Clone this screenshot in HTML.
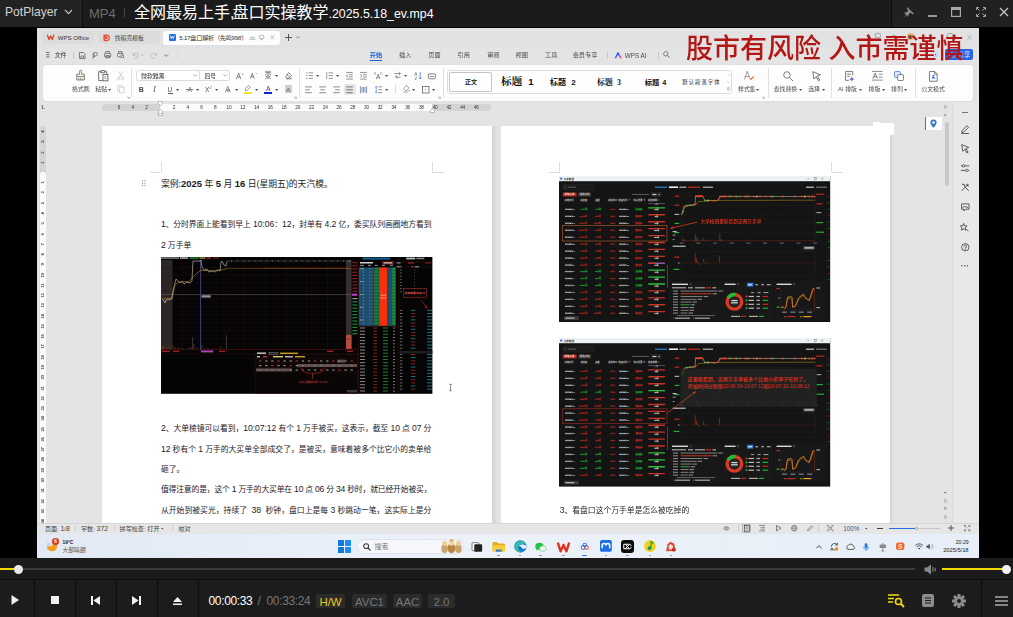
<!DOCTYPE html>
<html lang="zh">
<head>
<meta charset="utf-8">
<title>PotPlayer</title>
<style>
*{box-sizing:border-box;margin:0;padding:0}
html,body{width:1013px;height:617px;overflow:hidden;background:#000}
body{position:relative;font-family:"Liberation Sans","Noto Sans CJK SC",sans-serif;color:#fff}
.abs,.abs div,.abs svg{position:absolute}
.abs svg{overflow:visible}
.t{white-space:nowrap}
#v{left:37px;top:27.6px;width:942px;height:530.6px;background:#e4e4e4;overflow:hidden;color:#333}
#w{left:-37px;top:-27.6px;width:1013px;height:617px;filter:blur(0.35px)}
.serif{font-family:"Liberation Serif","Noto Serif CJK SC",serif}
</style>
</head>
<body>
<div class="abs" style="left:0;top:0;width:1013px;height:617px">
<div id="v"><div id="w">
<div style="left:37px;top:27px;width:942px;height:21px;background:#e2e2e2;"></div>
<div style="left:41.5px;top:30.8px;width:53.5px;height:13.6px;background:#dcdcdc;border-radius:3px"></div>
<svg style="left:46.80px;top:34.10px;" width="7.4" height="6.4" viewBox="0 0 7.4 6.4"><path d="M0.3 0.8 L2 5.6 L3.6 2 L5.2 5.6 L7 0.8" fill="none" stroke="#e03a22" stroke-width="1.3" stroke-linejoin="round"/></svg>
<div class="t" style="left:57.7px;top:33.66px;font-size:6.1px;line-height:7px;color:#333;">WPS Office</div>
<div style="left:98.3px;top:30.8px;width:61.8px;height:13.6px;background:#dcdcdc;border-radius:3px"></div>
<svg style="left:103.40px;top:33.60px;" width="7.2" height="7.6" viewBox="0 0 7.2 7.6"><path d="M0.4 1.6 A1.2 1.2 0 0 1 1.6 0.4 H3.6 A3.4 3.4 0 0 1 3.6 7.2 H1.6 A1.2 1.2 0 0 1 0.4 6 Z" fill="#f0503a"/><path d="M3.6 2.2 A1.7 1.7 0 1 1 2.2 4.6" fill="none" stroke="#fff" stroke-width="0.8"/></svg>
<div class="t" style="left:114.8px;top:34.55px;font-size:5.8px;line-height:6px;color:#444;">找稻壳模板</div>
<div style="left:162.5px;top:30.5px;width:117.5px;height:14.3px;background:#fdfdfd;border-radius:3px"></div>
<div style="left:168.5px;top:33.8px;width:7px;height:7px;background:#1a6fe0;border-radius:1.2px"></div>
<svg style="left:169.70px;top:35.20px;" width="4.6" height="4.2" viewBox="0 0 4.6 4.2"><path d="M0.3 0.5 L1.3 3.6 L2.3 1.4 L3.3 3.6 L4.3 0.5" fill="none" stroke="#fff" stroke-width="0.8"/></svg>
<div class="t" style="left:179.3px;top:33.66px;font-size:6.1px;line-height:7px;color:#333;letter-spacing:-0.2px">5.17盘口解析（先鸣998）</div>
<div class="t" style="left:248.2px;top:34.60px;font-size:5.4px;line-height:6px;color:#999;">.dc</div>
<svg style="left:259.40px;top:34.90px;" width="5.2" height="5" viewBox="0 0 5.2 5"><rect x="0.4" y="0.4" width="4.4" height="3.2" rx="0.8" fill="none" stroke="#999" stroke-width="0.7"/><path d="M1.6 4.6 H3.6" stroke="#999" stroke-width="0.7"/></svg>
<svg style="left:270.00px;top:35.10px;" width="4.6" height="4.6" viewBox="0 0 4.6 4.6"><path d="M0.5 0.5 L4.1 4.1 M4.1 0.5 L0.5 4.1" stroke="#999" stroke-width="0.7"/></svg>
<svg style="left:284.50px;top:33.90px;" width="7" height="7" viewBox="0 0 7 7"><path d="M3.5 0 V7 M0 3.5 H7" stroke="#444" stroke-width="0.9"/></svg>
<svg style="left:296.20px;top:36.30px;" width="3.6" height="2.6" viewBox="0 0 3.6 2.6"><path d="M0.3 0.5 L1.8 2 L3.3 0.5" fill="none" stroke="#666" stroke-width="0.7"/></svg>
<svg style="left:967.00px;top:35.10px;" width="5" height="5" viewBox="0 0 5 5"><path d="M0.5 0.5 L4.5 4.5 M4.5 0.5 L0.5 4.5" stroke="#999" stroke-width="0.7"/></svg>
<svg style="left:874.90px;top:33.10px;" width="5.8" height="5" viewBox="0 0 5.8 5"><rect x="0.4" y="0.4" width="5" height="4.2" rx="0.9" fill="none" stroke="#8a8a8a" stroke-width="0.7"/></svg>
<svg style="left:890.50px;top:33.60px;" width="5.6" height="4" viewBox="0 0 5.6 4"><path d="M0.4 3.6 A2.4 2.4 0 0 1 5.2 3.6" fill="none" stroke="#8a8a8a" stroke-width="0.7"/></svg>
<div style="left:906.6px;top:33px;width:7.4px;height:7.4px;background:#e8b070;border-radius:50%"></div>
<div style="left:908.2px;top:35px;width:4.2px;height:4.2px;background:#7a4a2a;border-radius:50%"></div>
<svg style="left:947.40px;top:33.10px;" width="5.8" height="5" viewBox="0 0 5.8 5"><rect x="0.4" y="0.4" width="5" height="4.2" rx="0.9" fill="none" stroke="#8a8a8a" stroke-width="0.7"/></svg>
<svg style="left:933.40px;top:51.80px;" width="5.2" height="5.2" viewBox="0 0 5.2 5.2"><circle cx="2.6" cy="2.6" r="2.3" fill="#f4f7ff" stroke="#9aa8c8" stroke-width="0.5"/><circle cx="2.6" cy="2.6" r="0.9" fill="#3a6ae0"/></svg>
<svg style="left:46.40px;top:52.10px;" width="3.6" height="5.4" viewBox="0 0 3.6 5.4"><path d="M0 0.5 H3.6 M0 2.7 H3.6 M0 4.9 H3.6" stroke="#444" stroke-width="0.7"/></svg>
<div class="t" style="left:54.7px;top:52.18px;font-size:5.9px;line-height:6px;color:#333;">文件</div>
<div style="left:72.7px;top:51.5px;width:0.6px;height:7px;background:#c8c8c8;"></div>
<svg style="left:78.95px;top:51.50px;" width="6.5" height="7" viewBox="0 0 6.5 7"><path d="M0.5 0.5 H4.4 L6 2.2 V6.5 H0.5 Z M2 6.4 V4 H4.6 V6.4" fill="none" stroke="#555" stroke-width="0.7"/></svg>
<svg style="left:92.30px;top:51.50px;" width="6" height="7" viewBox="0 0 6 7"><circle cx="3.6" cy="2.2" r="1.8" fill="none" stroke="#555" stroke-width="0.7"/><path d="M1.2 0.6 V6.8 M1.2 4.6 H3" stroke="#555" stroke-width="0.7" fill="none"/></svg>
<svg style="left:104.30px;top:51.40px;" width="7.4" height="7.2" viewBox="0 0 7.4 7.2"><rect x="0.5" y="2.4" width="6.4" height="3.4" rx="0.8" fill="none" stroke="#555" stroke-width="0.7"/><path d="M1.8 2.4 V0.5 H5.6 V2.4 M1.8 4.6 H5.6 V6.8 H1.8 Z" fill="none" stroke="#555" stroke-width="0.7"/></svg>
<svg style="left:117.30px;top:51.30px;" width="7.4" height="7.4" viewBox="0 0 7.4 7.4"><rect x="0.5" y="2.4" width="5.6" height="3.4" rx="0.8" fill="none" stroke="#555" stroke-width="0.7"/><path d="M1.6 2.4 V0.5 H5 V2.4" fill="none" stroke="#555" stroke-width="0.7"/><circle cx="5.2" cy="5.2" r="1.4" fill="#e4e4e4" stroke="#555" stroke-width="0.7"/><path d="M6.2 6.2 L7.2 7.2" stroke="#555" stroke-width="0.7"/></svg>
<svg style="left:131.80px;top:51.70px;" width="6.4" height="6.6" viewBox="0 0 6.4 6.6"><path d="M1 1 V3.4 H3.4 M1.2 3.2 A2.6 2.6 0 1 1 2.6 6" fill="none" stroke="#aaa" stroke-width="0.7"/></svg>
<svg style="left:140.50px;top:54.40px;" width="3" height="2" viewBox="0 0 3 2"><path d="M0.3 0.4 L1.5 1.6 L2.7 0.4" fill="none" stroke="#aaa" stroke-width="0.6"/></svg>
<svg style="left:150.80px;top:51.70px;" width="6.4" height="6.6" viewBox="0 0 6.4 6.6"><path d="M5.4 1 V3.4 H3 M5.2 3.2 A2.6 2.6 0 1 0 3.8 6" fill="none" stroke="#bbb" stroke-width="0.7"/></svg>
<svg style="left:164.40px;top:53.80px;" width="4.6" height="3" viewBox="0 0 4.6 3"><path d="M0.4 0.5 L2.3 2.4 L4.2 0.5" fill="none" stroke="#555" stroke-width="0.8"/></svg>
<div style="left:176.6px;top:51.5px;width:0.6px;height:7px;background:#d9d9d9;"></div>
<div class="t" style="left:369.8px;top:51.49px;font-size:6.2px;line-height:7px;color:#1f63d8;font-weight:bold;">开始</div>
<div class="t" style="left:399px;top:51.49px;font-size:6.2px;line-height:7px;color:#4a4a4a;">插入</div>
<div class="t" style="left:428.3px;top:51.49px;font-size:6.2px;line-height:7px;color:#4a4a4a;">页面</div>
<div class="t" style="left:457.6px;top:51.49px;font-size:6.2px;line-height:7px;color:#4a4a4a;">引用</div>
<div class="t" style="left:487.2px;top:51.49px;font-size:6.2px;line-height:7px;color:#4a4a4a;">审阅</div>
<div class="t" style="left:515.5px;top:51.49px;font-size:6.2px;line-height:7px;color:#4a4a4a;">视图</div>
<div class="t" style="left:545px;top:51.49px;font-size:6.2px;line-height:7px;color:#4a4a4a;">工具</div>
<div style="left:369.8px;top:60.3px;width:12.6px;height:1.1px;background:#1f63d8;"></div>
<div class="t" style="left:572.7px;top:51.49px;font-size:6.2px;line-height:7px;color:#4a4a4a;">会员专享</div>
<div style="left:606.5px;top:51.5px;width:0.6px;height:7px;background:#c8c8c8;"></div>
<svg style="left:615.40px;top:51.60px;" width="6.4" height="6.4" viewBox="0 0 6.4 6.4"><path d="M0.6 5.6 L3 0.8 L4.2 3.4" fill="none" stroke="#3d5cf5" stroke-width="1.4" stroke-linecap="round" stroke-linejoin="round"/><path d="M4.4 3.6 L5.6 5.6" stroke="#f0358f" stroke-width="1.4" stroke-linecap="round"/></svg>
<div class="t" style="left:624.8px;top:51.53px;font-size:6.3px;line-height:7px;color:#4a4a4a;">WPS AI</div>
<div style="left:657.7px;top:51.5px;width:0.6px;height:7px;background:#c8c8c8;"></div>
<svg style="left:663.40px;top:51.40px;" width="7.2" height="7.2" viewBox="0 0 7.2 7.2"><circle cx="2.8" cy="2.8" r="2.2" fill="none" stroke="#666" stroke-width="0.8"/><path d="M4.4 4.4 L6.8 6.8" stroke="#666" stroke-width="0.9"/></svg>
<div class="t" style="left:686px;top:33.99px;font-size:27px;line-height:30px;color:#b41616;z-index:5;font-weight:500;">股市有风险 入市需谨慎</div>
<div style="left:945.3px;top:49.4px;width:27.3px;height:11px;background:#2a63e8;border-radius:2px"></div>
<div class="t" style="left:957.6px;top:51.37px;font-size:6.4px;line-height:7px;color:#e8eeff;">分享</div>
<svg style="left:948.50px;top:52.00px;" width="6" height="6" viewBox="0 0 6 6"><path d="M0.5 3.4 A2.2 2.2 0 0 1 4.6 2 A1.6 1.6 0 0 1 4.6 5.2 H1.6 A1.3 1.3 0 0 1 0.5 3.4 Z" fill="none" stroke="#dfe8ff" stroke-width="0.6"/></svg>
<div style="left:43px;top:64.7px;width:929.7px;height:36.2px;background:#fdfdfd;border-radius:3.5px;box-shadow:0 0 1.5px rgba(0,0,0,.12)"></div>
<svg style="left:75.60px;top:69.90px;" width="9.2" height="10.6" viewBox="0 0 9.2 10.6"><path d="M3.6 4.2 V1.2 A1 1 0 0 1 5.6 1.2 V4.2 H8.4 V6.4 H0.8 V4.2 Z M0.8 6.4 V10 H8.4 V6.4 M2.8 10 V8.4 M4.6 10 V7.8 M6.4 10 V8.6" fill="none" stroke="#5a5a5a" stroke-width="0.75" stroke-linejoin="round"/><path d="M1.2 6.8 H8 V9.6 H1.2 Z" fill="#f0c890" opacity=".35"/></svg>
<div class="t" style="left:72px;top:86.48px;font-size:5.9px;line-height:6px;color:#4a4a4a;">格式刷</div>
<svg style="left:97.99px;top:69.62px;" width="10.62" height="11.56" viewBox="0 0 9 9.8"><path d="M2.4 1.4 H0.6 V9 H4 M5.8 1.4 H7.4 V3.4 M2.4 0.5 H5.8 V2.3 H2.4 Z" fill="none" stroke="#555" stroke-width="0.7"/><rect x="4.2" y="3.8" width="4.2" height="5.4" fill="#fff" stroke="#555" stroke-width="0.7"/><path d="M5.4 5.6 H7.2 M5.4 7.2 H7.2" stroke="#555" stroke-width="0.5"/></svg>
<div class="t" style="left:95.3px;top:86.48px;font-size:5.9px;line-height:6px;color:#4a4a4a;">粘贴</div>
<svg style="left:108.40px;top:88.64px;" width="3.2" height="1.92" viewBox="0 0 3.2 1.92"><path d="M0 0 L3.2 0 L1.6 1.92 Z" fill="#555"/></svg>
<svg style="left:117.32px;top:71.00px;" width="7.36" height="9.2" viewBox="0 0 6.4 8"><path d="M1.4 0.4 L4.6 5.6 M5 0.4 L1.8 5.6" stroke="#c4c4c4" stroke-width="0.6"/><circle cx="1.4" cy="6.6" r="1.1" fill="none" stroke="#c4c4c4" stroke-width="0.6"/><circle cx="5" cy="6.6" r="1.1" fill="none" stroke="#c4c4c4" stroke-width="0.6"/></svg>
<svg style="left:117.19px;top:85.16px;" width="7.62" height="8.29" viewBox="0 0 6.8 7.4"><path d="M4.4 1.8 V0.5 H0.5 V5.4 H2" fill="none" stroke="#c4c4c4" stroke-width="0.6"/><rect x="2.2" y="2" width="4" height="5" fill="none" stroke="#c4c4c4" stroke-width="0.6"/></svg>
<svg style="left:126.60px;top:96.20px;" width="2.8" height="2.8" viewBox="0 0 2.8 2.8"><path d="M0.3 0.3 L2.2 2.2 M2.4 0.8 V2.4 H0.8" fill="none" stroke="#888" stroke-width="0.5"/></svg>
<div style="left:131.4px;top:67.5px;width:0.6px;height:30.5px;background:#e0e0e0;"></div>
<div style="left:136px;top:70.4px;width:64px;height:10.8px;background:#fff;border:0.7px solid #dcdcdc;border-radius:2.5px 0 0 2.5px"></div>
<div style="left:200px;top:70.4px;width:30.2px;height:10.8px;background:#fff;border:0.7px solid #dcdcdc;border-left:none;border-radius:0 2.5px 2.5px 0"></div>
<div class="t" style="left:141px;top:72.88px;font-size:5.9px;line-height:6px;color:#333;">微软雅黑</div>
<div class="t" style="left:204.4px;top:72.85px;font-size:5.8px;line-height:6px;color:#333;">四号</div>
<svg style="left:192.80px;top:74.40px;" width="4.4" height="2.8" viewBox="0 0 4.4 2.8"><path d="M0.3 0.4 L2.2 2.3 L4.1 0.4" fill="none" stroke="#777" stroke-width="0.6"/></svg>
<svg style="left:222.80px;top:74.40px;" width="4.4" height="2.8" viewBox="0 0 4.4 2.8"><path d="M0.3 0.4 L2.2 2.3 L4.1 0.4" fill="none" stroke="#777" stroke-width="0.6"/></svg>
<svg style="left:236.00px;top:72.75px;" width="5.2" height="6.5" viewBox="0 0 5.2 6.5"><path d="M0.3 6.2 L2.6 0.3 L4.9 6.2 M1.1440000000000001 4.0920000000000005 H4.056" fill="none" stroke="#555" stroke-width="0.7"/></svg>
<div class="t" style="left:241.2px;top:70.75px;font-size:4.2px;line-height:5px;color:#555;">+</div>
<svg style="left:250.30px;top:73.35px;" width="4.6" height="5.9" viewBox="0 0 4.6 5.8999999999999995"><path d="M0.3 5.6 L2.3 0.3 L4.3 5.6 M1.012 3.6959999999999997 H3.5879999999999996" fill="none" stroke="#555" stroke-width="0.7"/></svg>
<div class="t" style="left:255.4px;top:70.90px;font-size:4.6px;line-height:5px;color:#555;">-</div>
<div class="t" style="left:264.6px;top:71.26px;font-size:7.2px;line-height:9px;color:#555;">变</div>
<svg style="left:265.30px;top:71.10px;" width="6" height="1" viewBox="0 0 6 1"><path d="M0 0.4 H6" stroke="#555" stroke-width="0.5"/></svg>
<svg style="left:274.60px;top:75.04px;" width="3.2" height="1.92" viewBox="0 0 3.2 1.92"><path d="M0 0 L3.2 0 L1.6 1.92 Z" fill="#555"/></svg>
<svg style="left:284.70px;top:72.10px;" width="7.4" height="7.4" viewBox="0 0 7.4 7.4"><path d="M3.6 0.6 L6.6 3.6 L3.8 6.4 H2 L0.6 5 Z M2 2.4 L5 5.4 M1 6.8 H7" fill="none" stroke="#555" stroke-width="0.7" stroke-linejoin="round"/></svg>
<div class="t" style="left:138.8px;top:85.89px;font-size:7px;line-height:7px;color:#444;font-weight:bold">B</div>
<div class="t" style="left:153px;top:84.38px;font-size:8.6px;line-height:10px;color:#555;font-style:italic;font-family:'Liberation Serif',serif">I</div>
<div class="t" style="left:167.6px;top:85.54px;font-size:6.6px;line-height:7px;color:#555;">U</div>
<div style="left:167.6px;top:92.6px;width:5px;height:0.6px;background:#555;"></div>
<svg style="left:175.90px;top:88.64px;" width="3.2" height="1.92" viewBox="0 0 3.2 1.92"><path d="M0 0 L3.2 0 L1.6 1.92 Z" fill="#555"/></svg>
<div class="t" style="left:187.4px;top:85.72px;font-size:6.8px;line-height:7px;color:#7a7a7a;">A</div>
<div style="left:186px;top:89.3px;width:7.2px;height:0.5px;background:#7a7a7a;"></div>
<svg style="left:195.70px;top:88.64px;" width="3.2" height="1.92" viewBox="0 0 3.2 1.92"><path d="M0 0 L3.2 0 L1.6 1.92 Z" fill="#555"/></svg>
<div class="t" style="left:205px;top:85.94px;font-size:6.6px;line-height:7px;color:#555;">X</div>
<div class="t" style="left:209.6px;top:85.71px;font-size:3.8px;line-height:4px;color:#555;">2</div>
<svg style="left:215.40px;top:88.64px;" width="3.2" height="1.92" viewBox="0 0 3.2 1.92"><path d="M0 0 L3.2 0 L1.6 1.92 Z" fill="#555"/></svg>
<svg style="left:225.20px;top:85.85px;" width="5.6" height="6.7" viewBox="0 0 5.6 6.7"><path d="M0.3 6.4 L2.8 0.3 L5.3 6.4 M1.232 4.224 H4.367999999999999" fill="none" stroke="#555" stroke-width="0.6"/></svg>
<svg style="left:226.60px;top:89.20px;" width="2.8" height="2.8" viewBox="0 0 2.8 2.8"><circle cx="1.4" cy="1.4" r="1.2" fill="none" stroke="#555" stroke-width="0.5"/></svg>
<svg style="left:234.60px;top:88.64px;" width="3.2" height="1.92" viewBox="0 0 3.2 1.92"><path d="M0 0 L3.2 0 L1.6 1.92 Z" fill="#555"/></svg>
<svg style="left:244.10px;top:85.00px;" width="7" height="6" viewBox="0 0 7 6"><path d="M4.4 0.4 L6.4 2.4 L3 5.4 L1.2 5.6 L1.4 3.6 Z" fill="none" stroke="#555" stroke-width="0.6"/></svg>
<div style="left:243.6px;top:91.8px;width:8.4px;height:1.8px;background:#f5e12a;"></div>
<svg style="left:255.40px;top:88.64px;" width="3.2" height="1.92" viewBox="0 0 3.2 1.92"><path d="M0 0 L3.2 0 L1.6 1.92 Z" fill="#555"/></svg>
<div class="t" style="left:266px;top:84.84px;font-size:6.6px;line-height:7px;color:#444;">A</div>
<div style="left:264.4px;top:92px;width:7.8px;height:1.7px;background:#1428c8;"></div>
<svg style="left:274.60px;top:88.64px;" width="3.2" height="1.92" viewBox="0 0 3.2 1.92"><path d="M0 0 L3.2 0 L1.6 1.92 Z" fill="#555"/></svg>
<div style="left:284.6px;top:85.4px;width:7.6px;height:7.8px;background:#cfcfcf;border-radius:0.6px"></div>
<div class="t" style="left:286.3px;top:85.79px;font-size:6.2px;line-height:7px;color:#555;">A</div>
<svg style="left:294.00px;top:96.20px;" width="2.8" height="2.8" viewBox="0 0 2.8 2.8"><path d="M0.3 0.3 L2.2 2.2 M2.4 0.8 V2.4 H0.8" fill="none" stroke="#888" stroke-width="0.5"/></svg>
<div style="left:298.6px;top:67.5px;width:0.6px;height:30.5px;background:#e0e0e0;"></div>
<svg style="left:305.50px;top:72.20px;" width="7" height="7.2" viewBox="0 0 7 7.2"><path d="M2.6 0.8 H7" stroke="#666" stroke-width="0.7"/><path d="M2.6 3.6 H7" stroke="#666" stroke-width="0.7"/><path d="M2.6 6.4 H7" stroke="#666" stroke-width="0.7"/><rect x="0.2" y="0.30000000000000004" width="1" height="1" fill="#666"/><rect x="0.2" y="3.1" width="1" height="1" fill="#666"/><rect x="0.2" y="5.9" width="1" height="1" fill="#666"/></svg>
<svg style="left:315.80px;top:75.04px;" width="3.2" height="1.92" viewBox="0 0 3.2 1.92"><path d="M0 0 L3.2 0 L1.6 1.92 Z" fill="#555"/></svg>
<svg style="left:325.70px;top:72.20px;" width="7" height="7.2" viewBox="0 0 7 7.2"><path d="M2.6 0.8 H7" stroke="#666" stroke-width="0.7"/><path d="M2.6 3.6 H7" stroke="#666" stroke-width="0.7"/><path d="M2.6 6.4 H7" stroke="#666" stroke-width="0.7"/><path d="M0.7 0 V7.2" stroke="#666" stroke-width="0.6"/></svg>
<svg style="left:335.60px;top:75.04px;" width="3.2" height="1.92" viewBox="0 0 3.2 1.92"><path d="M0 0 L3.2 0 L1.6 1.92 Z" fill="#555"/></svg>
<svg style="left:346.00px;top:72.00px;" width="7" height="7.6" viewBox="0 0 7 7.6"><path d="M0.2 0.5 H6.8 M3 2.7 H6.8 M3 4.9 H6.8 M0.2 7.1 H6.8" stroke="#666" stroke-width="0.7"/><path d="M2 2.4 L0.4 3.8 L2 5.2" fill="none" stroke="#2a6ae0" stroke-width="0.7"/></svg>
<svg style="left:359.50px;top:72.00px;" width="7" height="7.6" viewBox="0 0 7 7.6"><path d="M0.2 0.5 H6.8 M3 2.7 H6.8 M3 4.9 H6.8 M0.2 7.1 H6.8" stroke="#666" stroke-width="0.7"/><path d="M0.4 2.4 L2 3.8 L0.4 5.2" fill="none" stroke="#2a6ae0" stroke-width="0.7"/></svg>
<div class="t" style="left:376px;top:72.57px;font-size:6.4px;line-height:7px;color:#555;">A</div>
<svg style="left:374.40px;top:71.50px;" width="2" height="3" viewBox="0 0 2 3"><path d="M0 1.6 L1.2 0.4 M1.2 0.4 V2.8" stroke="#555" stroke-width="0.5" fill="none"/></svg>
<svg style="left:380.60px;top:71.50px;" width="2" height="3" viewBox="0 0 2 3"><path d="M0 0.4 L1.2 1.6 M0 0.4 V2.8" stroke="#2a6ae0" stroke-width="0.5" fill="none"/></svg>
<svg style="left:384.80px;top:75.04px;" width="3.2" height="1.92" viewBox="0 0 3.2 1.92"><path d="M0 0 L3.2 0 L1.6 1.92 Z" fill="#555"/></svg>
<svg style="left:394.20px;top:72.10px;" width="7" height="7" viewBox="0 0 7 7"><path d="M0.4 1.6 H6.4 M4.8 0.2 L6.4 1.6 L4.8 3 M6.6 5.2 H2 M2 5.2 V3.6 M3.4 3.8 L2 5.2 L3.4 6.6" fill="none" stroke="#666" stroke-width="0.7"/></svg>
<svg style="left:404.40px;top:75.04px;" width="3.2" height="1.92" viewBox="0 0 3.2 1.92"><path d="M0 0 L3.2 0 L1.6 1.92 Z" fill="#555"/></svg>
<div class="t" style="left:414.2px;top:71.90px;font-size:4.6px;line-height:5px;color:#555;">A</div>
<div class="t" style="left:414.4px;top:75.75px;font-size:4.2px;line-height:5px;color:#555;">Z</div>
<svg style="left:419.40px;top:72.20px;" width="2.4" height="7.2" viewBox="0 0 2.4 7.2"><path d="M1.2 0 V7 M0 5.6 L1.2 7 L2.4 5.6" fill="none" stroke="#2a6ae0" stroke-width="0.7"/></svg>
<svg style="left:428.10px;top:72.50px;" width="7.8" height="6.6" viewBox="0 0 7.8 6.6"><rect x="0.4" y="0.8" width="7" height="5" rx="0.8" fill="none" stroke="#555" stroke-width="0.7"/><path d="M2 3.3 H6" stroke="#555" stroke-width="0.7"/></svg>
<svg style="left:305.20px;top:85.50px;" width="7" height="7.6" viewBox="0 0 7 7.6"><path d="M0.2 0.9 H6.8" stroke="#666" stroke-width="0.75"/><path d="M0.2 3.8 H4.8" stroke="#666" stroke-width="0.75"/><path d="M0.2 6.7 H6.8" stroke="#666" stroke-width="0.75"/></svg>
<svg style="left:318.70px;top:85.50px;" width="7" height="7.6" viewBox="0 0 7 7.6"><path d="M0.2 0.9 H6.8" stroke="#666" stroke-width="0.75"/><path d="M1.3 3.8 H5.7" stroke="#666" stroke-width="0.75"/><path d="M0.2 6.7 H6.8" stroke="#666" stroke-width="0.75"/></svg>
<svg style="left:332.50px;top:85.50px;" width="7" height="7.6" viewBox="0 0 7 7.6"><path d="M0.2 0.9 H6.8" stroke="#666" stroke-width="0.75"/><path d="M2.2 3.8 H6.8" stroke="#666" stroke-width="0.75"/><path d="M0.2 6.7 H6.8" stroke="#666" stroke-width="0.75"/></svg>
<div style="left:344.3px;top:84px;width:11.3px;height:10.8px;background:#e7e7e7;border-radius:1.5px"></div>
<svg style="left:346.40px;top:85.50px;" width="7" height="7.6" viewBox="0 0 7 7.6"><path d="M0.2 0.9 H6.8" stroke="#4a4a4a" stroke-width="0.75"/><path d="M0.2 3.8 H6.8" stroke="#4a4a4a" stroke-width="0.75"/><path d="M0.2 6.7 H6.8" stroke="#4a4a4a" stroke-width="0.75"/></svg>
<svg style="left:360.10px;top:85.50px;" width="7" height="7.6" viewBox="0 0 7 7.6"><path d="M0.4 0.3 V7.3 M6.6 0.3 V7.3" stroke="#666" stroke-width="0.7"/><path d="M2 1 V6.6 M3.5 1 V6.6 M5 1 V6.6" stroke="#2a6ae0" stroke-width="0.7"/></svg>
<svg style="left:375.00px;top:85.60px;" width="7.2" height="7.4" viewBox="0 0 7.2 7.4"><path d="M3.2 0.8 H7 M3.2 3.7 H7 M3.2 6.6 H7" stroke="#666" stroke-width="0.7"/><path d="M1.2 0.3 V7.1 M0.2 1.4 L1.2 0.3 L2.2 1.4 M0.2 6 L1.2 7.1 L2.2 6" fill="none" stroke="#2a6ae0" stroke-width="0.6"/></svg>
<svg style="left:384.80px;top:88.64px;" width="3.2" height="1.92" viewBox="0 0 3.2 1.92"><path d="M0 0 L3.2 0 L1.6 1.92 Z" fill="#555"/></svg>
<div style="left:395.2px;top:85.4px;width:0.6px;height:7.8px;background:#d8d8d8;"></div>
<svg style="left:402.60px;top:85.30px;" width="7.2" height="7.4" viewBox="0 0 7.2 7.4"><path d="M3.4 0.4 L6 3 L3 6 L0.6 3.6 Z M0.4 7 H5" fill="none" stroke="#666" stroke-width="0.6"/><circle cx="6.2" cy="5.8" r="0.8" fill="#e66"/></svg>
<svg style="left:412.10px;top:88.64px;" width="3.2" height="1.92" viewBox="0 0 3.2 1.92"><path d="M0 0 L3.2 0 L1.6 1.92 Z" fill="#555"/></svg>
<svg style="left:421.60px;top:85.60px;" width="7.4" height="7.4" viewBox="0 0 7.4 7.4"><rect x="0.4" y="0.4" width="6.6" height="6.6" fill="none" stroke="#555" stroke-width="0.7"/><path d="M3.7 0.4 V7 M0.4 3.7 H7" stroke="#999" stroke-width="0.4" stroke-dasharray="0.8 0.6"/></svg>
<svg style="left:431.90px;top:88.64px;" width="3.2" height="1.92" viewBox="0 0 3.2 1.92"><path d="M0 0 L3.2 0 L1.6 1.92 Z" fill="#555"/></svg>
<svg style="left:438.20px;top:96.20px;" width="2.8" height="2.8" viewBox="0 0 2.8 2.8"><path d="M0.3 0.3 L2.2 2.2 M2.4 0.8 V2.4 H0.8" fill="none" stroke="#888" stroke-width="0.5"/></svg>
<div style="left:442.6px;top:67.5px;width:0.6px;height:30.5px;background:#e0e0e0;"></div>
<div style="left:447px;top:69.7px;width:285.4px;height:24.4px;background:#fefefe;border:0.8px solid #dcdcdc;border-radius:3px"></div>
<div style="left:449px;top:72.2px;width:43.2px;height:19.4px;background:#fff;border:1.1px solid #c4c4c4;border-radius:2px"></div>
<div class="t" style="left:465px;top:79.22px;font-size:6px;line-height:6px;color:#222;font-weight:bold">正文</div>
<div class="t" style="left:501px;top:75.92px;font-size:10.6px;line-height:12px;color:#111;font-family:'Liberation Serif','Noto Serif CJK SC',serif;font-weight:bold;letter-spacing:0.2px">标题<span style="margin-left:5.6px;font-family:'Liberation Sans',sans-serif;font-size:9.6px">1</span></div>
<div class="t" style="left:550px;top:77.96px;font-size:8px;line-height:9px;color:#111;font-weight:bold">标题<span style="margin-left:5.2px">2</span></div>
<div class="t" style="left:597px;top:77.92px;font-size:7.9px;line-height:9px;color:#111;font-family:'Liberation Serif','Noto Serif CJK SC',serif;font-weight:bold">标题<span style="margin-left:4.2px">3</span></div>
<div class="t" style="left:644.7px;top:77.68px;font-size:7.25px;line-height:9px;color:#111;font-weight:bold">标题<span style="margin-left:3px">4</span></div>
<div class="t" style="left:682.3px;top:79.00px;font-size:5.4px;line-height:6px;color:#262626;letter-spacing:1px">默认段落字体</div>
<svg style="left:726.60px;top:73.50px;" width="2.8" height="2" viewBox="0 0 2.8 2"><path d="M0.2 1.6 L1.4 0.4 L2.6 1.6" fill="none" stroke="#aaa" stroke-width="0.5"/></svg>
<svg style="left:726.60px;top:81.00px;" width="2.8" height="2" viewBox="0 0 2.8 2"><path d="M0.2 0.4 L1.4 1.6 L2.6 0.4" fill="none" stroke="#aaa" stroke-width="0.5"/></svg>
<svg style="left:726.60px;top:88.10px;" width="2.8" height="2.6" viewBox="0 0 2.8 2.6"><path d="M0.2 0 H2.6 M0.2 1.2 L1.4 2.4 L2.6 1.2" fill="none" stroke="#555" stroke-width="0.6"/></svg>
<svg style="left:744.30px;top:71.45px;" width="6.6" height="8.7" viewBox="0 0 6.6 8.700000000000001"><path d="M0.3 8.4 L3.3 0.3 L6.3 8.4 M1.452 5.5440000000000005 H5.148" fill="none" stroke="#666" stroke-width="0.65"/></svg>
<svg style="left:750.30px;top:75.50px;" width="4.2" height="4.2" viewBox="0 0 4.2 4.2"><path d="M0.4 3.8 L3.8 0.4" stroke="#e8702a" stroke-width="1.2"/></svg>
<div class="t" style="left:738px;top:86.48px;font-size:5.9px;line-height:6px;color:#4a4a4a;">样式集</div>
<svg style="left:756.40px;top:88.64px;" width="3.2" height="1.92" viewBox="0 0 3.2 1.92"><path d="M0 0 L3.2 0 L1.6 1.92 Z" fill="#555"/></svg>
<svg style="left:762.20px;top:96.20px;" width="2.8" height="2.8" viewBox="0 0 2.8 2.8"><path d="M0.3 0.3 L2.2 2.2 M2.4 0.8 V2.4 H0.8" fill="none" stroke="#888" stroke-width="0.5"/></svg>
<div style="left:767.6px;top:67.5px;width:0.6px;height:30.5px;background:#e0e0e0;"></div>
<svg style="left:782.58px;top:70.78px;" width="10.44" height="10.44" viewBox="0 0 9 9"><circle cx="3.4" cy="3.4" r="2.8" fill="none" stroke="#666" stroke-width="0.7"/><path d="M5.4 5.4 L8.6 8.6" stroke="#666" stroke-width="0.8"/></svg>
<div class="t" style="left:773.7px;top:86.48px;font-size:5.9px;line-height:6px;color:#4a4a4a;">查找替换</div>
<svg style="left:798.80px;top:88.64px;" width="3.2" height="1.92" viewBox="0 0 3.2 1.92"><path d="M0 0 L3.2 0 L1.6 1.92 Z" fill="#555"/></svg>
<svg style="left:812.04px;top:71.07px;" width="9.12" height="10.26" viewBox="0 0 8 9"><path d="M0.8 0.6 L7.4 3.4 L4.6 4.4 L6.8 8 L5.6 8.6 L3.6 5 L1.6 7 Z" fill="none" stroke="#555" stroke-width="0.7" stroke-linejoin="round"/></svg>
<div class="t" style="left:808.2px;top:86.48px;font-size:5.9px;line-height:6px;color:#4a4a4a;">选择</div>
<svg style="left:821.60px;top:88.64px;" width="3.2" height="1.92" viewBox="0 0 3.2 1.92"><path d="M0 0 L3.2 0 L1.6 1.92 Z" fill="#555"/></svg>
<div style="left:831.4px;top:67.5px;width:0.6px;height:30.5px;background:#e0e0e0;"></div>
<svg style="left:845.25px;top:70.50px;" width="9.9" height="11.0" viewBox="0 0 9 10"><path d="M7 4 V0.5 H0.5 V8.5 H3.6 M2 2.8 H5.4 M2 4.8 H4.4" fill="none" stroke="#555" stroke-width="0.7"/><path d="M6.2 5 L6.9 6.7 L8.6 7.4 L6.9 8.1 L6.2 9.8 L5.5 8.1 L3.8 7.4 L5.5 6.7 Z" fill="#7a5cf0"/></svg>
<div class="t" style="left:838px;top:86.48px;font-size:5.9px;line-height:6px;color:#4a4a4a;">AI 排版</div>
<svg style="left:859.40px;top:88.64px;" width="3.2" height="1.92" viewBox="0 0 3.2 1.92"><path d="M0 0 L3.2 0 L1.6 1.92 Z" fill="#555"/></svg>
<svg style="left:871.70px;top:71.23px;" width="10.6" height="9.54" viewBox="0 0 10 9"><path d="M0 0.4 H10 M0 8.6 H10 M6.4 3 H10 M6.4 5.8 H10" stroke="#666" stroke-width="0.7"/><path d="M0.8 7 L3 2 L5.2 7 M1.6 5.4 H4.4" fill="none" stroke="#555" stroke-width="0.7"/></svg>
<div class="t" style="left:868.6px;top:86.48px;font-size:5.9px;line-height:6px;color:#4a4a4a;">排版</div>
<svg style="left:882.00px;top:88.64px;" width="3.2" height="1.92" viewBox="0 0 3.2 1.92"><path d="M0 0 L3.2 0 L1.6 1.92 Z" fill="#555"/></svg>
<svg style="left:894.42px;top:70.92px;" width="10.15" height="10.15" viewBox="0 0 9.4 9.4"><rect x="0.5" y="0.5" width="5.4" height="5.4" rx="0.8" fill="#dfe9fb" stroke="#3a74e0" stroke-width="0.7"/><rect x="3.4" y="3.4" width="5.4" height="5.4" rx="0.8" fill="#fff" stroke="#555" stroke-width="0.7"/></svg>
<div class="t" style="left:891px;top:86.48px;font-size:5.9px;line-height:6px;color:#4a4a4a;">排列</div>
<svg style="left:904.40px;top:88.64px;" width="3.2" height="1.92" viewBox="0 0 3.2 1.92"><path d="M0 0 L3.2 0 L1.6 1.92 Z" fill="#555"/></svg>
<div style="left:914.6px;top:67.5px;width:0.6px;height:30.5px;background:#e0e0e0;"></div>
<svg style="left:928.57px;top:70.60px;" width="8.86" height="10.8" viewBox="0 0 8.2 10"><path d="M0.5 0.5 H5.4 L7.6 2.7 V9.5 H0.5 Z M5.2 0.6 V2.9 H7.5" fill="none" stroke="#555" stroke-width="0.7"/><path d="M2.4 7 A1.7 1.7 0 0 1 5.8 7 Z" fill="#3a74e0"/><circle cx="4.1" cy="4.4" r="1" fill="#3a74e0"/></svg>
<div class="t" style="left:921.3px;top:86.48px;font-size:5.9px;line-height:6px;color:#4a4a4a;">公文模式</div>
<div style="left:102px;top:104.2px;width:388.6px;height:6.4px;background:#d3d3d3;border-radius:3.2px"></div>
<div style="left:160px;top:104.2px;width:271.8px;height:6.4px;background:#fbfbfb;"></div>
<div class="t" style="left:41.6px;top:104.40px;font-size:5.4px;line-height:6px;color:#555;font-weight:bold">L</div>
<div class="t" style="left:142.56px;top:105.14px;font-size:4.7px;line-height:5px;color:#333;width:8px;text-align:center;letter-spacing:-0.2px">2</div>
<div class="t" style="left:128.82000000000002px;top:105.14px;font-size:4.7px;line-height:5px;color:#333;width:8px;text-align:center;letter-spacing:-0.2px">4</div>
<div class="t" style="left:115.08000000000001px;top:105.14px;font-size:4.7px;line-height:5px;color:#333;width:8px;text-align:center;letter-spacing:-0.2px">6</div>
<div class="t" style="left:170.04000000000002px;top:105.14px;font-size:4.7px;line-height:5px;color:#333;width:8px;text-align:center;letter-spacing:-0.2px">2</div>
<div class="t" style="left:183.78px;top:105.14px;font-size:4.7px;line-height:5px;color:#333;width:8px;text-align:center;letter-spacing:-0.2px">4</div>
<div class="t" style="left:197.52px;top:105.14px;font-size:4.7px;line-height:5px;color:#333;width:8px;text-align:center;letter-spacing:-0.2px">6</div>
<div class="t" style="left:211.26000000000002px;top:105.14px;font-size:4.7px;line-height:5px;color:#333;width:8px;text-align:center;letter-spacing:-0.2px">8</div>
<div class="t" style="left:225.0px;top:105.14px;font-size:4.7px;line-height:5px;color:#333;width:8px;text-align:center;letter-spacing:-0.2px">10</div>
<div class="t" style="left:238.74px;top:105.14px;font-size:4.7px;line-height:5px;color:#333;width:8px;text-align:center;letter-spacing:-0.2px">12</div>
<div class="t" style="left:252.48000000000002px;top:105.14px;font-size:4.7px;line-height:5px;color:#333;width:8px;text-align:center;letter-spacing:-0.2px">14</div>
<div class="t" style="left:266.22px;top:105.14px;font-size:4.7px;line-height:5px;color:#333;width:8px;text-align:center;letter-spacing:-0.2px">16</div>
<div class="t" style="left:279.96000000000004px;top:105.14px;font-size:4.7px;line-height:5px;color:#333;width:8px;text-align:center;letter-spacing:-0.2px">18</div>
<div class="t" style="left:293.70000000000005px;top:105.14px;font-size:4.7px;line-height:5px;color:#333;width:8px;text-align:center;letter-spacing:-0.2px">20</div>
<div class="t" style="left:307.44000000000005px;top:105.14px;font-size:4.7px;line-height:5px;color:#333;width:8px;text-align:center;letter-spacing:-0.2px">22</div>
<div class="t" style="left:321.18px;top:105.14px;font-size:4.7px;line-height:5px;color:#333;width:8px;text-align:center;letter-spacing:-0.2px">24</div>
<div class="t" style="left:334.92px;top:105.14px;font-size:4.7px;line-height:5px;color:#333;width:8px;text-align:center;letter-spacing:-0.2px">26</div>
<div class="t" style="left:348.66px;top:105.14px;font-size:4.7px;line-height:5px;color:#333;width:8px;text-align:center;letter-spacing:-0.2px">28</div>
<div class="t" style="left:362.4px;top:105.14px;font-size:4.7px;line-height:5px;color:#333;width:8px;text-align:center;letter-spacing:-0.2px">30</div>
<div class="t" style="left:376.14px;top:105.14px;font-size:4.7px;line-height:5px;color:#333;width:8px;text-align:center;letter-spacing:-0.2px">32</div>
<div class="t" style="left:389.88px;top:105.14px;font-size:4.7px;line-height:5px;color:#333;width:8px;text-align:center;letter-spacing:-0.2px">34</div>
<div class="t" style="left:403.62px;top:105.14px;font-size:4.7px;line-height:5px;color:#333;width:8px;text-align:center;letter-spacing:-0.2px">36</div>
<div class="t" style="left:417.36px;top:105.14px;font-size:4.7px;line-height:5px;color:#333;width:8px;text-align:center;letter-spacing:-0.2px">38</div>
<div class="t" style="left:431.1px;top:105.14px;font-size:4.7px;line-height:5px;color:#333;width:8px;text-align:center;letter-spacing:-0.2px">40</div>
<div class="t" style="left:444.84000000000003px;top:105.14px;font-size:4.7px;line-height:5px;color:#333;width:8px;text-align:center;letter-spacing:-0.2px">42</div>
<div class="t" style="left:458.58000000000004px;top:105.14px;font-size:4.7px;line-height:5px;color:#333;width:8px;text-align:center;letter-spacing:-0.2px">44</div>
<div class="t" style="left:472.32px;top:105.14px;font-size:4.7px;line-height:5px;color:#333;width:8px;text-align:center;letter-spacing:-0.2px">46</div>
<svg style="left:157.80px;top:100.90px;" width="5" height="5" viewBox="0 0 5 5"><path d="M0.4 0.4 H4.6 V2.6 L2.5 4.6 L0.4 2.6 Z" fill="#fff" stroke="#8a8a8a" stroke-width="0.55"/></svg>
<svg style="left:157.80px;top:108.50px;" width="5" height="7" viewBox="0 0 5 7"><path d="M0.4 6.6 H4.6 V2.4 L2.5 0.4 L0.4 2.4 Z M0.4 4.4 H4.6" fill="#fff" stroke="#8a8a8a" stroke-width="0.55"/></svg>
<svg style="left:430.10px;top:107.50px;" width="5" height="5" viewBox="0 0 5 5"><path d="M0.4 4.6 H4.6 V2.4 L2.5 0.4 L0.4 2.4 Z" fill="#fff" stroke="#8a8a8a" stroke-width="0.55"/></svg>
<div style="left:39.8px;top:125.6px;width:6.2px;height:50px;background:#d4d4d4;border-radius:3px 3px 0 0"></div>
<div style="left:39.8px;top:172.4px;width:6.2px;height:351px;background:#fbfbfb;border-radius:2.5px 2.5px 0 0"></div>
<div class="t" style="left:40.3px;top:128.95px;font-size:4.2px;line-height:5px;color:#444;transform:rotate(-90deg);width:5px;text-align:center;font-weight:bold">4</div>
<div class="t" style="left:40.3px;top:139.35px;font-size:4.2px;line-height:5px;color:#444;transform:rotate(-90deg);width:5px;text-align:center;font-weight:bold">3</div>
<div class="t" style="left:40.3px;top:149.65px;font-size:4.2px;line-height:5px;color:#444;transform:rotate(-90deg);width:5px;text-align:center;font-weight:bold">2</div>
<div class="t" style="left:40.3px;top:160.05px;font-size:4.2px;line-height:5px;color:#444;transform:rotate(-90deg);width:5px;text-align:center;font-weight:bold">1</div>
<div class="t" style="left:40.2px;top:180.15px;font-size:4.2px;line-height:5px;color:#444;transform:rotate(-90deg);width:5px;text-align:center;font-weight:bold;letter-spacing:-0.3px">1</div>
<div class="t" style="left:40.2px;top:190.42px;font-size:4.2px;line-height:5px;color:#444;transform:rotate(-90deg);width:5px;text-align:center;font-weight:bold;letter-spacing:-0.3px">2</div>
<div class="t" style="left:40.2px;top:200.69px;font-size:4.2px;line-height:5px;color:#444;transform:rotate(-90deg);width:5px;text-align:center;font-weight:bold;letter-spacing:-0.3px">3</div>
<div class="t" style="left:40.2px;top:210.96px;font-size:4.2px;line-height:5px;color:#444;transform:rotate(-90deg);width:5px;text-align:center;font-weight:bold;letter-spacing:-0.3px">4</div>
<div class="t" style="left:40.2px;top:221.23px;font-size:4.2px;line-height:5px;color:#444;transform:rotate(-90deg);width:5px;text-align:center;font-weight:bold;letter-spacing:-0.3px">5</div>
<div class="t" style="left:40.2px;top:231.50px;font-size:4.2px;line-height:5px;color:#444;transform:rotate(-90deg);width:5px;text-align:center;font-weight:bold;letter-spacing:-0.3px">6</div>
<div class="t" style="left:40.2px;top:241.77px;font-size:4.2px;line-height:5px;color:#444;transform:rotate(-90deg);width:5px;text-align:center;font-weight:bold;letter-spacing:-0.3px">7</div>
<div class="t" style="left:40.2px;top:252.04px;font-size:4.2px;line-height:5px;color:#444;transform:rotate(-90deg);width:5px;text-align:center;font-weight:bold;letter-spacing:-0.3px">8</div>
<div class="t" style="left:40.2px;top:262.31px;font-size:4.2px;line-height:5px;color:#444;transform:rotate(-90deg);width:5px;text-align:center;font-weight:bold;letter-spacing:-0.3px">9</div>
<div class="t" style="left:40.2px;top:272.58px;font-size:4.2px;line-height:5px;color:#444;transform:rotate(-90deg);width:5px;text-align:center;font-weight:bold;letter-spacing:-0.3px">10</div>
<div class="t" style="left:40.2px;top:282.85px;font-size:4.2px;line-height:5px;color:#444;transform:rotate(-90deg);width:5px;text-align:center;font-weight:bold;letter-spacing:-0.3px">11</div>
<div class="t" style="left:40.2px;top:293.12px;font-size:4.2px;line-height:5px;color:#444;transform:rotate(-90deg);width:5px;text-align:center;font-weight:bold;letter-spacing:-0.3px">12</div>
<div class="t" style="left:40.2px;top:303.39px;font-size:4.2px;line-height:5px;color:#444;transform:rotate(-90deg);width:5px;text-align:center;font-weight:bold;letter-spacing:-0.3px">13</div>
<div class="t" style="left:40.2px;top:313.66px;font-size:4.2px;line-height:5px;color:#444;transform:rotate(-90deg);width:5px;text-align:center;font-weight:bold;letter-spacing:-0.3px">14</div>
<div class="t" style="left:40.2px;top:323.93px;font-size:4.2px;line-height:5px;color:#444;transform:rotate(-90deg);width:5px;text-align:center;font-weight:bold;letter-spacing:-0.3px">15</div>
<div class="t" style="left:40.2px;top:334.20px;font-size:4.2px;line-height:5px;color:#444;transform:rotate(-90deg);width:5px;text-align:center;font-weight:bold;letter-spacing:-0.3px">16</div>
<div class="t" style="left:40.2px;top:344.47px;font-size:4.2px;line-height:5px;color:#444;transform:rotate(-90deg);width:5px;text-align:center;font-weight:bold;letter-spacing:-0.3px">17</div>
<div class="t" style="left:40.2px;top:354.74px;font-size:4.2px;line-height:5px;color:#444;transform:rotate(-90deg);width:5px;text-align:center;font-weight:bold;letter-spacing:-0.3px">18</div>
<div class="t" style="left:40.2px;top:365.01px;font-size:4.2px;line-height:5px;color:#444;transform:rotate(-90deg);width:5px;text-align:center;font-weight:bold;letter-spacing:-0.3px">19</div>
<div class="t" style="left:40.2px;top:375.28px;font-size:4.2px;line-height:5px;color:#444;transform:rotate(-90deg);width:5px;text-align:center;font-weight:bold;letter-spacing:-0.3px">20</div>
<div class="t" style="left:40.2px;top:385.55px;font-size:4.2px;line-height:5px;color:#444;transform:rotate(-90deg);width:5px;text-align:center;font-weight:bold;letter-spacing:-0.3px">21</div>
<div class="t" style="left:40.2px;top:395.82px;font-size:4.2px;line-height:5px;color:#444;transform:rotate(-90deg);width:5px;text-align:center;font-weight:bold;letter-spacing:-0.3px">22</div>
<div class="t" style="left:40.2px;top:406.09px;font-size:4.2px;line-height:5px;color:#444;transform:rotate(-90deg);width:5px;text-align:center;font-weight:bold;letter-spacing:-0.3px">23</div>
<div class="t" style="left:40.2px;top:416.36px;font-size:4.2px;line-height:5px;color:#444;transform:rotate(-90deg);width:5px;text-align:center;font-weight:bold;letter-spacing:-0.3px">24</div>
<div class="t" style="left:40.2px;top:426.63px;font-size:4.2px;line-height:5px;color:#444;transform:rotate(-90deg);width:5px;text-align:center;font-weight:bold;letter-spacing:-0.3px">25</div>
<div class="t" style="left:40.2px;top:436.90px;font-size:4.2px;line-height:5px;color:#444;transform:rotate(-90deg);width:5px;text-align:center;font-weight:bold;letter-spacing:-0.3px">26</div>
<div class="t" style="left:40.2px;top:447.17px;font-size:4.2px;line-height:5px;color:#444;transform:rotate(-90deg);width:5px;text-align:center;font-weight:bold;letter-spacing:-0.3px">27</div>
<div class="t" style="left:40.2px;top:457.44px;font-size:4.2px;line-height:5px;color:#444;transform:rotate(-90deg);width:5px;text-align:center;font-weight:bold;letter-spacing:-0.3px">28</div>
<div class="t" style="left:40.2px;top:467.71px;font-size:4.2px;line-height:5px;color:#444;transform:rotate(-90deg);width:5px;text-align:center;font-weight:bold;letter-spacing:-0.3px">29</div>
<div class="t" style="left:40.2px;top:477.98px;font-size:4.2px;line-height:5px;color:#444;transform:rotate(-90deg);width:5px;text-align:center;font-weight:bold;letter-spacing:-0.3px">30</div>
<div class="t" style="left:40.2px;top:488.25px;font-size:4.2px;line-height:5px;color:#444;transform:rotate(-90deg);width:5px;text-align:center;font-weight:bold;letter-spacing:-0.3px">31</div>
<div class="t" style="left:40.2px;top:498.52px;font-size:4.2px;line-height:5px;color:#444;transform:rotate(-90deg);width:5px;text-align:center;font-weight:bold;letter-spacing:-0.3px">32</div>
<div class="t" style="left:40.2px;top:508.79px;font-size:4.2px;line-height:5px;color:#444;transform:rotate(-90deg);width:5px;text-align:center;font-weight:bold;letter-spacing:-0.3px">33</div>
<div class="t" style="left:40.2px;top:519.06px;font-size:4.2px;line-height:5px;color:#444;transform:rotate(-90deg);width:5px;text-align:center;font-weight:bold;letter-spacing:-0.3px">34</div>
<div style="left:491.4px;top:125.8px;width:9.6px;height:398px;background:linear-gradient(90deg,#d3d3d3 0%,#d9d9d9 40%,#e3e3e3 62%,#e4e4e4 100%);"></div>
<div style="left:890px;top:134px;width:4px;height:390px;background:linear-gradient(90deg,#d4d4d4 0%,#dadada 50%,#e4e4e4 100%);"></div>
<div style="left:101.6px;top:125.8px;width:390px;height:398px;background:#fff;"></div>
<div style="left:501px;top:125.8px;width:389px;height:398px;background:#fff;"></div>
<div style="left:873px;top:122.6px;width:20.6px;height:12px;background:#fff;border-radius:2px;filter:blur(0.7px)"></div>
<div style="left:873px;top:121.8px;width:7px;height:3px;background:#fff;filter:blur(0.7px)"></div>
<div style="left:160.6px;top:161.7px;width:0.6px;height:10.6px;background:#dcdcdc;"></div>
<div style="left:149.9px;top:172px;width:11px;height:0.6px;background:#dcdcdc;"></div>
<div style="left:432.09999999999997px;top:161.7px;width:0.6px;height:10.6px;background:#dcdcdc;"></div>
<div style="left:432.4px;top:172px;width:11.5px;height:0.6px;background:#dcdcdc;"></div>
<div style="left:559.4000000000001px;top:161.7px;width:0.6px;height:10.6px;background:#dcdcdc;"></div>
<div style="left:548.7px;top:172px;width:11px;height:0.6px;background:#dcdcdc;"></div>
<div style="left:831.3000000000001px;top:161.7px;width:0.6px;height:10.6px;background:#dcdcdc;"></div>
<div style="left:831.6px;top:172px;width:11.5px;height:0.6px;background:#dcdcdc;"></div>
<svg style="left:141.60px;top:180.35px;" width="3.4" height="6.1" viewBox="0 0 3.4 6.1"><rect x="0" y="0" width="1.1" height="1.1" fill="#8a8a8a"/><rect x="0" y="2.5" width="1.1" height="1.1" fill="#8a8a8a"/><rect x="0" y="5" width="1.1" height="1.1" fill="#8a8a8a"/><rect x="2.3" y="0" width="1.1" height="1.1" fill="#8a8a8a"/><rect x="2.3" y="2.5" width="1.1" height="1.1" fill="#8a8a8a"/><rect x="2.3" y="5" width="1.1" height="1.1" fill="#8a8a8a"/></svg>
<div class="t" style="left:160.9px;top:178.66px;font-size:8.8px;line-height:10px;color:#1c1c1c;">案例:<span style="font-size:1.08em;font-weight:bold;">2025</span> 年 <span style="font-size:1.08em;font-weight:bold;">5</span> 月 <span style="font-size:1.08em;font-weight:bold;">16</span> 日(星期五)的天汽模。</div>
<div class="t" style="left:160.9px;top:220.29px;font-size:7.8px;line-height:9px;color:#1e2028;letter-spacing:-0.049px;"><span style="font-size:1.1em;">1</span>、分时界面上能看到早上 <span style="font-size:1.1em;">10:06</span>：<span style="font-size:1.1em;">12</span>，封单有 <span style="font-size:1.1em;">4.2</span> 亿，委买队列画圈地方看到</div>
<div class="t" style="left:160.9px;top:240.69px;font-size:7.8px;line-height:9px;color:#1e2028;"><span style="font-size:1.1em;">2</span> 万手单</div>
<div class="t" style="left:160.9px;top:424.29px;font-size:7.8px;line-height:9px;color:#1e2028;letter-spacing:-0.037px;"><span style="font-size:1.1em;">2</span>、大单棱镜可以看到，<span style="font-size:1.1em;">10:07:12</span> 有个 <span style="font-size:1.1em;">1</span> 万手被买，这表示，截至 <span style="font-size:1.1em;">10</span> 点 <span style="font-size:1.1em;">07</span> 分</div>
<div class="t" style="left:160.9px;top:444.69px;font-size:7.8px;line-height:9px;color:#1e2028;letter-spacing:0.004px;"><span style="font-size:1.1em;">12</span> 秒有个 <span style="font-size:1.1em;">1</span> 万手的大买单全部成交了，是被买，意味着被多个比它小的卖单给</div>
<div class="t" style="left:160.9px;top:464.59px;font-size:7.8px;line-height:9px;color:#1e2028;">砸了。</div>
<div class="t" style="left:160.9px;top:485.49px;font-size:7.8px;line-height:9px;color:#1e2028;letter-spacing:-0.146px;">值得注意的是，这个 <span style="font-size:1.1em;">1</span> 万手的大买单在 <span style="font-size:1.1em;">10</span> 点 <span style="font-size:1.1em;">06</span> 分 <span style="font-size:1.1em;">34</span> 秒时，就已经开始被买，</div>
<div class="t" style="left:160.9px;top:505.89px;font-size:7.8px;line-height:9px;color:#1e2028;letter-spacing:0.036px;">从开始到被买光，持续了&nbsp; <span style="font-size:1.1em;">38</span> &nbsp;秒钟，盘口上是每 <span style="font-size:1.1em;">3</span> 秒跳动一笔，这实际上是分</div>
<div class="t" style="left:559.7px;top:505.59px;font-size:7.8px;line-height:9px;color:#1e2028;"><span style="font-size:1.1em;">3</span>、看盘口这个万手单是怎么被吃掉的</div>
<svg style="left:449.40px;top:383.50px;" width="3.2" height="7" viewBox="0 0 3.2 7"><path d="M0.3 0.3 H2.9 M0.3 6.7 H2.9 M1.6 0.3 V6.7" stroke="#444" stroke-width="0.6"/></svg>
<svg style="left:160.6px;top:257.2px" width="271.4" height="136.8" viewBox="0 0 271.4 136.8"><rect width="271.4" height="136.8" fill="#050505"/><rect x="0" y="3" width="11.5" height="89" fill="#2c2626"/><rect x="185" y="3" width="5.6" height="89" fill="#343030"/><rect x="0" y="0.4" width="18" height="1.3" fill="#9a9a9a"/><rect x="19" y="0.4" width="8" height="1.3" fill="#ccc"/><rect x="28.6" y="0.4" width="9" height="1.3" fill="#2a9a3a"/><rect x="38.4" y="0.4" width="6" height="1.3" fill="#b8a030"/><rect x="45.6" y="0.4" width="4" height="1.3" fill="#c03a2a"/><rect x="52" y="0.4" width="6" height="1.3" fill="#6a1a1a"/><rect x="185" y="78" width="5.5" height="14" fill="#b84a40"/><path d="M0 10.6 H190" stroke="#3a1010" stroke-width="0.35"/><path d="M0 18 H190" stroke="#3a1010" stroke-width="0.35"/><path d="M0 26 H190" stroke="#3a1010" stroke-width="0.35"/><path d="M0 34 H190" stroke="#3a1010" stroke-width="0.35"/><path d="M0 42 H190" stroke="#3a1010" stroke-width="0.35"/><path d="M0 50 H190" stroke="#3a1010" stroke-width="0.35"/><path d="M0 58 H190" stroke="#3a1010" stroke-width="0.35"/><path d="M0 66 H190" stroke="#3a1010" stroke-width="0.35"/><path d="M0 74 H190" stroke="#3a1010" stroke-width="0.35"/><path d="M0 82 H190" stroke="#3a1010" stroke-width="0.35"/><path d="M21.8 3.5 V92" stroke="#3a1010" stroke-width="0.35"/><path d="M63 3.5 V92" stroke="#3a1010" stroke-width="0.35"/><path d="M83.7 3.5 V92" stroke="#3a1010" stroke-width="0.35"/><path d="M104.5 3.5 V92" stroke="#3a1010" stroke-width="0.35"/><path d="M125 3.5 V92" stroke="#3a1010" stroke-width="0.35"/><path d="M145.7 3.5 V92" stroke="#3a1010" stroke-width="0.35"/><path d="M166.4 3.5 V92" stroke="#3a1010" stroke-width="0.35"/><path d="M0 37.6 H190" stroke="#7a6a74" stroke-width="0.5"/><path d="M0 92.4 H196" stroke="#7a1a1a" stroke-width="0.5"/><path d="M39.6 3 V93" stroke="#5a5cb4" stroke-width="0.7"/><path d="M65.5 78 V92 M31.6 80 V92" stroke="#888" stroke-width="0.4"/><path d="M1 42 L3 44 L4 46 L5 43 L11 42 L12 34 L14 26 L15 22 L17 24 L19 26 L21 24 L23 27 L26 25 L29 26 L31 24 L32 4 L39 4 L40 3 L41 10 L43 13 L46 12 L48 15 L51 14 L54 15 L57 13 L59 14 L60 5 L61 4 L63 8 L65 9 L66 5 L66.5 4" fill="none" stroke="#e0e0e0" stroke-width="0.55"/><path d="M66.5 4 H190" stroke="#8a8a8a" stroke-width="0.5" opacity=".7"/><path d="M70 4 H190" stroke="#e0e0e0" stroke-width="0.7" stroke-dasharray="0.8 5.1" opacity=".8"/><path d="M1 42 L11 41 L14 28 L18 25 L28 24.6 L32 20 L36 16 L40 13.4 L50 13.6 L60 13 L66 11.6" fill="none" stroke="#c89a20" stroke-width="0.55"/><path d="M66 11.6 L102 11.4" stroke="#8a6018" stroke-width="0.55"/><path d="M102 11.4 H190" stroke="#c0621a" stroke-width="0.6"/><rect x="40.5" y="37.8" width="9" height="3" fill="#6a6a7a"/><path d="M1 92 V90 M3 92 V89 M6 92 V90.6 M12 92 V88 M14 92 V89.6 M17 92 V90 M22 92 V90.6 M28 92 V90.4 M33 92 V87 M36 92 V90 M44 92 V90.6 M52 92 V91 M60 92 V89" stroke="#c03020" stroke-width="0.5"/><path d="M2 92 V90.4 M9 92 V90 M19 92 V90.8 M30 92 V90.4 M41 92 V88 M47 92 V91" stroke="#20a040" stroke-width="0.5"/><rect x="40" y="93.4" width="12" height="2" fill="#b040c0"/><rect x="1" y="93.6" width="8" height="1.4" fill="#a02020"/><rect x="12" y="93.6" width="6" height="1.4" fill="#a02020"/><rect x="58" y="93.6" width="6" height="1.4" fill="#a02020"/><rect x="166" y="93.6" width="6" height="1.4" fill="#a02020"/><rect x="186" y="93.6" width="6" height="1.4" fill="#a02020"/><rect x="191.4" y="5.0" width="5" height="1.2" fill="#8a1c1c"/><rect x="191.4" y="8.2" width="5" height="1.2" fill="#8a1c1c"/><rect x="191.4" y="11.4" width="5" height="1.2" fill="#8a1c1c"/><rect x="191.4" y="14.600000000000001" width="5" height="1.2" fill="#8a1c1c"/><rect x="191.4" y="17.8" width="5" height="1.2" fill="#8a1c1c"/><rect x="191.4" y="21.0" width="5" height="1.2" fill="#8a1c1c"/><rect x="191.4" y="24.200000000000003" width="5" height="1.2" fill="#8a1c1c"/><rect x="191.4" y="27.400000000000002" width="5" height="1.2" fill="#8a1c1c"/><rect x="191.4" y="30.6" width="5" height="1.2" fill="#8a1c1c"/><rect x="191.4" y="33.8" width="5" height="1.2" fill="#8a1c1c"/><rect x="191" y="36.6" width="5.4" height="2.2" fill="#b040c0"/><rect x="191.4" y="41.0" width="5" height="1.2" fill="#9a9a9a"/><rect x="191.4" y="44.2" width="5" height="1.2" fill="#1c8a38"/><rect x="191.4" y="47.4" width="5" height="1.2" fill="#1c8a38"/><rect x="191.4" y="50.6" width="5" height="1.2" fill="#1c8a38"/><rect x="191.4" y="53.8" width="5" height="1.2" fill="#1c8a38"/><rect x="191.4" y="57.0" width="5" height="1.2" fill="#1c8a38"/><rect x="191.4" y="60.2" width="5" height="1.2" fill="#1c8a38"/><rect x="191.4" y="63.400000000000006" width="5" height="1.2" fill="#1c8a38"/><rect x="191.4" y="66.6" width="5" height="1.2" fill="#1c8a38"/><rect x="191.4" y="69.8" width="5" height="1.2" fill="#1c8a38"/><rect x="191.4" y="73.0" width="5" height="1.2" fill="#1c8a38"/><rect x="191.4" y="76.2" width="5" height="1.2" fill="#1c8a38"/><rect x="201.6" y="0.5" width="27.6" height="2.2" fill="#165a8a"/><rect x="199" y="5" width="13" height="1.5" fill="#cfcfcf"/><rect x="221" y="4.4" width="12" height="3" fill="#3a1010" stroke="#a03030" stroke-width="0.3"/><rect x="222.4" y="5.2" width="9" height="1.4" fill="#d8b8b0"/><rect x="199" y="7.8" width="4" height="1.3" fill="#7a7a7a"/><rect x="207" y="7.8" width="3" height="1.3" fill="#7a7a7a"/><rect x="213.6" y="7.8" width="3" height="1.3" fill="#7a7a7a"/><rect x="221" y="7.8" width="3" height="1.3" fill="#7a7a7a"/><rect x="229" y="7.8" width="3" height="1.3" fill="#7a7a7a"/><rect x="197.8" y="10.4" width="15" height="58.4" fill="#1f4f70"/><rect x="212.7" y="10.4" width="5.6" height="58.4" fill="#15603a"/><rect x="218.2" y="10.4" width="8.4" height="58.4" fill="#f5300c"/><rect x="226.5" y="10.4" width="4.6" height="58.4" fill="#1f4f70"/><rect x="231" y="10.4" width="3.8" height="58.4" fill="#15703a"/><path d="M199 11.8 H203" stroke="#d8d8a0" stroke-width="0.7" opacity=".8"/><path d="M208 11.8 H209" stroke="#7aa0b8" stroke-width="0.6"/><path d="M210.4 11.8 H211.8" stroke="#c03a3a" stroke-width="0.8"/><path d="M213.4 11.8 H217.4" stroke="#2ab04a" stroke-width="0.8" opacity=".8"/><path d="M231.4 11.8 H234.2" stroke="#30c050" stroke-width="0.8" opacity=".85"/><path d="M202 15.0 H203" stroke="#d8d8a0" stroke-width="0.7" opacity=".8"/><path d="M208 15.0 H209" stroke="#7aa0b8" stroke-width="0.6"/><path d="M210.4 15.0 H211.8" stroke="#c03a3a" stroke-width="0.8"/><path d="M213.4 15.0 H217.4" stroke="#2ab04a" stroke-width="0.8" opacity=".8"/><path d="M231.4 15.0 H234.2" stroke="#30c050" stroke-width="0.8" opacity=".85"/><path d="M202 18.200000000000003 H203" stroke="#d8d8a0" stroke-width="0.7" opacity=".8"/><path d="M208 18.200000000000003 H209" stroke="#7aa0b8" stroke-width="0.6"/><path d="M210.4 18.200000000000003 H211.8" stroke="#c03a3a" stroke-width="0.8"/><path d="M213.4 18.200000000000003 H217.4" stroke="#2ab04a" stroke-width="0.8" opacity=".8"/><path d="M231.4 18.200000000000003 H234.2" stroke="#30c050" stroke-width="0.8" opacity=".85"/><path d="M202 21.400000000000002 H203" stroke="#d8d8a0" stroke-width="0.7" opacity=".8"/><path d="M208 21.400000000000002 H209" stroke="#7aa0b8" stroke-width="0.6"/><path d="M210.4 21.400000000000002 H211.8" stroke="#c03a3a" stroke-width="0.8"/><path d="M213.4 21.400000000000002 H217.4" stroke="#2ab04a" stroke-width="0.8" opacity=".8"/><path d="M231.4 21.400000000000002 H234.2" stroke="#30c050" stroke-width="0.8" opacity=".85"/><path d="M199 24.6 H203" stroke="#d8d8a0" stroke-width="0.7" opacity=".8"/><path d="M208 24.6 H209" stroke="#7aa0b8" stroke-width="0.6"/><path d="M210.4 24.6 H211.8" stroke="#c03a3a" stroke-width="0.8"/><path d="M213.4 24.6 H217.4" stroke="#2ab04a" stroke-width="0.8" opacity=".8"/><path d="M231.4 24.6 H234.2" stroke="#30c050" stroke-width="0.8" opacity=".85"/><path d="M202 27.8 H203" stroke="#d8d8a0" stroke-width="0.7" opacity=".8"/><path d="M208 27.8 H209" stroke="#7aa0b8" stroke-width="0.6"/><path d="M210.4 27.8 H211.8" stroke="#c03a3a" stroke-width="0.8"/><path d="M213.4 27.8 H217.4" stroke="#2ab04a" stroke-width="0.8" opacity=".8"/><path d="M231.4 27.8 H234.2" stroke="#30c050" stroke-width="0.8" opacity=".85"/><path d="M202 31.000000000000004 H203" stroke="#d8d8a0" stroke-width="0.7" opacity=".8"/><path d="M208 31.000000000000004 H209" stroke="#7aa0b8" stroke-width="0.6"/><path d="M210.4 31.000000000000004 H211.8" stroke="#c03a3a" stroke-width="0.8"/><path d="M213.4 31.000000000000004 H217.4" stroke="#2ab04a" stroke-width="0.8" opacity=".8"/><path d="M231.4 31.000000000000004 H234.2" stroke="#30c050" stroke-width="0.8" opacity=".85"/><path d="M202 34.2 H203" stroke="#d8d8a0" stroke-width="0.7" opacity=".8"/><path d="M208 34.2 H209" stroke="#7aa0b8" stroke-width="0.6"/><path d="M210.4 34.2 H211.8" stroke="#c03a3a" stroke-width="0.8"/><path d="M213.4 34.2 H217.4" stroke="#2ab04a" stroke-width="0.8" opacity=".8"/><path d="M231.4 34.2 H234.2" stroke="#30c050" stroke-width="0.8" opacity=".85"/><path d="M199 37.400000000000006 H203" stroke="#d8d8a0" stroke-width="0.7" opacity=".8"/><path d="M208 37.400000000000006 H209" stroke="#7aa0b8" stroke-width="0.6"/><path d="M210.4 37.400000000000006 H211.8" stroke="#c03a3a" stroke-width="0.8"/><path d="M213.4 37.400000000000006 H217.4" stroke="#2ab04a" stroke-width="0.8" opacity=".8"/><path d="M231.4 37.400000000000006 H234.2" stroke="#30c050" stroke-width="0.8" opacity=".85"/><path d="M202 40.6 H203" stroke="#d8d8a0" stroke-width="0.7" opacity=".8"/><path d="M208 40.6 H209" stroke="#7aa0b8" stroke-width="0.6"/><path d="M210.4 40.6 H211.8" stroke="#c03a3a" stroke-width="0.8"/><path d="M213.4 40.6 H217.4" stroke="#2ab04a" stroke-width="0.8" opacity=".8"/><path d="M231.4 40.6 H234.2" stroke="#30c050" stroke-width="0.8" opacity=".85"/><path d="M202 43.8 H203" stroke="#d8d8a0" stroke-width="0.7" opacity=".8"/><path d="M208 43.8 H209" stroke="#7aa0b8" stroke-width="0.6"/><path d="M210.4 43.8 H211.8" stroke="#c03a3a" stroke-width="0.8"/><path d="M213.4 43.8 H217.4" stroke="#2ab04a" stroke-width="0.8" opacity=".8"/><path d="M231.4 43.8 H234.2" stroke="#30c050" stroke-width="0.8" opacity=".85"/><path d="M202 47.0 H203" stroke="#d8d8a0" stroke-width="0.7" opacity=".8"/><path d="M208 47.0 H209" stroke="#7aa0b8" stroke-width="0.6"/><path d="M210.4 47.0 H211.8" stroke="#c03a3a" stroke-width="0.8"/><path d="M213.4 47.0 H217.4" stroke="#2ab04a" stroke-width="0.8" opacity=".8"/><path d="M231.4 47.0 H234.2" stroke="#30c050" stroke-width="0.8" opacity=".85"/><path d="M199 50.2 H203" stroke="#d8d8a0" stroke-width="0.7" opacity=".8"/><path d="M208 50.2 H209" stroke="#7aa0b8" stroke-width="0.6"/><path d="M210.4 50.2 H211.8" stroke="#c03a3a" stroke-width="0.8"/><path d="M213.4 50.2 H217.4" stroke="#2ab04a" stroke-width="0.8" opacity=".8"/><path d="M231.4 50.2 H234.2" stroke="#30c050" stroke-width="0.8" opacity=".85"/><path d="M202 53.400000000000006 H203" stroke="#d8d8a0" stroke-width="0.7" opacity=".8"/><path d="M208 53.400000000000006 H209" stroke="#7aa0b8" stroke-width="0.6"/><path d="M210.4 53.400000000000006 H211.8" stroke="#c03a3a" stroke-width="0.8"/><path d="M213.4 53.400000000000006 H217.4" stroke="#2ab04a" stroke-width="0.8" opacity=".8"/><path d="M231.4 53.400000000000006 H234.2" stroke="#30c050" stroke-width="0.8" opacity=".85"/><path d="M202 56.60000000000001 H203" stroke="#d8d8a0" stroke-width="0.7" opacity=".8"/><path d="M208 56.60000000000001 H209" stroke="#7aa0b8" stroke-width="0.6"/><path d="M210.4 56.60000000000001 H211.8" stroke="#c03a3a" stroke-width="0.8"/><path d="M213.4 56.60000000000001 H217.4" stroke="#2ab04a" stroke-width="0.8" opacity=".8"/><path d="M231.4 56.60000000000001 H234.2" stroke="#30c050" stroke-width="0.8" opacity=".85"/><path d="M202 59.8 H203" stroke="#d8d8a0" stroke-width="0.7" opacity=".8"/><path d="M208 59.8 H209" stroke="#7aa0b8" stroke-width="0.6"/><path d="M210.4 59.8 H211.8" stroke="#c03a3a" stroke-width="0.8"/><path d="M213.4 59.8 H217.4" stroke="#2ab04a" stroke-width="0.8" opacity=".8"/><path d="M231.4 59.8 H234.2" stroke="#30c050" stroke-width="0.8" opacity=".85"/><path d="M199 63.0 H203" stroke="#d8d8a0" stroke-width="0.7" opacity=".8"/><path d="M208 63.0 H209" stroke="#7aa0b8" stroke-width="0.6"/><path d="M210.4 63.0 H211.8" stroke="#c03a3a" stroke-width="0.8"/><path d="M213.4 63.0 H217.4" stroke="#2ab04a" stroke-width="0.8" opacity=".8"/><path d="M231.4 63.0 H234.2" stroke="#30c050" stroke-width="0.8" opacity=".85"/><path d="M202 66.2 H203" stroke="#d8d8a0" stroke-width="0.7" opacity=".8"/><path d="M208 66.2 H209" stroke="#7aa0b8" stroke-width="0.6"/><path d="M210.4 66.2 H211.8" stroke="#c03a3a" stroke-width="0.8"/><path d="M213.4 66.2 H217.4" stroke="#2ab04a" stroke-width="0.8" opacity=".8"/><path d="M231.4 66.2 H234.2" stroke="#30c050" stroke-width="0.8" opacity=".85"/><rect x="219.6" y="37.6" width="5.6" height="1.2" fill="#f8a080" opacity=".8"/><rect x="219.6" y="40.4" width="5.6" height="1.2" fill="#f8a080" opacity=".8"/><path d="M199 71.0 H204" stroke="#c8c8c8" stroke-width="0.7"/><path d="M212.4 71.0 H216" stroke="#c83030" stroke-width="0.7"/><path d="M222 71.0 H227" stroke="#30b050" stroke-width="0.7"/><path d="M232 71.0 H234" stroke="#c8c8c8" stroke-width="0.6"/><path d="M199 74.15 H204" stroke="#c8c8c8" stroke-width="0.7"/><path d="M212.4 74.15 H216" stroke="#c83030" stroke-width="0.7"/><path d="M222 74.15 H227" stroke="#30b050" stroke-width="0.7"/><path d="M232 74.15 H234" stroke="#c8c8c8" stroke-width="0.6"/><path d="M199 77.3 H204" stroke="#c8c8c8" stroke-width="0.7"/><path d="M212.4 77.3 H216" stroke="#c83030" stroke-width="0.7"/><path d="M222 77.3 H227" stroke="#30b050" stroke-width="0.7"/><path d="M232 77.3 H234" stroke="#c8c8c8" stroke-width="0.6"/><path d="M199 80.45 H204" stroke="#c8c8c8" stroke-width="0.7"/><path d="M212.4 80.45 H216" stroke="#c83030" stroke-width="0.7"/><path d="M222 80.45 H227" stroke="#30b050" stroke-width="0.7"/><path d="M232 80.45 H234" stroke="#c8c8c8" stroke-width="0.6"/><path d="M199 83.6 H204" stroke="#c8c8c8" stroke-width="0.7"/><path d="M212.4 83.6 H216" stroke="#c83030" stroke-width="0.7"/><path d="M222 83.6 H227" stroke="#30b050" stroke-width="0.7"/><path d="M232 83.6 H234" stroke="#c8c8c8" stroke-width="0.6"/><path d="M199 86.75 H204" stroke="#c8c8c8" stroke-width="0.7"/><path d="M212.4 86.75 H216" stroke="#c83030" stroke-width="0.7"/><path d="M222 86.75 H227" stroke="#30b050" stroke-width="0.7"/><path d="M232 86.75 H234" stroke="#c8c8c8" stroke-width="0.6"/><path d="M199 89.9 H204" stroke="#c8c8c8" stroke-width="0.7"/><path d="M212.4 89.9 H216" stroke="#c83030" stroke-width="0.7"/><path d="M222 89.9 H227" stroke="#30b050" stroke-width="0.7"/><path d="M232 89.9 H234" stroke="#c8c8c8" stroke-width="0.6"/><path d="M199 93.05 H204" stroke="#c8c8c8" stroke-width="0.7"/><path d="M212.4 93.05 H216" stroke="#c83030" stroke-width="0.7"/><path d="M222 93.05 H227" stroke="#30b050" stroke-width="0.7"/><path d="M232 93.05 H234" stroke="#c8c8c8" stroke-width="0.6"/><path d="M199 96.2 H204" stroke="#c8c8c8" stroke-width="0.7"/><path d="M212.4 96.2 H216" stroke="#c83030" stroke-width="0.7"/><path d="M222 96.2 H227" stroke="#30b050" stroke-width="0.7"/><path d="M232 96.2 H234" stroke="#c8c8c8" stroke-width="0.6"/><path d="M199 99.35 H204" stroke="#c8c8c8" stroke-width="0.7"/><path d="M212.4 99.35 H216" stroke="#c83030" stroke-width="0.7"/><path d="M222 99.35 H227" stroke="#30b050" stroke-width="0.7"/><path d="M232 99.35 H234" stroke="#c8c8c8" stroke-width="0.6"/><path d="M199 102.5 H204" stroke="#c8c8c8" stroke-width="0.7"/><path d="M212.4 102.5 H216" stroke="#c83030" stroke-width="0.7"/><path d="M222 102.5 H227" stroke="#30b050" stroke-width="0.7"/><path d="M232 102.5 H234" stroke="#c8c8c8" stroke-width="0.6"/><path d="M199 105.65 H204" stroke="#c8c8c8" stroke-width="0.7"/><path d="M212.4 105.65 H216" stroke="#c83030" stroke-width="0.7"/><path d="M222 105.65 H227" stroke="#30b050" stroke-width="0.7"/><path d="M232 105.65 H234" stroke="#c8c8c8" stroke-width="0.6"/><path d="M199 108.8 H204" stroke="#c8c8c8" stroke-width="0.7"/><path d="M212.4 108.8 H216" stroke="#c83030" stroke-width="0.7"/><path d="M222 108.8 H227" stroke="#30b050" stroke-width="0.7"/><path d="M232 108.8 H234" stroke="#c8c8c8" stroke-width="0.6"/><path d="M199 111.94999999999999 H204" stroke="#c8c8c8" stroke-width="0.7"/><path d="M212.4 111.94999999999999 H216" stroke="#c83030" stroke-width="0.7"/><path d="M222 111.94999999999999 H227" stroke="#30b050" stroke-width="0.7"/><path d="M232 111.94999999999999 H234" stroke="#c8c8c8" stroke-width="0.6"/><path d="M199 115.1 H204" stroke="#c8c8c8" stroke-width="0.7"/><path d="M212.4 115.1 H216" stroke="#c83030" stroke-width="0.7"/><path d="M222 115.1 H227" stroke="#30b050" stroke-width="0.7"/><path d="M232 115.1 H234" stroke="#c8c8c8" stroke-width="0.6"/><path d="M199 118.25 H204" stroke="#c8c8c8" stroke-width="0.7"/><path d="M212.4 118.25 H216" stroke="#c83030" stroke-width="0.7"/><path d="M222 118.25 H227" stroke="#30b050" stroke-width="0.7"/><path d="M232 118.25 H234" stroke="#c8c8c8" stroke-width="0.6"/><path d="M199 121.4 H204" stroke="#c8c8c8" stroke-width="0.7"/><path d="M212.4 121.4 H216" stroke="#c83030" stroke-width="0.7"/><path d="M222 121.4 H227" stroke="#30b050" stroke-width="0.7"/><path d="M232 121.4 H234" stroke="#c8c8c8" stroke-width="0.6"/><path d="M199 124.55 H204" stroke="#c8c8c8" stroke-width="0.7"/><path d="M212.4 124.55 H216" stroke="#c83030" stroke-width="0.7"/><path d="M222 124.55 H227" stroke="#30b050" stroke-width="0.7"/><path d="M232 124.55 H234" stroke="#c8c8c8" stroke-width="0.6"/><path d="M199 127.69999999999999 H204" stroke="#c8c8c8" stroke-width="0.7"/><path d="M212.4 127.69999999999999 H216" stroke="#c83030" stroke-width="0.7"/><path d="M222 127.69999999999999 H227" stroke="#30b050" stroke-width="0.7"/><path d="M232 127.69999999999999 H234" stroke="#c8c8c8" stroke-width="0.6"/><path d="M199 130.85 H204" stroke="#c8c8c8" stroke-width="0.7"/><path d="M212.4 130.85 H216" stroke="#c83030" stroke-width="0.7"/><path d="M222 130.85 H227" stroke="#30b050" stroke-width="0.7"/><path d="M232 130.85 H234" stroke="#c8c8c8" stroke-width="0.6"/><path d="M199 134.0 H204" stroke="#c8c8c8" stroke-width="0.7"/><path d="M212.4 134.0 H216" stroke="#c83030" stroke-width="0.7"/><path d="M222 134.0 H227" stroke="#30b050" stroke-width="0.7"/><path d="M232 134.0 H234" stroke="#c8c8c8" stroke-width="0.6"/><path d="M197.4 0 V137 M237.8 0 V137" stroke="#5a1a1a" stroke-width="0.35"/><path d="M197.4 69.6 H237.8" stroke="#7a2020" stroke-width="0.35"/><rect x="245.2" y="0.6" width="9" height="1.8" fill="#bdbdbd"/><rect x="255.4" y="0.7" width="8" height="1.5" fill="#8a8a8a"/><rect x="235.6" y="5.2" width="4" height="1.4" fill="#777"/><rect x="247" y="5.2" width="6" height="1.4" fill="#a02020"/><rect x="264" y="5.2" width="6" height="1.4" fill="#7a1a1a"/><rect x="235.6" y="9" width="5" height="1.4" fill="#777"/><rect x="250" y="9" width="3" height="1.4" fill="#a02020"/><rect x="254" y="9" width="4" height="1.4" fill="#888"/><path d="M238 5 H271 M238 10 H271" stroke="#5a1a1a" stroke-width="0.3"/><rect x="242.4" y="31.6" width="23" height="8.6" fill="none" stroke="#c03a2a" stroke-width="0.5"/><path d="M244 36 H264" stroke="#b03030" stroke-width="1.4" stroke-dasharray="2.4 0.6"/><path d="M260 43 L266 51 M266 51 L263.6 50.4 M266 51 L265.6 48.4" stroke="#d03a2a" stroke-width="0.5" fill="none"/><path d="M239 13.0 H241" stroke="#aaa" stroke-width="0.5"/><path d="M253 13.0 H254" stroke="#aaa" stroke-width="0.4"/><path d="M239 16.1 H241" stroke="#aaa" stroke-width="0.5"/><path d="M253 16.1 H254" stroke="#aaa" stroke-width="0.4"/><path d="M239 19.2 H241" stroke="#aaa" stroke-width="0.5"/><path d="M253 19.2 H254" stroke="#aaa" stroke-width="0.4"/><path d="M239 22.3 H241" stroke="#aaa" stroke-width="0.5"/><path d="M253 22.3 H254" stroke="#aaa" stroke-width="0.4"/><path d="M239 25.4 H241" stroke="#aaa" stroke-width="0.5"/><path d="M253 25.4 H254" stroke="#aaa" stroke-width="0.4"/><path d="M239 28.5 H241" stroke="#aaa" stroke-width="0.5"/><path d="M253 28.5 H254" stroke="#aaa" stroke-width="0.4"/><path d="M239 31.6 H241" stroke="#aaa" stroke-width="0.5"/><path d="M253 31.6 H254" stroke="#aaa" stroke-width="0.4"/><path d="M239 34.7 H241" stroke="#aaa" stroke-width="0.5"/><path d="M253 34.7 H254" stroke="#aaa" stroke-width="0.4"/><path d="M239 53.4 H241.4" stroke="#b0b0b0" stroke-width="0.6"/><path d="M250 53.4 H254.4" stroke="#30a0c0" stroke-width="0.7"/><path d="M266 53.4 H271" stroke="#2aa8b8" stroke-width="0.7"/><path d="M239 56.55 H241.4" stroke="#b0b0b0" stroke-width="0.6"/><path d="M250 56.55 H254.4" stroke="#c03030" stroke-width="0.7"/><path d="M266 56.55 H271" stroke="#2aa8b8" stroke-width="0.7"/><path d="M239 59.699999999999996 H241.4" stroke="#b0b0b0" stroke-width="0.6"/><path d="M250 59.699999999999996 H254.4" stroke="#c03030" stroke-width="0.7"/><path d="M266 59.699999999999996 H271" stroke="#2aa8b8" stroke-width="0.7"/><path d="M239 62.849999999999994 H241.4" stroke="#b0b0b0" stroke-width="0.6"/><path d="M250 62.849999999999994 H254.4" stroke="#30a0c0" stroke-width="0.7"/><path d="M266 62.849999999999994 H271" stroke="#2aa8b8" stroke-width="0.7"/><path d="M239 66.0 H241.4" stroke="#b0b0b0" stroke-width="0.6"/><path d="M250 66.0 H254.4" stroke="#c03030" stroke-width="0.7"/><path d="M266 66.0 H271" stroke="#2aa8b8" stroke-width="0.7"/><path d="M239 69.15 H241.4" stroke="#b0b0b0" stroke-width="0.6"/><path d="M250 69.15 H254.4" stroke="#c03030" stroke-width="0.7"/><path d="M266 69.15 H271" stroke="#2aa8b8" stroke-width="0.7"/><path d="M239 72.3 H241.4" stroke="#b0b0b0" stroke-width="0.6"/><path d="M250 72.3 H254.4" stroke="#30a0c0" stroke-width="0.7"/><path d="M266 72.3 H271" stroke="#2aa8b8" stroke-width="0.7"/><path d="M239 75.45 H241.4" stroke="#b0b0b0" stroke-width="0.6"/><path d="M250 75.45 H254.4" stroke="#c03030" stroke-width="0.7"/><path d="M266 75.45 H271" stroke="#2aa8b8" stroke-width="0.7"/><path d="M239 78.6 H241.4" stroke="#b0b0b0" stroke-width="0.6"/><path d="M250 78.6 H254.4" stroke="#c03030" stroke-width="0.7"/><path d="M266 78.6 H271" stroke="#2aa8b8" stroke-width="0.7"/><path d="M239 81.75 H241.4" stroke="#b0b0b0" stroke-width="0.6"/><path d="M250 81.75 H254.4" stroke="#30a0c0" stroke-width="0.7"/><path d="M266 81.75 H271" stroke="#2aa8b8" stroke-width="0.7"/><path d="M239 84.9 H241.4" stroke="#b0b0b0" stroke-width="0.6"/><path d="M250 84.9 H254.4" stroke="#c03030" stroke-width="0.7"/><path d="M266 84.9 H271" stroke="#2aa8b8" stroke-width="0.7"/><path d="M239 88.05 H241.4" stroke="#b0b0b0" stroke-width="0.6"/><path d="M250 88.05 H254.4" stroke="#c03030" stroke-width="0.7"/><path d="M266 88.05 H271" stroke="#2aa8b8" stroke-width="0.7"/><path d="M239 91.19999999999999 H241.4" stroke="#b0b0b0" stroke-width="0.6"/><path d="M250 91.19999999999999 H254.4" stroke="#30a0c0" stroke-width="0.7"/><path d="M266 91.19999999999999 H271" stroke="#2aa8b8" stroke-width="0.7"/><path d="M239 94.35 H241.4" stroke="#b0b0b0" stroke-width="0.6"/><path d="M250 94.35 H254.4" stroke="#c03030" stroke-width="0.7"/><path d="M266 94.35 H271" stroke="#2aa8b8" stroke-width="0.7"/><path d="M239 97.5 H241.4" stroke="#b0b0b0" stroke-width="0.6"/><path d="M250 97.5 H254.4" stroke="#c03030" stroke-width="0.7"/><path d="M266 97.5 H271" stroke="#2aa8b8" stroke-width="0.7"/><path d="M239 100.65 H241.4" stroke="#b0b0b0" stroke-width="0.6"/><path d="M250 100.65 H254.4" stroke="#30a0c0" stroke-width="0.7"/><path d="M266 100.65 H271" stroke="#2aa8b8" stroke-width="0.7"/><path d="M239 103.8 H241.4" stroke="#b0b0b0" stroke-width="0.6"/><path d="M250 103.8 H254.4" stroke="#c03030" stroke-width="0.7"/><path d="M266 103.8 H271" stroke="#2aa8b8" stroke-width="0.7"/><path d="M239 106.94999999999999 H241.4" stroke="#b0b0b0" stroke-width="0.6"/><path d="M250 106.94999999999999 H254.4" stroke="#c03030" stroke-width="0.7"/><path d="M266 106.94999999999999 H271" stroke="#2aa8b8" stroke-width="0.7"/><path d="M239 110.1 H241.4" stroke="#b0b0b0" stroke-width="0.6"/><path d="M250 110.1 H254.4" stroke="#30a0c0" stroke-width="0.7"/><path d="M266 110.1 H271" stroke="#2aa8b8" stroke-width="0.7"/><path d="M239 113.25 H241.4" stroke="#b0b0b0" stroke-width="0.6"/><path d="M250 113.25 H254.4" stroke="#c03030" stroke-width="0.7"/><path d="M266 113.25 H271" stroke="#2aa8b8" stroke-width="0.7"/><path d="M239 116.4 H241.4" stroke="#b0b0b0" stroke-width="0.6"/><path d="M250 116.4 H254.4" stroke="#c03030" stroke-width="0.7"/><path d="M266 116.4 H271" stroke="#2aa8b8" stroke-width="0.7"/><path d="M239 119.54999999999998 H241.4" stroke="#b0b0b0" stroke-width="0.6"/><path d="M250 119.54999999999998 H254.4" stroke="#30a0c0" stroke-width="0.7"/><path d="M266 119.54999999999998 H271" stroke="#2aa8b8" stroke-width="0.7"/><path d="M239 122.69999999999999 H241.4" stroke="#b0b0b0" stroke-width="0.6"/><path d="M250 122.69999999999999 H254.4" stroke="#c03030" stroke-width="0.7"/><path d="M266 122.69999999999999 H271" stroke="#2aa8b8" stroke-width="0.7"/><path d="M239 125.85 H241.4" stroke="#b0b0b0" stroke-width="0.6"/><path d="M250 125.85 H254.4" stroke="#c03030" stroke-width="0.7"/><path d="M266 125.85 H271" stroke="#2aa8b8" stroke-width="0.7"/><path d="M239 129.0 H241.4" stroke="#b0b0b0" stroke-width="0.6"/><path d="M250 129.0 H254.4" stroke="#30a0c0" stroke-width="0.7"/><path d="M266 129.0 H271" stroke="#2aa8b8" stroke-width="0.7"/><path d="M239 132.15 H241.4" stroke="#b0b0b0" stroke-width="0.6"/><path d="M250 132.15 H254.4" stroke="#c03030" stroke-width="0.7"/><path d="M266 132.15 H271" stroke="#2aa8b8" stroke-width="0.7"/><rect x="238.4" y="94" width="33" height="2.4" fill="#1e1e1e"/><path d="M0 97 H197" stroke="#4a1212" stroke-width="0.35"/><rect x="94" y="97.4" width="103" height="39" fill="#0a0606" stroke="#5a1616" stroke-width="0.35"/><rect x="96" y="95.4" width="9" height="1.6" fill="#bbb"/><rect x="108" y="95.2" width="9" height="2" fill="#222" stroke="#c8c8c8" stroke-width="0.3"/><rect x="119" y="95.6" width="18" height="1.4" fill="#c8a020"/><rect x="96" y="99" width="3" height="1.4" fill="#bbb"/><rect x="102" y="99" width="4" height="1.4" fill="#c03030"/><rect x="112" y="99" width="10" height="1.4" fill="#d8d070"/><rect x="124" y="99" width="8" height="1.4" fill="#bbb"/><rect x="134" y="99" width="10" height="1.4" fill="#c8a020"/><rect x="98.0" y="103.4" width="2.4" height="1.2" fill="#c03a3a" opacity=".8"/><rect x="104.1" y="103.4" width="2.4" height="1.2" fill="#a8a8a8" opacity=".8"/><rect x="110.2" y="103.4" width="2.4" height="1.2" fill="#a8a8a8" opacity=".8"/><rect x="116.3" y="103.4" width="2.4" height="1.2" fill="#c03a3a" opacity=".8"/><rect x="122.4" y="103.4" width="2.4" height="1.2" fill="#a8a8a8" opacity=".8"/><rect x="128.5" y="103.4" width="2.4" height="1.2" fill="#a8a8a8" opacity=".8"/><rect x="134.6" y="103.4" width="2.4" height="1.2" fill="#c03a3a" opacity=".8"/><rect x="140.7" y="103.4" width="2.4" height="1.2" fill="#a8a8a8" opacity=".8"/><rect x="146.8" y="103.4" width="2.4" height="1.2" fill="#a8a8a8" opacity=".8"/><rect x="152.9" y="103.4" width="2.4" height="1.2" fill="#c03a3a" opacity=".8"/><rect x="159.0" y="103.4" width="2.4" height="1.2" fill="#a8a8a8" opacity=".8"/><rect x="165.1" y="103.4" width="2.4" height="1.2" fill="#a8a8a8" opacity=".8"/><rect x="171.2" y="103.4" width="2.4" height="1.2" fill="#c03a3a" opacity=".8"/><rect x="177.3" y="103.4" width="2.4" height="1.2" fill="#a8a8a8" opacity=".8"/><rect x="183.39999999999998" y="103.4" width="2.4" height="1.2" fill="#a8a8a8" opacity=".8"/><rect x="189.5" y="103.4" width="2.4" height="1.2" fill="#c03a3a" opacity=".8"/><rect x="98.0" y="108" width="2.4" height="1.2" fill="#a8a8a8" opacity=".8"/><rect x="104.1" y="108" width="2.4" height="1.2" fill="#a8a8a8" opacity=".8"/><rect x="110.2" y="108" width="2.4" height="1.2" fill="#c03a3a" opacity=".8"/><rect x="116.3" y="108" width="2.4" height="1.2" fill="#a8a8a8" opacity=".8"/><rect x="122.4" y="108" width="2.4" height="1.2" fill="#a8a8a8" opacity=".8"/><rect x="128.5" y="108" width="2.4" height="1.2" fill="#c03a3a" opacity=".8"/><rect x="134.6" y="108" width="2.4" height="1.2" fill="#a8a8a8" opacity=".8"/><rect x="140.7" y="108" width="2.4" height="1.2" fill="#a8a8a8" opacity=".8"/><rect x="146.8" y="108" width="2.4" height="1.2" fill="#c03a3a" opacity=".8"/><rect x="152.9" y="108" width="2.4" height="1.2" fill="#a8a8a8" opacity=".8"/><rect x="159.0" y="108" width="2.4" height="1.2" fill="#a8a8a8" opacity=".8"/><rect x="165.1" y="108" width="2.4" height="1.2" fill="#c03a3a" opacity=".8"/><rect x="171.2" y="108" width="2.4" height="1.2" fill="#a8a8a8" opacity=".8"/><rect x="177.3" y="108" width="2.4" height="1.2" fill="#a8a8a8" opacity=".8"/><rect x="183.39999999999998" y="108" width="2.4" height="1.2" fill="#c03a3a" opacity=".8"/><rect x="189.5" y="108" width="2.4" height="1.2" fill="#a8a8a8" opacity=".8"/><rect x="98.0" y="112.4" width="2.4" height="1.2" fill="#a8a8a8" opacity=".8"/><rect x="104.1" y="112.4" width="2.4" height="1.2" fill="#c03a3a" opacity=".8"/><rect x="110.2" y="112.4" width="2.4" height="1.2" fill="#a8a8a8" opacity=".8"/><rect x="116.3" y="112.4" width="2.4" height="1.2" fill="#a8a8a8" opacity=".8"/><rect x="122.4" y="112.4" width="2.4" height="1.2" fill="#c03a3a" opacity=".8"/><rect x="128.5" y="112.4" width="2.4" height="1.2" fill="#a8a8a8" opacity=".8"/><rect x="134.6" y="112.4" width="2.4" height="1.2" fill="#a8a8a8" opacity=".8"/><rect x="140.7" y="112.4" width="2.4" height="1.2" fill="#c03a3a" opacity=".8"/><rect x="146.8" y="112.4" width="2.4" height="1.2" fill="#a8a8a8" opacity=".8"/><rect x="152.9" y="112.4" width="2.4" height="1.2" fill="#a8a8a8" opacity=".8"/><rect x="159.0" y="112.4" width="2.4" height="1.2" fill="#c03a3a" opacity=".8"/><rect x="165.1" y="112.4" width="2.4" height="1.2" fill="#a8a8a8" opacity=".8"/><rect x="171.2" y="112.4" width="2.4" height="1.2" fill="#a8a8a8" opacity=".8"/><rect x="177.3" y="112.4" width="2.4" height="1.2" fill="#c03a3a" opacity=".8"/><rect x="183.39999999999998" y="112.4" width="2.4" height="1.2" fill="#a8a8a8" opacity=".8"/><rect x="189.5" y="112.4" width="2.4" height="1.2" fill="#a8a8a8" opacity=".8"/><path d="M94 101.6 H197 M94 106 H197 M94 110.4 H197 M94 114.8 H197" stroke="#4a1414" stroke-width="0.3"/><rect x="136" y="107" width="60" height="3" fill="#7a6a6a" opacity=".75"/><rect x="95" y="111.4" width="36" height="3" fill="#7a6a6a" opacity=".75"/><rect x="176" y="102.6" width="8" height="3" fill="#7a6a6a" opacity=".75"/><path d="M140 110.6 A12 6 0 0 0 164 110.6" fill="none" stroke="#c03a2a" stroke-width="0.5"/><path d="M151.6 116.4 V121.6" stroke="#d03a2a" stroke-width="0.6"/><rect x="186" y="133" width="10" height="2.4" fill="#3a3a3a"/><text x="138" y="126" font-size="2.6" fill="#c03a2a" font-family="'Noto Sans CJK SC',sans-serif">封单主要撤的两个万手单</text><text x="243.6" y="37" font-size="2.6" fill="#d84a3a" font-family="'Noto Sans CJK SC',sans-serif">这两笔撤4.2亿</text><text x="41" y="40.4" font-size="2.2" fill="#ddd" font-family="'Liberation Sans',sans-serif">10:06:12</text></svg>
<svg style="left:559.4px;top:175.9px" width="271.2" height="146" viewBox="0 0 271.2 146"><rect width="271.2" height="146" fill="#141414"/><rect width="271.2" height="5.2" fill="#edf1f3"/><rect x="1.2" y="1.6" width="2" height="2" fill="#3a6ad0"/><path d="M248.2 2.8 H250.2 M262.2 1.6 L264.2 3.6 M264.2 1.6 L262.2 3.6" stroke="#555" stroke-width="0.4"/><rect x="255.2" y="1.6" width="2" height="2" fill="none" stroke="#555" stroke-width="0.4"/><rect x="3.5" y="8.5" width="31.5" height="5.5" rx="0.6" fill="#1a1a1a" stroke="#2e2e2e" stroke-width="0.4"/><circle cx="6.4" cy="11.2" r="1" fill="none" stroke="#777" stroke-width="0.35"/><rect x="9" y="10.6" width="8" height="1.2" fill="#555"/><rect x="3.8" y="16.6" width="13.8" height="3.8" fill="#c0281c"/><rect x="19.3" y="16.6" width="12.7" height="3.8" fill="#3c3c3c"/><text x="5.6" y="19.4" font-size="2.5" fill="#fbe8e2" font-weight="bold" font-family="'Noto Sans CJK SC',sans-serif">单笔大单</text><text x="20.7" y="19.4" font-size="2.5" fill="#d0d0d0" font-weight="bold" font-family="'Noto Sans CJK SC',sans-serif">逐笔分析</text><rect x="73" y="17.9" width="17" height="1.1" fill="#555"/><rect x="92" y="16.8" width="10" height="3.4" fill="#222" stroke="#444" stroke-width="0.3"/><rect x="93.4" y="17.9" width="4" height="1.2" fill="#ccc"/><path d="M99 18 L100 19.2 L101 18 Z" fill="#ccc"/><text x="5.6" y="24.90" font-size="2.25" fill="#cfcfcf" text-anchor="start" opacity="1" font-weight="bold" font-family="'Liberation Sans','Noto Sans CJK SC',sans-serif">开始时间</text><text x="21.5" y="24.90" font-size="2.25" fill="#cfcfcf" text-anchor="start" opacity="1" font-weight="bold" font-family="'Liberation Sans','Noto Sans CJK SC',sans-serif">成交量</text><text x="36" y="24.90" font-size="2.25" fill="#cfcfcf" text-anchor="start" opacity="1" font-weight="bold" font-family="'Liberation Sans','Noto Sans CJK SC',sans-serif">金额</text><text x="49.3" y="24.90" font-size="2.25" fill="#cfcfcf" text-anchor="start" opacity="1" font-weight="bold" font-family="'Liberation Sans','Noto Sans CJK SC',sans-serif">成交均价</text><text x="59.6" y="24.90" font-size="2.25" fill="#cfcfcf" text-anchor="start" opacity="1" font-weight="bold" font-family="'Liberation Sans','Noto Sans CJK SC',sans-serif">结束时间</text><text x="74.6" y="24.90" font-size="2.25" fill="#cfcfcf" text-anchor="start" opacity="1" font-weight="bold" font-family="'Liberation Sans','Noto Sans CJK SC',sans-serif">综合性质</text><text x="89" y="24.90" font-size="2.25" fill="#cfcfcf" text-anchor="start" opacity="1" font-weight="bold" font-family="'Liberation Sans','Noto Sans CJK SC',sans-serif">成交明细</text><path d="M70 23.6 L70.8 24.6 L71.6 23.6 Z M84.4 23.6 L85.4 24.8 L86.4 23.6 Z" fill="#ddd"/><circle cx="99.6" cy="24" r="0.8" fill="none" stroke="#888" stroke-width="0.3"/><rect x="89.2" y="27.4" width="16.8" height="0.5" fill="#888"/><text x="97.5" y="29.40" font-size="1.9" fill="#aaa" text-anchor="middle" opacity="1" font-weight="bold" font-family="'Liberation Sans','Noto Sans CJK SC',sans-serif">6笔</text><g opacity=".42"><rect x="6" y="32.55" width="7.6" height="1.5" fill="#d6d6d6"/><rect x="22.15" y="32.55" width="6.25" height="1.5" fill="#1fb52a"/><rect x="37.00" y="32.55" width="5.20" height="1.5" fill="#1fb52a"/><rect x="51.4" y="32.55" width="4.6" height="1.5" fill="#c0281c"/><rect x="60.1" y="32.55" width="7.6" height="1.5" fill="#d0d0d0"/><rect x="76.4" y="32.40" width="7" height="1.8" fill="#1fb52a"/><rect x="95.6" y="33.10" width="3.8" height="1.3" fill="#e4e4e4"/></g><text x="6" y="34.15" font-size="2.45" fill="#d8d8d8" text-anchor="start" opacity="1" font-weight="bold" font-family="'Liberation Sans','Noto Sans CJK SC',sans-serif">10:08:37</text><text x="28.4" y="34.15" font-size="2.45" fill="#1fb52a" text-anchor="end" opacity="1" font-weight="bold" font-family="'Liberation Sans','Noto Sans CJK SC',sans-serif">4444手</text><text x="42.2" y="34.15" font-size="2.45" fill="#1fb52a" text-anchor="end" opacity="1" font-weight="bold" font-family="'Liberation Sans','Noto Sans CJK SC',sans-serif">440万</text><text x="56" y="34.15" font-size="2.45" fill="#c22a1c" text-anchor="end" opacity="1" font-weight="bold" font-family="'Liberation Sans','Noto Sans CJK SC',sans-serif">9.90</text><text x="60.1" y="34.15" font-size="2.45" fill="#d8d8d8" text-anchor="start" opacity="1" font-weight="bold" font-family="'Liberation Sans','Noto Sans CJK SC',sans-serif">10:08:37</text><text x="76.4" y="34.20" font-size="2.35" fill="#1fb52a" text-anchor="start" opacity="1" font-weight="bold" font-family="'Liberation Sans','Noto Sans CJK SC',sans-serif">主动卖</text><rect x="89.2" y="31.20" width="16.8" height="1.35" rx="0.4" fill="#29c234"/><text x="97.5" y="34.40" font-size="1.95" fill="#dcdcdc" text-anchor="middle" opacity="1" font-weight="bold" font-family="'Liberation Sans','Noto Sans CJK SC',sans-serif">22笔</text><g opacity=".42"><rect x="6" y="39.47" width="7.6" height="1.5" fill="#d6d6d6"/><rect x="22.15" y="39.47" width="6.25" height="1.5" fill="#c22a1c"/><rect x="37.00" y="39.47" width="5.20" height="1.5" fill="#c22a1c"/><rect x="51.4" y="39.47" width="4.6" height="1.5" fill="#c0281c"/><rect x="60.1" y="39.47" width="7.6" height="1.5" fill="#d0d0d0"/><rect x="76.4" y="39.32" width="7" height="1.8" fill="#c22a1c"/><rect x="95.6" y="40.02" width="3.8" height="1.3" fill="#e4e4e4"/></g><text x="6" y="41.07" font-size="2.45" fill="#d8d8d8" text-anchor="start" opacity="1" font-weight="bold" font-family="'Liberation Sans','Noto Sans CJK SC',sans-serif">10:08:32</text><text x="28.4" y="41.07" font-size="2.45" fill="#c22a1c" text-anchor="end" opacity="1" font-weight="bold" font-family="'Liberation Sans','Noto Sans CJK SC',sans-serif">2216手</text><text x="42.2" y="41.07" font-size="2.45" fill="#c22a1c" text-anchor="end" opacity="1" font-weight="bold" font-family="'Liberation Sans','Noto Sans CJK SC',sans-serif">219万</text><text x="56" y="41.07" font-size="2.45" fill="#c22a1c" text-anchor="end" opacity="1" font-weight="bold" font-family="'Liberation Sans','Noto Sans CJK SC',sans-serif">9.90</text><text x="60.1" y="41.07" font-size="2.45" fill="#d8d8d8" text-anchor="start" opacity="1" font-weight="bold" font-family="'Liberation Sans','Noto Sans CJK SC',sans-serif">10:08:35</text><text x="76.4" y="41.12" font-size="2.35" fill="#c22a1c" text-anchor="start" opacity="1" font-weight="bold" font-family="'Liberation Sans','Noto Sans CJK SC',sans-serif">被动买</text><rect x="89.2" y="38.12" width="16.8" height="1.35" rx="0.4" fill="#c83220"/><text x="97.5" y="41.32" font-size="1.95" fill="#dcdcdc" text-anchor="middle" opacity="1" font-weight="bold" font-family="'Liberation Sans','Noto Sans CJK SC',sans-serif">9笔</text><g opacity=".42"><rect x="6" y="46.39" width="7.6" height="1.5" fill="#d6d6d6"/><rect x="20.90" y="46.39" width="7.50" height="1.5" fill="#c22a1c"/><rect x="35.70" y="46.39" width="6.50" height="1.5" fill="#c22a1c"/><rect x="51.4" y="46.39" width="4.6" height="1.5" fill="#c0281c"/><rect x="60.1" y="46.39" width="7.6" height="1.5" fill="#d0d0d0"/><rect x="76.4" y="46.24" width="7" height="1.8" fill="#c22a1c"/><rect x="95.6" y="46.94" width="3.8" height="1.3" fill="#e4e4e4"/></g><text x="6" y="47.99" font-size="2.45" fill="#d8d8d8" text-anchor="start" opacity="1" font-weight="bold" font-family="'Liberation Sans','Noto Sans CJK SC',sans-serif">10:08:12</text><text x="28.4" y="47.99" font-size="2.45" fill="#c22a1c" text-anchor="end" opacity="1" font-weight="bold" font-family="'Liberation Sans','Noto Sans CJK SC',sans-serif">11246手</text><text x="42.2" y="47.99" font-size="2.45" fill="#c22a1c" text-anchor="end" opacity="1" font-weight="bold" font-family="'Liberation Sans','Noto Sans CJK SC',sans-serif">1113万</text><text x="56" y="47.99" font-size="2.45" fill="#c22a1c" text-anchor="end" opacity="1" font-weight="bold" font-family="'Liberation Sans','Noto Sans CJK SC',sans-serif">9.90</text><text x="60.1" y="47.99" font-size="2.45" fill="#d8d8d8" text-anchor="start" opacity="1" font-weight="bold" font-family="'Liberation Sans','Noto Sans CJK SC',sans-serif">10:08:21</text><text x="76.4" y="48.04" font-size="2.35" fill="#c22a1c" text-anchor="start" opacity="1" font-weight="bold" font-family="'Liberation Sans','Noto Sans CJK SC',sans-serif">被动买</text><rect x="89.2" y="45.04" width="16.8" height="1.35" rx="0.4" fill="#c83220"/><text x="97.5" y="48.24" font-size="1.95" fill="#dcdcdc" text-anchor="middle" opacity="1" font-weight="bold" font-family="'Liberation Sans','Noto Sans CJK SC',sans-serif">31笔</text><g opacity=".42"><rect x="6" y="53.31" width="7.6" height="1.5" fill="#d6d6d6"/><rect x="20.90" y="53.31" width="7.50" height="1.5" fill="#c22a1c"/><rect x="37.00" y="53.31" width="5.20" height="1.5" fill="#c22a1c"/><rect x="51.4" y="53.31" width="4.6" height="1.5" fill="#c0281c"/><rect x="60.1" y="53.31" width="7.6" height="1.5" fill="#d0d0d0"/><rect x="76.4" y="53.16" width="7" height="1.8" fill="#c22a1c"/><rect x="95.6" y="53.86" width="3.8" height="1.3" fill="#e4e4e4"/></g><text x="6" y="54.91" font-size="2.45" fill="#d8d8d8" text-anchor="start" opacity="1" font-weight="bold" font-family="'Liberation Sans','Noto Sans CJK SC',sans-serif">10:07:32</text><text x="28.4" y="54.91" font-size="2.45" fill="#c22a1c" text-anchor="end" opacity="1" font-weight="bold" font-family="'Liberation Sans','Noto Sans CJK SC',sans-serif">10016手</text><text x="42.2" y="54.91" font-size="2.45" fill="#c22a1c" text-anchor="end" opacity="1" font-weight="bold" font-family="'Liberation Sans','Noto Sans CJK SC',sans-serif">991万</text><text x="56" y="54.91" font-size="2.45" fill="#c22a1c" text-anchor="end" opacity="1" font-weight="bold" font-family="'Liberation Sans','Noto Sans CJK SC',sans-serif">9.90</text><text x="60.1" y="54.91" font-size="2.45" fill="#d8d8d8" text-anchor="start" opacity="1" font-weight="bold" font-family="'Liberation Sans','Noto Sans CJK SC',sans-serif">10:08:12</text><text x="76.4" y="54.96" font-size="2.35" fill="#c22a1c" text-anchor="start" opacity="1" font-weight="bold" font-family="'Liberation Sans','Noto Sans CJK SC',sans-serif">被动买</text><rect x="89.2" y="51.96" width="16.8" height="1.35" rx="0.4" fill="#c83220"/><text x="97.5" y="55.16" font-size="1.95" fill="#dcdcdc" text-anchor="middle" opacity="1" font-weight="bold" font-family="'Liberation Sans','Noto Sans CJK SC',sans-serif">269笔</text><g opacity=".42"><rect x="6" y="60.23" width="7.6" height="1.5" fill="#d6d6d6"/><rect x="20.90" y="60.23" width="7.50" height="1.5" fill="#c22a1c"/><rect x="37.00" y="60.23" width="5.20" height="1.5" fill="#c22a1c"/><rect x="51.4" y="60.23" width="4.6" height="1.5" fill="#c0281c"/><rect x="60.1" y="60.23" width="7.6" height="1.5" fill="#d0d0d0"/><rect x="76.4" y="60.08" width="7" height="1.8" fill="#c22a1c"/><rect x="95.6" y="60.78" width="3.8" height="1.3" fill="#e4e4e4"/></g><text x="6" y="61.83" font-size="2.45" fill="#d8d8d8" text-anchor="start" opacity="1" font-weight="bold" font-family="'Liberation Sans','Noto Sans CJK SC',sans-serif">10:06:34</text><text x="28.4" y="61.83" font-size="2.45" fill="#c22a1c" text-anchor="end" opacity="1" font-weight="bold" font-family="'Liberation Sans','Noto Sans CJK SC',sans-serif">10016手</text><text x="42.2" y="61.83" font-size="2.45" fill="#c22a1c" text-anchor="end" opacity="1" font-weight="bold" font-family="'Liberation Sans','Noto Sans CJK SC',sans-serif">991万</text><text x="56" y="61.83" font-size="2.45" fill="#c22a1c" text-anchor="end" opacity="1" font-weight="bold" font-family="'Liberation Sans','Noto Sans CJK SC',sans-serif">9.90</text><text x="60.1" y="61.83" font-size="2.45" fill="#d8d8d8" text-anchor="start" opacity="1" font-weight="bold" font-family="'Liberation Sans','Noto Sans CJK SC',sans-serif">10:07:12</text><text x="76.4" y="61.88" font-size="2.35" fill="#c22a1c" text-anchor="start" opacity="1" font-weight="bold" font-family="'Liberation Sans','Noto Sans CJK SC',sans-serif">被动买</text><rect x="89.2" y="58.88" width="16.8" height="1.35" rx="0.4" fill="#c83220"/><text x="97.5" y="62.08" font-size="1.95" fill="#dcdcdc" text-anchor="middle" opacity="1" font-weight="bold" font-family="'Liberation Sans','Noto Sans CJK SC',sans-serif">306笔</text><g opacity=".42"><rect x="6" y="67.15" width="7.6" height="1.5" fill="#d6d6d6"/><rect x="22.15" y="67.15" width="6.25" height="1.5" fill="#c22a1c"/><rect x="37.00" y="67.15" width="5.20" height="1.5" fill="#c22a1c"/><rect x="51.4" y="67.15" width="4.6" height="1.5" fill="#c0281c"/><rect x="60.1" y="67.15" width="7.6" height="1.5" fill="#d0d0d0"/><rect x="76.4" y="67.00" width="7" height="1.8" fill="#c22a1c"/><rect x="95.6" y="67.70" width="3.8" height="1.3" fill="#e4e4e4"/></g><text x="6" y="68.75" font-size="2.45" fill="#d8d8d8" text-anchor="start" opacity="1" font-weight="bold" font-family="'Liberation Sans','Noto Sans CJK SC',sans-serif">10:06:38</text><text x="28.4" y="68.75" font-size="2.45" fill="#c22a1c" text-anchor="end" opacity="1" font-weight="bold" font-family="'Liberation Sans','Noto Sans CJK SC',sans-serif">2117手</text><text x="42.2" y="68.75" font-size="2.45" fill="#c22a1c" text-anchor="end" opacity="1" font-weight="bold" font-family="'Liberation Sans','Noto Sans CJK SC',sans-serif">209万</text><text x="56" y="68.75" font-size="2.45" fill="#c22a1c" text-anchor="end" opacity="1" font-weight="bold" font-family="'Liberation Sans','Noto Sans CJK SC',sans-serif">9.90</text><text x="60.1" y="68.75" font-size="2.45" fill="#d8d8d8" text-anchor="start" opacity="1" font-weight="bold" font-family="'Liberation Sans','Noto Sans CJK SC',sans-serif">10:06:47</text><text x="76.4" y="68.80" font-size="2.35" fill="#c22a1c" text-anchor="start" opacity="1" font-weight="bold" font-family="'Liberation Sans','Noto Sans CJK SC',sans-serif">被动买</text><rect x="89.2" y="65.80" width="16.8" height="1.35" rx="0.4" fill="#c83220"/><text x="97.5" y="69.00" font-size="1.95" fill="#dcdcdc" text-anchor="middle" opacity="1" font-weight="bold" font-family="'Liberation Sans','Noto Sans CJK SC',sans-serif">18笔</text><g opacity=".42"><rect x="6" y="74.07" width="7.6" height="1.5" fill="#d6d6d6"/><rect x="22.15" y="74.07" width="6.25" height="1.5" fill="#c22a1c"/><rect x="37.00" y="74.07" width="5.20" height="1.5" fill="#c22a1c"/><rect x="51.4" y="74.07" width="4.6" height="1.5" fill="#c0281c"/><rect x="60.1" y="74.07" width="7.6" height="1.5" fill="#d0d0d0"/><rect x="76.4" y="73.92" width="7" height="1.8" fill="#c22a1c"/><rect x="95.6" y="74.62" width="3.8" height="1.3" fill="#e4e4e4"/></g><text x="6" y="75.67" font-size="2.45" fill="#d8d8d8" text-anchor="start" opacity="1" font-weight="bold" font-family="'Liberation Sans','Noto Sans CJK SC',sans-serif">10:06:52</text><text x="28.4" y="75.67" font-size="2.45" fill="#c22a1c" text-anchor="end" opacity="1" font-weight="bold" font-family="'Liberation Sans','Noto Sans CJK SC',sans-serif">4198手</text><text x="42.2" y="75.67" font-size="2.45" fill="#c22a1c" text-anchor="end" opacity="1" font-weight="bold" font-family="'Liberation Sans','Noto Sans CJK SC',sans-serif">415万</text><text x="56" y="75.67" font-size="2.45" fill="#c22a1c" text-anchor="end" opacity="1" font-weight="bold" font-family="'Liberation Sans','Noto Sans CJK SC',sans-serif">9.90</text><text x="60.1" y="75.67" font-size="2.45" fill="#d8d8d8" text-anchor="start" opacity="1" font-weight="bold" font-family="'Liberation Sans','Noto Sans CJK SC',sans-serif">10:06:55</text><text x="76.4" y="75.72" font-size="2.35" fill="#c22a1c" text-anchor="start" opacity="1" font-weight="bold" font-family="'Liberation Sans','Noto Sans CJK SC',sans-serif">被动买</text><rect x="89.2" y="72.72" width="16.8" height="1.35" rx="0.4" fill="#c83220"/><text x="97.5" y="75.92" font-size="1.95" fill="#dcdcdc" text-anchor="middle" opacity="1" font-weight="bold" font-family="'Liberation Sans','Noto Sans CJK SC',sans-serif">27笔</text><g opacity=".42"><rect x="6" y="80.99" width="7.6" height="1.5" fill="#d6d6d6"/><rect x="22.15" y="80.99" width="6.25" height="1.5" fill="#c22a1c"/><rect x="37.00" y="80.99" width="5.20" height="1.5" fill="#c22a1c"/><rect x="51.4" y="80.99" width="4.6" height="1.5" fill="#c0281c"/><rect x="60.1" y="80.99" width="7.6" height="1.5" fill="#d0d0d0"/><rect x="76.4" y="80.84" width="7" height="1.8" fill="#c22a1c"/><rect x="95.6" y="81.54" width="3.8" height="1.3" fill="#e4e4e4"/></g><text x="6" y="82.59" font-size="2.45" fill="#d8d8d8" text-anchor="start" opacity="1" font-weight="bold" font-family="'Liberation Sans','Noto Sans CJK SC',sans-serif">10:06:36</text><text x="28.4" y="82.59" font-size="2.45" fill="#c22a1c" text-anchor="end" opacity="1" font-weight="bold" font-family="'Liberation Sans','Noto Sans CJK SC',sans-serif">1807手</text><text x="42.2" y="82.59" font-size="2.45" fill="#c22a1c" text-anchor="end" opacity="1" font-weight="bold" font-family="'Liberation Sans','Noto Sans CJK SC',sans-serif">178万</text><text x="56" y="82.59" font-size="2.45" fill="#c22a1c" text-anchor="end" opacity="1" font-weight="bold" font-family="'Liberation Sans','Noto Sans CJK SC',sans-serif">9.90</text><text x="60.1" y="82.59" font-size="2.45" fill="#d8d8d8" text-anchor="start" opacity="1" font-weight="bold" font-family="'Liberation Sans','Noto Sans CJK SC',sans-serif">10:06:38</text><text x="76.4" y="82.64" font-size="2.35" fill="#c22a1c" text-anchor="start" opacity="1" font-weight="bold" font-family="'Liberation Sans','Noto Sans CJK SC',sans-serif">被动买</text><rect x="89.2" y="79.64" width="16.8" height="1.35" rx="0.4" fill="#c83220"/><text x="97.5" y="82.84" font-size="1.95" fill="#dcdcdc" text-anchor="middle" opacity="1" font-weight="bold" font-family="'Liberation Sans','Noto Sans CJK SC',sans-serif">14笔</text><g opacity=".42"><rect x="6" y="87.91" width="7.6" height="1.5" fill="#d6d6d6"/><rect x="22.15" y="87.91" width="6.25" height="1.5" fill="#c22a1c"/><rect x="37.00" y="87.91" width="5.20" height="1.5" fill="#c22a1c"/><rect x="51.4" y="87.91" width="4.6" height="1.5" fill="#c0281c"/><rect x="60.1" y="87.91" width="7.6" height="1.5" fill="#d0d0d0"/><rect x="76.4" y="87.76" width="7" height="1.8" fill="#c22a1c"/><rect x="95.6" y="88.46" width="3.8" height="1.3" fill="#e4e4e4"/></g><text x="6" y="89.51" font-size="2.45" fill="#d8d8d8" text-anchor="start" opacity="1" font-weight="bold" font-family="'Liberation Sans','Noto Sans CJK SC',sans-serif">10:06:11</text><text x="28.4" y="89.51" font-size="2.45" fill="#c22a1c" text-anchor="end" opacity="1" font-weight="bold" font-family="'Liberation Sans','Noto Sans CJK SC',sans-serif">8830手</text><text x="42.2" y="89.51" font-size="2.45" fill="#c22a1c" text-anchor="end" opacity="1" font-weight="bold" font-family="'Liberation Sans','Noto Sans CJK SC',sans-serif">874万</text><text x="56" y="89.51" font-size="2.45" fill="#c22a1c" text-anchor="end" opacity="1" font-weight="bold" font-family="'Liberation Sans','Noto Sans CJK SC',sans-serif">9.89</text><text x="60.1" y="89.51" font-size="2.45" fill="#d8d8d8" text-anchor="start" opacity="1" font-weight="bold" font-family="'Liberation Sans','Noto Sans CJK SC',sans-serif">10:06:12</text><text x="76.4" y="89.56" font-size="2.35" fill="#c22a1c" text-anchor="start" opacity="1" font-weight="bold" font-family="'Liberation Sans','Noto Sans CJK SC',sans-serif">被动买</text><rect x="89.2" y="86.56" width="16.8" height="1.35" rx="0.4" fill="#8a5a9a"/><rect x="89.2" y="86.56" width="7" height="1.35" rx="0.4" fill="#c23020"/><text x="97.5" y="89.76" font-size="1.95" fill="#dcdcdc" text-anchor="middle" opacity="1" font-weight="bold" font-family="'Liberation Sans','Noto Sans CJK SC',sans-serif">85笔</text><g opacity=".42"><rect x="6" y="94.83" width="7.6" height="1.5" fill="#d6d6d6"/><rect x="22.15" y="94.83" width="6.25" height="1.5" fill="#1fb52a"/><rect x="37.00" y="94.83" width="5.20" height="1.5" fill="#1fb52a"/><rect x="51.4" y="94.83" width="4.6" height="1.5" fill="#c0281c"/><rect x="60.1" y="94.83" width="7.6" height="1.5" fill="#d0d0d0"/><rect x="76.4" y="94.68" width="7" height="1.8" fill="#1fb52a"/><rect x="95.6" y="95.38" width="3.8" height="1.3" fill="#e4e4e4"/></g><text x="6" y="96.43" font-size="2.45" fill="#d8d8d8" text-anchor="start" opacity="1" font-weight="bold" font-family="'Liberation Sans','Noto Sans CJK SC',sans-serif">10:06:11</text><text x="28.4" y="96.43" font-size="2.45" fill="#1fb52a" text-anchor="end" opacity="1" font-weight="bold" font-family="'Liberation Sans','Noto Sans CJK SC',sans-serif">1842手</text><text x="42.2" y="96.43" font-size="2.45" fill="#1fb52a" text-anchor="end" opacity="1" font-weight="bold" font-family="'Liberation Sans','Noto Sans CJK SC',sans-serif">182万</text><text x="56" y="96.43" font-size="2.45" fill="#c22a1c" text-anchor="end" opacity="1" font-weight="bold" font-family="'Liberation Sans','Noto Sans CJK SC',sans-serif">9.90</text><text x="60.1" y="96.43" font-size="2.45" fill="#d8d8d8" text-anchor="start" opacity="1" font-weight="bold" font-family="'Liberation Sans','Noto Sans CJK SC',sans-serif">10:06:11</text><text x="76.4" y="96.48" font-size="2.35" fill="#1fb52a" text-anchor="start" opacity="1" font-weight="bold" font-family="'Liberation Sans','Noto Sans CJK SC',sans-serif">主动卖</text><rect x="89.2" y="93.48" width="16.8" height="1.35" rx="0.4" fill="#29c234"/><text x="97.5" y="96.68" font-size="1.95" fill="#dcdcdc" text-anchor="middle" opacity="1" font-weight="bold" font-family="'Liberation Sans','Noto Sans CJK SC',sans-serif">12笔</text><g opacity=".42"><rect x="6" y="101.75" width="7.6" height="1.5" fill="#d6d6d6"/><rect x="22.15" y="101.75" width="6.25" height="1.5" fill="#1fb52a"/><rect x="37.00" y="101.75" width="5.20" height="1.5" fill="#1fb52a"/><rect x="51.4" y="101.75" width="4.6" height="1.5" fill="#c0281c"/><rect x="60.1" y="101.75" width="7.6" height="1.5" fill="#d0d0d0"/><rect x="76.4" y="101.60" width="7" height="1.8" fill="#1fb52a"/><rect x="95.6" y="102.30" width="3.8" height="1.3" fill="#e4e4e4"/></g><text x="6" y="103.35" font-size="2.45" fill="#d8d8d8" text-anchor="start" opacity="1" font-weight="bold" font-family="'Liberation Sans','Noto Sans CJK SC',sans-serif">10:05:44</text><text x="28.4" y="103.35" font-size="2.45" fill="#1fb52a" text-anchor="end" opacity="1" font-weight="bold" font-family="'Liberation Sans','Noto Sans CJK SC',sans-serif">4004手</text><text x="42.2" y="103.35" font-size="2.45" fill="#1fb52a" text-anchor="end" opacity="1" font-weight="bold" font-family="'Liberation Sans','Noto Sans CJK SC',sans-serif">396万</text><text x="56" y="103.35" font-size="2.45" fill="#c22a1c" text-anchor="end" opacity="1" font-weight="bold" font-family="'Liberation Sans','Noto Sans CJK SC',sans-serif">9.88</text><text x="60.1" y="103.35" font-size="2.45" fill="#d8d8d8" text-anchor="start" opacity="1" font-weight="bold" font-family="'Liberation Sans','Noto Sans CJK SC',sans-serif">10:05:46</text><text x="76.4" y="103.40" font-size="2.35" fill="#1fb52a" text-anchor="start" opacity="1" font-weight="bold" font-family="'Liberation Sans','Noto Sans CJK SC',sans-serif">主动卖</text><rect x="89.2" y="100.40" width="16.8" height="1.35" rx="0.4" fill="#29c234"/><text x="97.5" y="103.60" font-size="1.95" fill="#dcdcdc" text-anchor="middle" opacity="1" font-weight="bold" font-family="'Liberation Sans','Noto Sans CJK SC',sans-serif">33笔</text><g opacity=".42"><rect x="6" y="108.67" width="7.6" height="1.5" fill="#d6d6d6"/><rect x="22.15" y="108.67" width="6.25" height="1.5" fill="#1fb52a"/><rect x="37.00" y="108.67" width="5.20" height="1.5" fill="#1fb52a"/><rect x="51.4" y="108.67" width="4.6" height="1.5" fill="#c0281c"/><rect x="60.1" y="108.67" width="7.6" height="1.5" fill="#d0d0d0"/><rect x="76.4" y="108.52" width="7" height="1.8" fill="#1fb52a"/><rect x="95.6" y="109.22" width="3.8" height="1.3" fill="#e4e4e4"/></g><text x="6" y="110.27" font-size="2.45" fill="#d8d8d8" text-anchor="start" opacity="1" font-weight="bold" font-family="'Liberation Sans','Noto Sans CJK SC',sans-serif">10:04:56</text><text x="28.4" y="110.27" font-size="2.45" fill="#1fb52a" text-anchor="end" opacity="1" font-weight="bold" font-family="'Liberation Sans','Noto Sans CJK SC',sans-serif">2019手</text><text x="42.2" y="110.27" font-size="2.45" fill="#1fb52a" text-anchor="end" opacity="1" font-weight="bold" font-family="'Liberation Sans','Noto Sans CJK SC',sans-serif">199万</text><text x="56" y="110.27" font-size="2.45" fill="#c22a1c" text-anchor="end" opacity="1" font-weight="bold" font-family="'Liberation Sans','Noto Sans CJK SC',sans-serif">9.86</text><text x="60.1" y="110.27" font-size="2.45" fill="#d8d8d8" text-anchor="start" opacity="1" font-weight="bold" font-family="'Liberation Sans','Noto Sans CJK SC',sans-serif">10:04:58</text><text x="76.4" y="110.32" font-size="2.35" fill="#1fb52a" text-anchor="start" opacity="1" font-weight="bold" font-family="'Liberation Sans','Noto Sans CJK SC',sans-serif">主动卖</text><rect x="89.2" y="107.32" width="16.8" height="1.35" rx="0.4" fill="#29c234"/><text x="97.5" y="110.52" font-size="1.95" fill="#dcdcdc" text-anchor="middle" opacity="1" font-weight="bold" font-family="'Liberation Sans','Noto Sans CJK SC',sans-serif">21笔</text><g opacity=".42"><rect x="6" y="115.59" width="7.6" height="1.5" fill="#d6d6d6"/><rect x="22.15" y="115.59" width="6.25" height="1.5" fill="#c22a1c"/><rect x="37.00" y="115.59" width="5.20" height="1.5" fill="#c22a1c"/><rect x="51.4" y="115.59" width="4.6" height="1.5" fill="#c0281c"/><rect x="60.1" y="115.59" width="7.6" height="1.5" fill="#d0d0d0"/><rect x="76.4" y="115.44" width="7" height="1.8" fill="#c22a1c"/><rect x="95.6" y="116.14" width="3.8" height="1.3" fill="#e4e4e4"/></g><text x="6" y="117.19" font-size="2.45" fill="#d8d8d8" text-anchor="start" opacity="1" font-weight="bold" font-family="'Liberation Sans','Noto Sans CJK SC',sans-serif">10:04:48</text><text x="28.4" y="117.19" font-size="2.45" fill="#c22a1c" text-anchor="end" opacity="1" font-weight="bold" font-family="'Liberation Sans','Noto Sans CJK SC',sans-serif">1977手</text><text x="42.2" y="117.19" font-size="2.45" fill="#c22a1c" text-anchor="end" opacity="1" font-weight="bold" font-family="'Liberation Sans','Noto Sans CJK SC',sans-serif">195万</text><text x="56" y="117.19" font-size="2.45" fill="#c22a1c" text-anchor="end" opacity="1" font-weight="bold" font-family="'Liberation Sans','Noto Sans CJK SC',sans-serif">9.85</text><text x="60.1" y="117.19" font-size="2.45" fill="#d8d8d8" text-anchor="start" opacity="1" font-weight="bold" font-family="'Liberation Sans','Noto Sans CJK SC',sans-serif">10:04:49</text><text x="76.4" y="117.24" font-size="2.35" fill="#c22a1c" text-anchor="start" opacity="1" font-weight="bold" font-family="'Liberation Sans','Noto Sans CJK SC',sans-serif">被动买</text><rect x="89.2" y="114.24" width="16.8" height="1.35" rx="0.4" fill="#c83220"/><text x="97.5" y="117.44" font-size="1.95" fill="#dcdcdc" text-anchor="middle" opacity="1" font-weight="bold" font-family="'Liberation Sans','Noto Sans CJK SC',sans-serif">17笔</text><g opacity=".42"><rect x="6" y="122.51" width="7.6" height="1.5" fill="#d6d6d6"/><rect x="22.15" y="122.51" width="6.25" height="1.5" fill="#c22a1c"/><rect x="37.00" y="122.51" width="5.20" height="1.5" fill="#c22a1c"/><rect x="51.4" y="122.51" width="4.6" height="1.5" fill="#c0281c"/><rect x="60.1" y="122.51" width="7.6" height="1.5" fill="#d0d0d0"/><rect x="76.4" y="122.36" width="7" height="1.8" fill="#c22a1c"/><rect x="95.6" y="123.06" width="3.8" height="1.3" fill="#e4e4e4"/></g><text x="6" y="124.11" font-size="2.45" fill="#d8d8d8" text-anchor="start" opacity="1" font-weight="bold" font-family="'Liberation Sans','Noto Sans CJK SC',sans-serif">10:04:37</text><text x="28.4" y="124.11" font-size="2.45" fill="#c22a1c" text-anchor="end" opacity="1" font-weight="bold" font-family="'Liberation Sans','Noto Sans CJK SC',sans-serif">2302手</text><text x="42.2" y="124.11" font-size="2.45" fill="#c22a1c" text-anchor="end" opacity="1" font-weight="bold" font-family="'Liberation Sans','Noto Sans CJK SC',sans-serif">226万</text><text x="56" y="124.11" font-size="2.45" fill="#c22a1c" text-anchor="end" opacity="1" font-weight="bold" font-family="'Liberation Sans','Noto Sans CJK SC',sans-serif">9.84</text><text x="60.1" y="124.11" font-size="2.45" fill="#d8d8d8" text-anchor="start" opacity="1" font-weight="bold" font-family="'Liberation Sans','Noto Sans CJK SC',sans-serif">10:04:38</text><text x="76.4" y="124.16" font-size="2.35" fill="#c22a1c" text-anchor="start" opacity="1" font-weight="bold" font-family="'Liberation Sans','Noto Sans CJK SC',sans-serif">被动买</text><rect x="89.2" y="121.16" width="16.8" height="1.35" rx="0.4" fill="#c83220"/><text x="97.5" y="124.36" font-size="1.95" fill="#dcdcdc" text-anchor="middle" opacity="1" font-weight="bold" font-family="'Liberation Sans','Noto Sans CJK SC',sans-serif">25笔</text><g opacity=".42"><rect x="6" y="129.43" width="7.6" height="1.5" fill="#d6d6d6"/><rect x="22.15" y="129.43" width="6.25" height="1.5" fill="#c22a1c"/><rect x="37.00" y="129.43" width="5.20" height="1.5" fill="#c22a1c"/><rect x="51.4" y="129.43" width="4.6" height="1.5" fill="#c0281c"/><rect x="60.1" y="129.43" width="7.6" height="1.5" fill="#d0d0d0"/><rect x="76.4" y="129.28" width="7" height="1.8" fill="#c22a1c"/><rect x="95.6" y="129.98" width="3.8" height="1.3" fill="#e4e4e4"/></g><text x="6" y="131.03" font-size="2.45" fill="#d8d8d8" text-anchor="start" opacity="1" font-weight="bold" font-family="'Liberation Sans','Noto Sans CJK SC',sans-serif">10:03:40</text><text x="28.4" y="131.03" font-size="2.45" fill="#c22a1c" text-anchor="end" opacity="1" font-weight="bold" font-family="'Liberation Sans','Noto Sans CJK SC',sans-serif">1588手</text><text x="42.2" y="131.03" font-size="2.45" fill="#c22a1c" text-anchor="end" opacity="1" font-weight="bold" font-family="'Liberation Sans','Noto Sans CJK SC',sans-serif">155万</text><text x="56" y="131.03" font-size="2.45" fill="#c22a1c" text-anchor="end" opacity="1" font-weight="bold" font-family="'Liberation Sans','Noto Sans CJK SC',sans-serif">9.78</text><text x="60.1" y="131.03" font-size="2.45" fill="#d8d8d8" text-anchor="start" opacity="1" font-weight="bold" font-family="'Liberation Sans','Noto Sans CJK SC',sans-serif">10:03:41</text><text x="76.4" y="131.08" font-size="2.35" fill="#c22a1c" text-anchor="start" opacity="1" font-weight="bold" font-family="'Liberation Sans','Noto Sans CJK SC',sans-serif">被动买</text><rect x="89.2" y="128.08" width="16.8" height="1.35" rx="0.4" fill="#c83220"/><text x="97.5" y="131.28" font-size="1.95" fill="#dcdcdc" text-anchor="middle" opacity="1" font-weight="bold" font-family="'Liberation Sans','Noto Sans CJK SC',sans-serif">16笔</text><g opacity=".42"><rect x="6" y="136.35" width="7.6" height="1.5" fill="#d6d6d6"/><rect x="20.90" y="136.35" width="7.50" height="1.5" fill="#c22a1c"/><rect x="35.70" y="136.35" width="6.50" height="1.5" fill="#c22a1c"/><rect x="51.4" y="136.35" width="4.6" height="1.5" fill="#c0281c"/><rect x="60.1" y="136.35" width="7.6" height="1.5" fill="#d0d0d0"/><rect x="76.4" y="136.20" width="7" height="1.8" fill="#c22a1c"/><rect x="95.6" y="136.90" width="3.8" height="1.3" fill="#e4e4e4"/></g><text x="6" y="137.95" font-size="2.45" fill="#d8d8d8" text-anchor="start" opacity="1" font-weight="bold" font-family="'Liberation Sans','Noto Sans CJK SC',sans-serif">10:03:10</text><text x="28.4" y="137.95" font-size="2.45" fill="#c22a1c" text-anchor="end" opacity="1" font-weight="bold" font-family="'Liberation Sans','Noto Sans CJK SC',sans-serif">12086手</text><text x="42.2" y="137.95" font-size="2.45" fill="#c22a1c" text-anchor="end" opacity="1" font-weight="bold" font-family="'Liberation Sans','Noto Sans CJK SC',sans-serif">1181万</text><text x="56" y="137.95" font-size="2.45" fill="#c22a1c" text-anchor="end" opacity="1" font-weight="bold" font-family="'Liberation Sans','Noto Sans CJK SC',sans-serif">9.77</text><text x="60.1" y="137.95" font-size="2.45" fill="#d8d8d8" text-anchor="start" opacity="1" font-weight="bold" font-family="'Liberation Sans','Noto Sans CJK SC',sans-serif">10:03:12</text><text x="76.4" y="138.00" font-size="2.35" fill="#c22a1c" text-anchor="start" opacity="1" font-weight="bold" font-family="'Liberation Sans','Noto Sans CJK SC',sans-serif">被动买</text><rect x="89.2" y="135.00" width="16.8" height="1.35" rx="0.4" fill="#c83220"/><text x="97.5" y="138.20" font-size="1.95" fill="#dcdcdc" text-anchor="middle" opacity="1" font-weight="bold" font-family="'Liberation Sans','Noto Sans CJK SC',sans-serif">96笔</text><rect x="3.4" y="49.7" width="104.6" height="15.299999999999997" fill="none" stroke="#c8682e" stroke-width="0.55"/><rect x="108" y="89" width="0.7" height="23" fill="#5a5a5a"/><rect x="5" y="140.2" width="14.8" height="3.8" rx="0.5" fill="#3a3a3a"/><rect x="6.4" y="141.5" width="9" height="1.2" fill="#bbb"/><rect x="96" y="10.6" width="12" height="1.3" fill="#2a7ad0"/><rect x="110" y="10.4" width="9" height="1.6" fill="#eee"/><rect x="120.4" y="10.6" width="7" height="1.3" fill="#aaa"/><rect x="129" y="10.6" width="12" height="1.3" fill="#c0281c"/><rect x="144" y="10.6" width="10" height="1.3" fill="#aaa"/><rect x="247" y="10.6" width="8" height="1.3" fill="#bbb"/><rect x="257" y="10.6" width="11" height="1.2" fill="#777"/><path d="M122.7 17 V65.2 H256.2 V17" fill="none" stroke="#2c2c2c" stroke-width="0.4"/><path d="M122.7 20 H256.2" stroke="#242424" stroke-width="0.35"/><path d="M122.7 29.5 H256.2" stroke="#242424" stroke-width="0.35"/><path d="M122.7 38.5 H256.2" stroke="#242424" stroke-width="0.35"/><path d="M122.7 47.5 H256.2" stroke="#242424" stroke-width="0.35"/><path d="M122.7 56.5 H256.2" stroke="#242424" stroke-width="0.35"/><path d="M139.4 18 V65.2" stroke="#202020" stroke-width="0.3"/><path d="M156.1 18 V65.2" stroke="#202020" stroke-width="0.3"/><path d="M172.8 18 V65.2" stroke="#202020" stroke-width="0.3"/><path d="M189.4 18 V65.2" stroke="#202020" stroke-width="0.3"/><path d="M206.1 18 V65.2" stroke="#202020" stroke-width="0.3"/><path d="M222.8 18 V65.2" stroke="#202020" stroke-width="0.3"/><path d="M239.5 18 V65.2" stroke="#202020" stroke-width="0.3"/><rect x="115.6" y="19.6" width="4.6" height="1.2" fill="#c0281c"/><rect x="115.6" y="28.6" width="4.6" height="1.2" fill="#c0281c"/><rect x="115.6" y="37.8" width="4.6" height="1.2" fill="#aaa"/><rect x="115.6" y="46.8" width="4.6" height="1.2" fill="#1fb52a"/><rect x="115.6" y="56" width="4.6" height="1.2" fill="#1fb52a"/><rect x="257.4" y="17.6" width="8" height="1.2" fill="#c0281c"/><rect x="257.4" y="27.2" width="6" height="1.2" fill="#c0281c"/><rect x="257.4" y="36" width="5" height="1.2" fill="#999"/><rect x="257.4" y="46" width="6.4" height="1.2" fill="#1fb52a"/><rect x="257.4" y="55.6" width="7.6" height="1.2" fill="#1fb52a"/><path d="M122.7 39 L124 34 L124.8 31 L126 29.6 L134 29 L136 28.6 L136.6 20.4 L144 20.2 L145 23 L146 24.6 L152 24.4 L158 24.8 L160 23 L161 20.4 L256.2 20.6" fill="none" stroke="#bdbdbd" stroke-width="0.55"/><path d="M122.7 39 L125 33 L128 30 L136 28.6 L140 25.6 L150 24.8 L162 24.4 L256.2 24.2" fill="none" stroke="#c89a20" stroke-width="0.5"/><circle cx="124.2" cy="35.4" r="0.95" fill="#30c040"/><circle cx="125.4" cy="30.6" r="0.95" fill="#e8462a"/><circle cx="128" cy="29.6" r="0.95" fill="#30c040"/><circle cx="131" cy="29.2" r="0.95" fill="#30c040"/><circle cx="134" cy="29" r="0.95" fill="#e8462a"/><circle cx="136.4" cy="28.4" r="0.95" fill="#e8462a"/><circle cx="137.0" cy="20.3" r="0.95" fill="#e8462a"/><circle cx="138.2" cy="20.3" r="0.95" fill="#e8462a"/><circle cx="139.4" cy="20.3" r="0.95" fill="#e8462a"/><circle cx="140.6" cy="20.3" r="0.95" fill="#e8462a"/><circle cx="141.8" cy="20.3" r="0.95" fill="#e8462a"/><circle cx="143.0" cy="20.3" r="0.95" fill="#e8462a"/><circle cx="146" cy="24.4" r="0.95" fill="#30c040"/><circle cx="149" cy="24.4" r="0.95" fill="#e0b030"/><circle cx="155" cy="24.7" r="0.95" fill="#e8462a"/><circle cx="159.4" cy="23.4" r="0.95" fill="#e8462a"/><circle cx="160.8" cy="21" r="0.95" fill="#e8462a"/><circle cx="163" cy="20.5" r="0.95" fill="#e8462a"/><circle cx="165" cy="20.5" r="0.95" fill="#e8462a"/><circle cx="167" cy="20.5" r="0.95" fill="#e8462a"/><circle cx="170" cy="20.5" r="0.95" fill="#e8462a"/><circle cx="176" cy="20.5" r="0.95" fill="#e8462a"/><circle cx="181" cy="20.5" r="0.95" fill="#e8462a"/><circle cx="186" cy="20.5" r="0.95" fill="#e8462a"/><circle cx="190" cy="20.5" r="0.95" fill="#e8462a"/><circle cx="195" cy="20.5" r="0.95" fill="#e8462a"/><circle cx="201" cy="20.5" r="0.95" fill="#e8462a"/><circle cx="207" cy="20.5" r="0.95" fill="#e8462a"/><circle cx="212" cy="20.5" r="0.95" fill="#e8462a"/><circle cx="224" cy="20.5" r="0.95" fill="#e8462a"/><circle cx="236" cy="20.5" r="0.95" fill="#e8462a"/><circle cx="243" cy="20.5" r="0.95" fill="#e8462a"/><circle cx="250" cy="20.5" r="0.95" fill="#e8462a"/><circle cx="253" cy="20.5" r="0.95" fill="#e8462a"/><circle cx="255.4" cy="20.5" r="0.95" fill="#e8462a"/><circle cx="172" cy="20.5" r="0.95" fill="#30c040"/><circle cx="178" cy="20.5" r="0.95" fill="#30c040"/><circle cx="188" cy="20.5" r="0.95" fill="#30c040"/><circle cx="198" cy="20.5" r="0.95" fill="#e0b030"/><circle cx="214" cy="20.5" r="0.95" fill="#30c040"/><circle cx="246" cy="20.5" r="0.95" fill="#e0b030"/><path d="M122.7 64.60000000000001 H256.2" stroke="#7a2018" stroke-width="0.45"/><path d="M124 65 V62.6 M125 65 V63.4 M136.4 65 V58 M137.4 65 V61 M139 65 V63 M144 65 V61.6 M146 65 V63.4 M160.8 65 V57.4 M162 65 V63" stroke="#707070" stroke-width="0.45"/><path d="M126 65 V63.8 M141 65 V63.6 M150 65 V64 M170 65 V64.2 M190 65 V64.2" stroke="#a03020" stroke-width="0.4"/><rect x="120.7" y="66.6" width="4" height="1" fill="#666"/><rect x="137.4" y="66.6" width="4" height="1" fill="#666"/><rect x="154.1" y="66.6" width="4" height="1" fill="#666"/><rect x="170.8" y="66.6" width="4" height="1" fill="#666"/><rect x="187.4" y="66.6" width="4" height="1" fill="#666"/><rect x="204.1" y="66.6" width="4" height="1" fill="#666"/><rect x="220.8" y="66.6" width="4" height="1" fill="#666"/><rect x="237.5" y="66.6" width="4" height="1" fill="#666"/><rect x="254.2" y="66.6" width="4" height="1" fill="#666"/><rect x="113.6" y="55" width="4" height="1.2" fill="#bbb"/><rect x="113.6" y="58.6" width="3" height="1.1" fill="#888"/><rect x="113.6" y="63" width="2" height="1.1" fill="#888"/><rect x="113.6" y="69.6" width="13" height="1.3" fill="#b4b4b4"/><rect x="244.2" y="70" width="11.6" height="3.8" rx="0.4" fill="#474747"/><rect x="245.6" y="71.3" width="8.8" height="1.2" fill="#ddd"/><path d="M122.7 75.6 V99.6 H256.2 V75.6 Z" fill="none" stroke="#2a2a2a" stroke-width="0.4"/><path d="M122.7 87 H256.2" stroke="#5a1c16" stroke-width="0.45"/><path d="M122.7 81.3 H256.2 M122.7 93.4 H256.2" stroke="#222" stroke-width="0.3"/><path d="M136.2 87 V77 M137.4 87 V82 M138.6 87 V84.6 M144.4 87 V83 M146 87 V85.6 M160.6 87 V79.4" stroke="#d03020" stroke-width="0.55"/><path d="M140 87 V89 M148 87 V88.2" stroke="#1fb52a" stroke-width="0.45"/><rect x="115.4" y="80.6" width="5" height="1.2" fill="#c0281c"/><rect x="119" y="86.4" width="1.4" height="1.2" fill="#999"/><rect x="114.6" y="92.8" width="5.8" height="1.2" fill="#1fb52a"/><rect x="111.2" y="105.6" width="50.8" height="39" fill="#181818" stroke="#222" stroke-width="0.3"/><rect x="163.8" y="105.6" width="50.19999999999999" height="39" fill="#181818" stroke="#222" stroke-width="0.3"/><rect x="216" y="105.6" width="50.39999999999998" height="39" fill="#181818" stroke="#222" stroke-width="0.3"/><rect x="113" y="107.6" width="16" height="1.4" fill="#d8d8d8"/><circle cx="131.6" cy="108.3" r="0.9" fill="none" stroke="#888" stroke-width="0.3"/><rect x="113" y="111.2" width="14" height="1.2" fill="#aaa"/><rect x="129" y="111.2" width="5" height="1.2" fill="#aaa"/><rect x="136" y="111.2" width="10" height="1.2" fill="#aaa"/><rect x="147" y="111.2" width="5" height="1.2" fill="#c0281c"/><rect x="153.4" y="111.2" width="3.6" height="1.2" fill="#aaa"/><rect x="114" y="114.50" width="5" height="1.1" fill="#888"/><rect x="121.6" y="114.60" width="37" height="0.9" fill="#8a8a8a"/><rect x="159.6" y="114.50" width="4.4" height="1.1" fill="#8a8a8a"/><rect x="114" y="117.25" width="5" height="1.1" fill="#888"/><rect x="121.6" y="117.35" width="31" height="0.9" fill="#d03a22"/><rect x="153.6" y="117.25" width="4.4" height="1.1" fill="#8a8a8a"/><rect x="114" y="120.00" width="5" height="1.1" fill="#888"/><rect x="121.6" y="120.10" width="22" height="0.9" fill="#8a8a8a"/><rect x="144.6" y="120.00" width="4.4" height="1.1" fill="#8a8a8a"/><rect x="114" y="122.75" width="5" height="1.1" fill="#888"/><rect x="121.6" y="122.85" width="16" height="0.9" fill="#8a8a8a"/><rect x="138.6" y="122.75" width="4.4" height="1.1" fill="#8a8a8a"/><rect x="114" y="125.50" width="5" height="1.1" fill="#888"/><rect x="121.6" y="125.60" width="11" height="0.9" fill="#8a8a8a"/><rect x="133.6" y="125.50" width="4.4" height="1.1" fill="#8a8a8a"/><rect x="114" y="128.25" width="5" height="1.1" fill="#888"/><rect x="121.6" y="128.35" width="9" height="0.9" fill="#30b83a"/><rect x="131.6" y="128.25" width="4.4" height="1.1" fill="#8a8a8a"/><rect x="114" y="131.00" width="5" height="1.1" fill="#888"/><rect x="121.6" y="131.10" width="8" height="0.9" fill="#8a8a8a"/><rect x="130.6" y="131.00" width="4.4" height="1.1" fill="#8a8a8a"/><rect x="114" y="133.75" width="5" height="1.1" fill="#888"/><rect x="121.6" y="133.85" width="8" height="0.9" fill="#8a8a8a"/><rect x="130.6" y="133.75" width="4.4" height="1.1" fill="#8a8a8a"/><rect x="114" y="136.50" width="5" height="1.1" fill="#888"/><rect x="121.6" y="136.60" width="7" height="0.9" fill="#8a8a8a"/><rect x="129.6" y="136.50" width="4.4" height="1.1" fill="#8a8a8a"/><rect x="118" y="139" width="38" height="0.9" fill="#666"/><rect x="114" y="141.6" width="1.2" height="1.2" fill="#c0281c"/><rect x="116" y="141.6" width="15" height="1.2" fill="#aaa"/><rect x="134" y="141.6" width="1.2" height="1.2" fill="#1fb52a"/><rect x="136" y="141.6" width="15" height="1.2" fill="#aaa"/><rect x="165.6" y="107.6" width="11" height="1.4" fill="#d8d8d8"/><circle cx="179" cy="108.3" r="0.9" fill="none" stroke="#888" stroke-width="0.3"/><rect x="188" y="106.8" width="6.2" height="3.8" fill="#2a80e8"/><rect x="189.4" y="108.1" width="3.4" height="1.2" fill="#dfeaff"/><rect x="196.4" y="108.1" width="2.6" height="1.2" fill="#aaa"/><rect x="202.4" y="108.1" width="2.6" height="1.2" fill="#aaa"/><rect x="208" y="108.1" width="3.6" height="1.2" fill="#aaa"/><circle cx="175.4" cy="125.8" r="7.3" fill="none" stroke="#d83a24" stroke-width="3.4"/><path d="M169.08 122.15 A7.3 7.3 0 0 1 176.67 118.61" fill="none" stroke="#25b838" stroke-width="3.4"/><circle cx="175.4" cy="125.8" r="4.6" fill="#2a2a2a"/><rect x="172.4" y="124.0" width="6" height="1.2" fill="#ddd"/><rect x="172.0" y="126.2" width="6.8" height="1.2" fill="#ddd"/><rect x="192" y="116" width="3" height="1.1" fill="#999"/><rect x="198.6" y="116" width="3" height="1.1" fill="#999"/><rect x="204.4" y="116" width="5" height="1.1" fill="#999"/><rect x="186.6" y="119.6" width="1.8" height="1.8" fill="#d83a24"/><rect x="189.6" y="119.89999999999999" width="5.4" height="1.2" fill="#bbb"/><rect x="197.4" y="119.89999999999999" width="3.6" height="1.2" fill="#aaa"/><rect x="203.6" y="119.89999999999999" width="5.6" height="1.2" fill="#c0281c"/><rect x="186.6" y="123.5" width="1.8" height="1.8" fill="#25b838"/><rect x="189.6" y="123.8" width="5.4" height="1.2" fill="#bbb"/><rect x="197.4" y="123.8" width="3.6" height="1.2" fill="#aaa"/><rect x="203.6" y="123.8" width="5.6" height="1.2" fill="#1fb52a"/><rect x="186.6" y="127.39999999999999" width="1.8" height="1.8" fill="#b8503a"/><rect x="189.6" y="127.69999999999999" width="5.4" height="1.2" fill="#bbb"/><rect x="197.4" y="127.69999999999999" width="3.6" height="1.2" fill="#aaa"/><rect x="203.6" y="127.69999999999999" width="5.6" height="1.2" fill="#c0281c"/><rect x="186.6" y="131.29999999999998" width="1.8" height="1.8" fill="#3a9a4a"/><rect x="189.6" y="131.6" width="5.4" height="1.2" fill="#bbb"/><rect x="197.4" y="131.6" width="3.6" height="1.2" fill="#aaa"/><rect x="203.6" y="131.6" width="5.6" height="1.2" fill="#1fb52a"/><rect x="172" y="139.8" width="9" height="1.2" fill="#aaa"/><rect x="182" y="139.8" width="5" height="1.2" fill="#c0281c"/><rect x="190" y="139.8" width="9" height="1.2" fill="#aaa"/><rect x="200" y="139.8" width="5" height="1.2" fill="#1fb52a"/><rect x="217.6" y="107.6" width="15" height="1.4" fill="#d8d8d8"/><circle cx="235" cy="108.3" r="0.9" fill="none" stroke="#888" stroke-width="0.3"/><rect x="217.4" y="112" width="3.6" height="1.2" fill="#c0281c"/><rect x="217.4" y="130.6" width="3.4" height="1.2" fill="#1fb52a"/><rect x="219.6" y="121.4" width="1.4" height="1.2" fill="#999"/><path d="M222 113 V134 H256" fill="none" stroke="#333" stroke-width="0.35"/><path d="M222 122 H256" stroke="#2a2a2a" stroke-width="0.3"/><path d="M222 131.6 L224 130.6 L225.4 132.4 L227 131 L228 124 L229 120.6 L230.4 121.6 L231.6 120 L233 121.4 L233.6 131 L235 130.6 L236.6 129.6 L238 126 L239.6 122 L241 120.6 L243 119.4 L244.4 118 L245.6 120.4 L247 122.6 L248.6 123 L250 124.4 L251.4 121 L252.6 117 L254 112.6 L255.4 113" fill="none" stroke="#e8a818" stroke-width="0.75"/><path d="M222 132 L224 131 L225.4 132.6 L227 131.6 L228 125.6 L229.4 122 L231 122.6 L233 122.4 L233.8 131.4 L236.6 130.4 L238 127 L240 123 L243 120.4 L244.4 119.4 L246 121.6 L248.6 124 L250 125 L251.6 122 L253 118 L254.4 113.6" fill="none" stroke="#d8602a" stroke-width="0.55"/><path d="M255.6 112 V134" stroke="#c0281c" stroke-width="0.4"/><rect x="257.4" y="111.4" width="3.6" height="1.2" fill="#aaa"/><rect x="257.4" y="131" width="3.6" height="1.2" fill="#aaa"/><rect x="223.0" y="135.6" width="5" height="1.1" fill="#888"/><rect x="231.4" y="135.6" width="5" height="1.1" fill="#888"/><rect x="239.8" y="135.6" width="5" height="1.1" fill="#888"/><rect x="248.2" y="135.6" width="5" height="1.1" fill="#888"/><rect x="225" y="140.4" width="2.4" height="0.8" fill="#d8602a"/><rect x="228.4" y="140" width="8" height="1.2" fill="#c0281c"/><rect x="241" y="140.4" width="2.4" height="0.8" fill="#e8a818"/><rect x="244.4" y="140" width="8" height="1.2" fill="#e8a818"/><path d="M267.4 14 V144" stroke="#242424" stroke-width="0.4"/><rect x="269" y="20.0" width="0.9" height="0.9" fill="#c0281c"/><rect x="269" y="26.4" width="0.9" height="0.9" fill="#1fb52a"/><rect x="269" y="32.8" width="0.9" height="0.9" fill="#1fb52a"/><rect x="269" y="39.2" width="0.9" height="0.9" fill="#c0281c"/><rect x="269" y="45.6" width="0.9" height="0.9" fill="#1fb52a"/><rect x="269" y="52.0" width="0.9" height="0.9" fill="#1fb52a"/><rect x="269" y="58.400000000000006" width="0.9" height="0.9" fill="#c0281c"/><rect x="269" y="64.80000000000001" width="0.9" height="0.9" fill="#1fb52a"/><rect x="269" y="71.2" width="0.9" height="0.9" fill="#1fb52a"/><rect x="269" y="77.6" width="0.9" height="0.9" fill="#c0281c"/><rect x="269" y="84.0" width="0.9" height="0.9" fill="#1fb52a"/><rect x="269" y="90.4" width="0.9" height="0.9" fill="#1fb52a"/><rect x="269" y="96.80000000000001" width="0.9" height="0.9" fill="#c0281c"/><rect x="269" y="103.2" width="0.9" height="0.9" fill="#1fb52a"/><path d="M138.2 46.1 L111.4 52.3" stroke="#e0401e" stroke-width="0.75"/><path d="M111 52.4 L114.2 50.4 L114.6 52.6 Z" fill="#e0401e"/><text x="4.4" y="3.8" font-size="2.7" fill="#1a1a1a" font-weight="bold" font-family="'Liberation Sans','Noto Sans CJK SC',sans-serif">大单棱镜</text><text x="141.4" y="47.3" font-size="4.7" fill="#e0341e" font-weight="500" font-family="'Liberation Sans','Noto Sans CJK SC',sans-serif">大单棱镜里能看到这两万手单</text></svg>
<svg style="left:559.4px;top:338px" width="271.2" height="148.6" viewBox="0 0 271.2 148.6"><rect width="271.2" height="148.6" fill="#141414"/><rect width="271.2" height="5.2" fill="#edf1f3"/><rect x="1.2" y="1.6" width="2" height="2" fill="#3a6ad0"/><path d="M248.2 2.8 H250.2 M262.2 1.6 L264.2 3.6 M264.2 1.6 L262.2 3.6" stroke="#555" stroke-width="0.4"/><rect x="255.2" y="1.6" width="2" height="2" fill="none" stroke="#555" stroke-width="0.4"/><rect x="3.5" y="8.5" width="31.5" height="5.5" rx="0.6" fill="#1a1a1a" stroke="#2e2e2e" stroke-width="0.4"/><circle cx="6.4" cy="11.2" r="1" fill="none" stroke="#777" stroke-width="0.35"/><rect x="9" y="10.6" width="8" height="1.2" fill="#555"/><rect x="3.8" y="16.6" width="13.8" height="3.8" fill="#c0281c"/><rect x="19.3" y="16.6" width="12.7" height="3.8" fill="#3c3c3c"/><text x="5.6" y="19.4" font-size="2.5" fill="#fbe8e2" font-weight="bold" font-family="'Noto Sans CJK SC',sans-serif">单笔大单</text><text x="20.7" y="19.4" font-size="2.5" fill="#d0d0d0" font-weight="bold" font-family="'Noto Sans CJK SC',sans-serif">逐笔分析</text><rect x="73" y="17.9" width="17" height="1.1" fill="#555"/><rect x="92" y="16.8" width="10" height="3.4" fill="#222" stroke="#444" stroke-width="0.3"/><rect x="93.4" y="17.9" width="4" height="1.2" fill="#ccc"/><path d="M99 18 L100 19.2 L101 18 Z" fill="#ccc"/><text x="5.6" y="24.90" font-size="2.25" fill="#cfcfcf" text-anchor="start" opacity="1" font-weight="bold" font-family="'Liberation Sans','Noto Sans CJK SC',sans-serif">开始时间</text><text x="21.5" y="24.90" font-size="2.25" fill="#cfcfcf" text-anchor="start" opacity="1" font-weight="bold" font-family="'Liberation Sans','Noto Sans CJK SC',sans-serif">成交量</text><text x="36" y="24.90" font-size="2.25" fill="#cfcfcf" text-anchor="start" opacity="1" font-weight="bold" font-family="'Liberation Sans','Noto Sans CJK SC',sans-serif">金额</text><text x="49.3" y="24.90" font-size="2.25" fill="#cfcfcf" text-anchor="start" opacity="1" font-weight="bold" font-family="'Liberation Sans','Noto Sans CJK SC',sans-serif">成交均价</text><text x="59.6" y="24.90" font-size="2.25" fill="#cfcfcf" text-anchor="start" opacity="1" font-weight="bold" font-family="'Liberation Sans','Noto Sans CJK SC',sans-serif">结束时间</text><text x="74.6" y="24.90" font-size="2.25" fill="#cfcfcf" text-anchor="start" opacity="1" font-weight="bold" font-family="'Liberation Sans','Noto Sans CJK SC',sans-serif">综合性质</text><text x="89" y="24.90" font-size="2.25" fill="#cfcfcf" text-anchor="start" opacity="1" font-weight="bold" font-family="'Liberation Sans','Noto Sans CJK SC',sans-serif">成交明细</text><path d="M70 23.6 L70.8 24.6 L71.6 23.6 Z M84.4 23.6 L85.4 24.8 L86.4 23.6 Z" fill="#ddd"/><circle cx="99.6" cy="24" r="0.8" fill="none" stroke="#888" stroke-width="0.3"/><rect x="89.2" y="27.4" width="16.8" height="0.5" fill="#888"/><text x="97.5" y="29.40" font-size="1.9" fill="#aaa" text-anchor="middle" opacity="1" font-weight="bold" font-family="'Liberation Sans','Noto Sans CJK SC',sans-serif">6笔</text><g opacity=".42"><rect x="6" y="32.55" width="7.6" height="1.5" fill="#d6d6d6"/><rect x="22.15" y="32.55" width="6.25" height="1.5" fill="#c22a1c"/><rect x="37.00" y="32.55" width="5.20" height="1.5" fill="#c22a1c"/><rect x="51.4" y="32.55" width="4.6" height="1.5" fill="#c0281c"/><rect x="60.1" y="32.55" width="7.6" height="1.5" fill="#d0d0d0"/><rect x="76.4" y="32.40" width="7" height="1.8" fill="#c22a1c"/><rect x="95.6" y="33.10" width="3.8" height="1.3" fill="#e4e4e4"/></g><text x="6" y="34.15" font-size="2.45" fill="#d8d8d8" text-anchor="start" opacity="1" font-weight="bold" font-family="'Liberation Sans','Noto Sans CJK SC',sans-serif">10:08:24</text><text x="28.4" y="34.15" font-size="2.45" fill="#c22a1c" text-anchor="end" opacity="1" font-weight="bold" font-family="'Liberation Sans','Noto Sans CJK SC',sans-serif">1749手</text><text x="42.2" y="34.15" font-size="2.45" fill="#c22a1c" text-anchor="end" opacity="1" font-weight="bold" font-family="'Liberation Sans','Noto Sans CJK SC',sans-serif">173万</text><text x="56" y="34.15" font-size="2.45" fill="#c22a1c" text-anchor="end" opacity="1" font-weight="bold" font-family="'Liberation Sans','Noto Sans CJK SC',sans-serif">9.90</text><text x="60.1" y="34.15" font-size="2.45" fill="#d8d8d8" text-anchor="start" opacity="1" font-weight="bold" font-family="'Liberation Sans','Noto Sans CJK SC',sans-serif">10:08:24</text><text x="76.4" y="34.20" font-size="2.35" fill="#c22a1c" text-anchor="start" opacity="1" font-weight="bold" font-family="'Liberation Sans','Noto Sans CJK SC',sans-serif">被动买</text><rect x="89.2" y="31.20" width="16.8" height="1.35" rx="0.4" fill="#c83220"/><text x="97.5" y="34.40" font-size="1.95" fill="#dcdcdc" text-anchor="middle" opacity="1" font-weight="bold" font-family="'Liberation Sans','Noto Sans CJK SC',sans-serif">8笔</text><g opacity=".42"><rect x="6" y="39.47" width="7.6" height="1.5" fill="#d6d6d6"/><rect x="22.15" y="39.47" width="6.25" height="1.5" fill="#c22a1c"/><rect x="37.00" y="39.47" width="5.20" height="1.5" fill="#c22a1c"/><rect x="51.4" y="39.47" width="4.6" height="1.5" fill="#c0281c"/><rect x="60.1" y="39.47" width="7.6" height="1.5" fill="#d0d0d0"/><rect x="76.4" y="39.32" width="7" height="1.8" fill="#c22a1c"/><rect x="95.6" y="40.02" width="3.8" height="1.3" fill="#e4e4e4"/></g><text x="6" y="41.07" font-size="2.45" fill="#d8d8d8" text-anchor="start" opacity="1" font-weight="bold" font-family="'Liberation Sans','Noto Sans CJK SC',sans-serif">10:08:37</text><text x="28.4" y="41.07" font-size="2.45" fill="#c22a1c" text-anchor="end" opacity="1" font-weight="bold" font-family="'Liberation Sans','Noto Sans CJK SC',sans-serif">1841手</text><text x="42.2" y="41.07" font-size="2.45" fill="#c22a1c" text-anchor="end" opacity="1" font-weight="bold" font-family="'Liberation Sans','Noto Sans CJK SC',sans-serif">182万</text><text x="56" y="41.07" font-size="2.45" fill="#c22a1c" text-anchor="end" opacity="1" font-weight="bold" font-family="'Liberation Sans','Noto Sans CJK SC',sans-serif">9.90</text><text x="60.1" y="41.07" font-size="2.45" fill="#d8d8d8" text-anchor="start" opacity="1" font-weight="bold" font-family="'Liberation Sans','Noto Sans CJK SC',sans-serif">10:08:38</text><text x="76.4" y="41.12" font-size="2.35" fill="#c22a1c" text-anchor="start" opacity="1" font-weight="bold" font-family="'Liberation Sans','Noto Sans CJK SC',sans-serif">被动买</text><rect x="89.2" y="38.12" width="16.8" height="1.35" rx="0.4" fill="#c83220"/><text x="97.5" y="41.32" font-size="1.95" fill="#dcdcdc" text-anchor="middle" opacity="1" font-weight="bold" font-family="'Liberation Sans','Noto Sans CJK SC',sans-serif">11笔</text><g opacity=".42"><rect x="6" y="46.39" width="7.6" height="1.5" fill="#d6d6d6"/><rect x="22.15" y="46.39" width="6.25" height="1.5" fill="#c22a1c"/><rect x="37.00" y="46.39" width="5.20" height="1.5" fill="#c22a1c"/><rect x="51.4" y="46.39" width="4.6" height="1.5" fill="#c0281c"/><rect x="60.1" y="46.39" width="7.6" height="1.5" fill="#d0d0d0"/><rect x="76.4" y="46.24" width="7" height="1.8" fill="#c22a1c"/><rect x="95.6" y="46.94" width="3.8" height="1.3" fill="#e4e4e4"/></g><text x="6" y="47.99" font-size="2.45" fill="#d8d8d8" text-anchor="start" opacity="1" font-weight="bold" font-family="'Liberation Sans','Noto Sans CJK SC',sans-serif">10:08:37</text><text x="28.4" y="47.99" font-size="2.45" fill="#c22a1c" text-anchor="end" opacity="1" font-weight="bold" font-family="'Liberation Sans','Noto Sans CJK SC',sans-serif">4128手</text><text x="42.2" y="47.99" font-size="2.45" fill="#c22a1c" text-anchor="end" opacity="1" font-weight="bold" font-family="'Liberation Sans','Noto Sans CJK SC',sans-serif">409万</text><text x="56" y="47.99" font-size="2.45" fill="#c22a1c" text-anchor="end" opacity="1" font-weight="bold" font-family="'Liberation Sans','Noto Sans CJK SC',sans-serif">9.90</text><text x="60.1" y="47.99" font-size="2.45" fill="#d8d8d8" text-anchor="start" opacity="1" font-weight="bold" font-family="'Liberation Sans','Noto Sans CJK SC',sans-serif">10:08:37</text><text x="76.4" y="48.04" font-size="2.35" fill="#c22a1c" text-anchor="start" opacity="1" font-weight="bold" font-family="'Liberation Sans','Noto Sans CJK SC',sans-serif">被动买</text><rect x="89.2" y="45.04" width="16.8" height="1.35" rx="0.4" fill="#c83220"/><text x="97.5" y="48.24" font-size="1.95" fill="#dcdcdc" text-anchor="middle" opacity="1" font-weight="bold" font-family="'Liberation Sans','Noto Sans CJK SC',sans-serif">19笔</text><g opacity=".42"><rect x="6" y="53.31" width="7.6" height="1.5" fill="#d6d6d6"/><rect x="22.15" y="53.31" width="6.25" height="1.5" fill="#1fb52a"/><rect x="37.00" y="53.31" width="5.20" height="1.5" fill="#1fb52a"/><rect x="51.4" y="53.31" width="4.6" height="1.5" fill="#c0281c"/><rect x="60.1" y="53.31" width="7.6" height="1.5" fill="#d0d0d0"/><rect x="76.4" y="53.16" width="7" height="1.8" fill="#1fb52a"/><rect x="95.6" y="53.86" width="3.8" height="1.3" fill="#e4e4e4"/></g><text x="6" y="54.91" font-size="2.45" fill="#d8d8d8" text-anchor="start" opacity="1" font-weight="bold" font-family="'Liberation Sans','Noto Sans CJK SC',sans-serif">10:08:37</text><text x="28.4" y="54.91" font-size="2.45" fill="#1fb52a" text-anchor="end" opacity="1" font-weight="bold" font-family="'Liberation Sans','Noto Sans CJK SC',sans-serif">4444手</text><text x="42.2" y="54.91" font-size="2.45" fill="#1fb52a" text-anchor="end" opacity="1" font-weight="bold" font-family="'Liberation Sans','Noto Sans CJK SC',sans-serif">440万</text><text x="56" y="54.91" font-size="2.45" fill="#c22a1c" text-anchor="end" opacity="1" font-weight="bold" font-family="'Liberation Sans','Noto Sans CJK SC',sans-serif">9.90</text><text x="60.1" y="54.91" font-size="2.45" fill="#d8d8d8" text-anchor="start" opacity="1" font-weight="bold" font-family="'Liberation Sans','Noto Sans CJK SC',sans-serif">10:08:37</text><text x="76.4" y="54.96" font-size="2.35" fill="#1fb52a" text-anchor="start" opacity="1" font-weight="bold" font-family="'Liberation Sans','Noto Sans CJK SC',sans-serif">主动卖</text><rect x="89.2" y="51.96" width="16.8" height="1.35" rx="0.4" fill="#29c234"/><text x="97.5" y="55.16" font-size="1.95" fill="#dcdcdc" text-anchor="middle" opacity="1" font-weight="bold" font-family="'Liberation Sans','Noto Sans CJK SC',sans-serif">22笔</text><g opacity=".42"><rect x="6" y="60.23" width="7.6" height="1.5" fill="#d6d6d6"/><rect x="22.15" y="60.23" width="6.25" height="1.5" fill="#c22a1c"/><rect x="37.00" y="60.23" width="5.20" height="1.5" fill="#c22a1c"/><rect x="51.4" y="60.23" width="4.6" height="1.5" fill="#c0281c"/><rect x="60.1" y="60.23" width="7.6" height="1.5" fill="#d0d0d0"/><rect x="76.4" y="60.08" width="7" height="1.8" fill="#c22a1c"/><rect x="95.6" y="60.78" width="3.8" height="1.3" fill="#e4e4e4"/></g><text x="6" y="61.83" font-size="2.45" fill="#d8d8d8" text-anchor="start" opacity="1" font-weight="bold" font-family="'Liberation Sans','Noto Sans CJK SC',sans-serif">10:08:32</text><text x="28.4" y="61.83" font-size="2.45" fill="#c22a1c" text-anchor="end" opacity="1" font-weight="bold" font-family="'Liberation Sans','Noto Sans CJK SC',sans-serif">2216手</text><text x="42.2" y="61.83" font-size="2.45" fill="#c22a1c" text-anchor="end" opacity="1" font-weight="bold" font-family="'Liberation Sans','Noto Sans CJK SC',sans-serif">219万</text><text x="56" y="61.83" font-size="2.45" fill="#c22a1c" text-anchor="end" opacity="1" font-weight="bold" font-family="'Liberation Sans','Noto Sans CJK SC',sans-serif">9.90</text><text x="60.1" y="61.83" font-size="2.45" fill="#d8d8d8" text-anchor="start" opacity="1" font-weight="bold" font-family="'Liberation Sans','Noto Sans CJK SC',sans-serif">10:08:35</text><text x="76.4" y="61.88" font-size="2.35" fill="#c22a1c" text-anchor="start" opacity="1" font-weight="bold" font-family="'Liberation Sans','Noto Sans CJK SC',sans-serif">被动买</text><rect x="89.2" y="58.88" width="16.8" height="1.35" rx="0.4" fill="#c83220"/><text x="97.5" y="62.08" font-size="1.95" fill="#dcdcdc" text-anchor="middle" opacity="1" font-weight="bold" font-family="'Liberation Sans','Noto Sans CJK SC',sans-serif">9笔</text><g opacity=".42"><rect x="6" y="67.15" width="7.6" height="1.5" fill="#d6d6d6"/><rect x="20.90" y="67.15" width="7.50" height="1.5" fill="#c22a1c"/><rect x="35.70" y="67.15" width="6.50" height="1.5" fill="#c22a1c"/><rect x="51.4" y="67.15" width="4.6" height="1.5" fill="#c0281c"/><rect x="60.1" y="67.15" width="7.6" height="1.5" fill="#d0d0d0"/><rect x="76.4" y="67.00" width="7" height="1.8" fill="#c22a1c"/><rect x="95.6" y="67.70" width="3.8" height="1.3" fill="#e4e4e4"/></g><text x="6" y="68.75" font-size="2.45" fill="#d8d8d8" text-anchor="start" opacity="1" font-weight="bold" font-family="'Liberation Sans','Noto Sans CJK SC',sans-serif">10:08:12</text><text x="28.4" y="68.75" font-size="2.45" fill="#c22a1c" text-anchor="end" opacity="1" font-weight="bold" font-family="'Liberation Sans','Noto Sans CJK SC',sans-serif">11246手</text><text x="42.2" y="68.75" font-size="2.45" fill="#c22a1c" text-anchor="end" opacity="1" font-weight="bold" font-family="'Liberation Sans','Noto Sans CJK SC',sans-serif">1113万</text><text x="56" y="68.75" font-size="2.45" fill="#c22a1c" text-anchor="end" opacity="1" font-weight="bold" font-family="'Liberation Sans','Noto Sans CJK SC',sans-serif">9.90</text><text x="60.1" y="68.75" font-size="2.45" fill="#d8d8d8" text-anchor="start" opacity="1" font-weight="bold" font-family="'Liberation Sans','Noto Sans CJK SC',sans-serif">10:08:21</text><text x="76.4" y="68.80" font-size="2.35" fill="#c22a1c" text-anchor="start" opacity="1" font-weight="bold" font-family="'Liberation Sans','Noto Sans CJK SC',sans-serif">被动买</text><rect x="89.2" y="65.80" width="16.8" height="1.35" rx="0.4" fill="#c83220"/><text x="97.5" y="69.00" font-size="1.95" fill="#dcdcdc" text-anchor="middle" opacity="1" font-weight="bold" font-family="'Liberation Sans','Noto Sans CJK SC',sans-serif">31笔</text><g opacity=".42"><rect x="6" y="74.07" width="7.6" height="1.5" fill="#d6d6d6"/><rect x="20.90" y="74.07" width="7.50" height="1.5" fill="#c22a1c"/><rect x="37.00" y="74.07" width="5.20" height="1.5" fill="#c22a1c"/><rect x="51.4" y="74.07" width="4.6" height="1.5" fill="#c0281c"/><rect x="60.1" y="74.07" width="7.6" height="1.5" fill="#d0d0d0"/><rect x="76.4" y="73.92" width="7" height="1.8" fill="#c22a1c"/><rect x="95.6" y="74.62" width="3.8" height="1.3" fill="#e4e4e4"/></g><text x="6" y="75.67" font-size="2.45" fill="#d8d8d8" text-anchor="start" opacity="1" font-weight="bold" font-family="'Liberation Sans','Noto Sans CJK SC',sans-serif">10:07:32</text><text x="28.4" y="75.67" font-size="2.45" fill="#c22a1c" text-anchor="end" opacity="1" font-weight="bold" font-family="'Liberation Sans','Noto Sans CJK SC',sans-serif">10016手</text><text x="42.2" y="75.67" font-size="2.45" fill="#c22a1c" text-anchor="end" opacity="1" font-weight="bold" font-family="'Liberation Sans','Noto Sans CJK SC',sans-serif">991万</text><text x="56" y="75.67" font-size="2.45" fill="#c22a1c" text-anchor="end" opacity="1" font-weight="bold" font-family="'Liberation Sans','Noto Sans CJK SC',sans-serif">9.90</text><text x="60.1" y="75.67" font-size="2.45" fill="#d8d8d8" text-anchor="start" opacity="1" font-weight="bold" font-family="'Liberation Sans','Noto Sans CJK SC',sans-serif">10:08:12</text><text x="76.4" y="75.72" font-size="2.35" fill="#c22a1c" text-anchor="start" opacity="1" font-weight="bold" font-family="'Liberation Sans','Noto Sans CJK SC',sans-serif">被动买</text><rect x="89.2" y="72.72" width="16.8" height="1.35" rx="0.4" fill="#c83220"/><text x="97.5" y="75.92" font-size="1.95" fill="#dcdcdc" text-anchor="middle" opacity="1" font-weight="bold" font-family="'Liberation Sans','Noto Sans CJK SC',sans-serif">269笔</text><g opacity=".42"><rect x="6" y="80.99" width="7.6" height="1.5" fill="#d6d6d6"/><rect x="20.90" y="80.99" width="7.50" height="1.5" fill="#c22a1c"/><rect x="37.00" y="80.99" width="5.20" height="1.5" fill="#c22a1c"/><rect x="51.4" y="80.99" width="4.6" height="1.5" fill="#c0281c"/><rect x="60.1" y="80.99" width="7.6" height="1.5" fill="#d0d0d0"/><rect x="76.4" y="80.84" width="7" height="1.8" fill="#c22a1c"/><rect x="95.6" y="81.54" width="3.8" height="1.3" fill="#e4e4e4"/></g><text x="6" y="82.59" font-size="2.45" fill="#d8d8d8" text-anchor="start" opacity="1" font-weight="bold" font-family="'Liberation Sans','Noto Sans CJK SC',sans-serif">10:06:34</text><text x="28.4" y="82.59" font-size="2.45" fill="#c22a1c" text-anchor="end" opacity="1" font-weight="bold" font-family="'Liberation Sans','Noto Sans CJK SC',sans-serif">10016手</text><text x="42.2" y="82.59" font-size="2.45" fill="#c22a1c" text-anchor="end" opacity="1" font-weight="bold" font-family="'Liberation Sans','Noto Sans CJK SC',sans-serif">991万</text><text x="56" y="82.59" font-size="2.45" fill="#c22a1c" text-anchor="end" opacity="1" font-weight="bold" font-family="'Liberation Sans','Noto Sans CJK SC',sans-serif">9.90</text><text x="60.1" y="82.59" font-size="2.45" fill="#d8d8d8" text-anchor="start" opacity="1" font-weight="bold" font-family="'Liberation Sans','Noto Sans CJK SC',sans-serif">10:07:12</text><text x="76.4" y="82.64" font-size="2.35" fill="#c22a1c" text-anchor="start" opacity="1" font-weight="bold" font-family="'Liberation Sans','Noto Sans CJK SC',sans-serif">被动买</text><rect x="89.2" y="79.64" width="16.8" height="1.35" rx="0.4" fill="#c83220"/><text x="97.5" y="82.84" font-size="1.95" fill="#dcdcdc" text-anchor="middle" opacity="1" font-weight="bold" font-family="'Liberation Sans','Noto Sans CJK SC',sans-serif">306笔</text><g opacity=".42"><rect x="6" y="87.91" width="7.6" height="1.5" fill="#d6d6d6"/><rect x="22.15" y="87.91" width="6.25" height="1.5" fill="#c22a1c"/><rect x="37.00" y="87.91" width="5.20" height="1.5" fill="#c22a1c"/><rect x="51.4" y="87.91" width="4.6" height="1.5" fill="#c0281c"/><rect x="60.1" y="87.91" width="7.6" height="1.5" fill="#d0d0d0"/><rect x="76.4" y="87.76" width="7" height="1.8" fill="#c22a1c"/><rect x="95.6" y="88.46" width="3.8" height="1.3" fill="#e4e4e4"/></g><text x="6" y="89.51" font-size="2.45" fill="#d8d8d8" text-anchor="start" opacity="1" font-weight="bold" font-family="'Liberation Sans','Noto Sans CJK SC',sans-serif">10:06:38</text><text x="28.4" y="89.51" font-size="2.45" fill="#c22a1c" text-anchor="end" opacity="1" font-weight="bold" font-family="'Liberation Sans','Noto Sans CJK SC',sans-serif">2117手</text><text x="42.2" y="89.51" font-size="2.45" fill="#c22a1c" text-anchor="end" opacity="1" font-weight="bold" font-family="'Liberation Sans','Noto Sans CJK SC',sans-serif">209万</text><text x="56" y="89.51" font-size="2.45" fill="#c22a1c" text-anchor="end" opacity="1" font-weight="bold" font-family="'Liberation Sans','Noto Sans CJK SC',sans-serif">9.90</text><text x="60.1" y="89.51" font-size="2.45" fill="#d8d8d8" text-anchor="start" opacity="1" font-weight="bold" font-family="'Liberation Sans','Noto Sans CJK SC',sans-serif">10:06:47</text><text x="76.4" y="89.56" font-size="2.35" fill="#c22a1c" text-anchor="start" opacity="1" font-weight="bold" font-family="'Liberation Sans','Noto Sans CJK SC',sans-serif">被动买</text><rect x="89.2" y="86.56" width="16.8" height="1.35" rx="0.4" fill="#c83220"/><text x="97.5" y="89.76" font-size="1.95" fill="#dcdcdc" text-anchor="middle" opacity="1" font-weight="bold" font-family="'Liberation Sans','Noto Sans CJK SC',sans-serif">18笔</text><g opacity=".42"><rect x="6" y="94.83" width="7.6" height="1.5" fill="#d6d6d6"/><rect x="22.15" y="94.83" width="6.25" height="1.5" fill="#c22a1c"/><rect x="37.00" y="94.83" width="5.20" height="1.5" fill="#c22a1c"/><rect x="51.4" y="94.83" width="4.6" height="1.5" fill="#c0281c"/><rect x="60.1" y="94.83" width="7.6" height="1.5" fill="#d0d0d0"/><rect x="76.4" y="94.68" width="7" height="1.8" fill="#c22a1c"/><rect x="95.6" y="95.38" width="3.8" height="1.3" fill="#e4e4e4"/></g><text x="6" y="96.43" font-size="2.45" fill="#d8d8d8" text-anchor="start" opacity="1" font-weight="bold" font-family="'Liberation Sans','Noto Sans CJK SC',sans-serif">10:06:52</text><text x="28.4" y="96.43" font-size="2.45" fill="#c22a1c" text-anchor="end" opacity="1" font-weight="bold" font-family="'Liberation Sans','Noto Sans CJK SC',sans-serif">4198手</text><text x="42.2" y="96.43" font-size="2.45" fill="#c22a1c" text-anchor="end" opacity="1" font-weight="bold" font-family="'Liberation Sans','Noto Sans CJK SC',sans-serif">415万</text><text x="56" y="96.43" font-size="2.45" fill="#c22a1c" text-anchor="end" opacity="1" font-weight="bold" font-family="'Liberation Sans','Noto Sans CJK SC',sans-serif">9.90</text><text x="60.1" y="96.43" font-size="2.45" fill="#d8d8d8" text-anchor="start" opacity="1" font-weight="bold" font-family="'Liberation Sans','Noto Sans CJK SC',sans-serif">10:06:55</text><text x="76.4" y="96.48" font-size="2.35" fill="#c22a1c" text-anchor="start" opacity="1" font-weight="bold" font-family="'Liberation Sans','Noto Sans CJK SC',sans-serif">被动买</text><rect x="89.2" y="93.48" width="16.8" height="1.35" rx="0.4" fill="#c83220"/><text x="97.5" y="96.68" font-size="1.95" fill="#dcdcdc" text-anchor="middle" opacity="1" font-weight="bold" font-family="'Liberation Sans','Noto Sans CJK SC',sans-serif">27笔</text><g opacity=".42"><rect x="6" y="101.75" width="7.6" height="1.5" fill="#d6d6d6"/><rect x="22.15" y="101.75" width="6.25" height="1.5" fill="#c22a1c"/><rect x="37.00" y="101.75" width="5.20" height="1.5" fill="#c22a1c"/><rect x="51.4" y="101.75" width="4.6" height="1.5" fill="#c0281c"/><rect x="60.1" y="101.75" width="7.6" height="1.5" fill="#d0d0d0"/><rect x="76.4" y="101.60" width="7" height="1.8" fill="#c22a1c"/><rect x="95.6" y="102.30" width="3.8" height="1.3" fill="#e4e4e4"/></g><text x="6" y="103.35" font-size="2.45" fill="#d8d8d8" text-anchor="start" opacity="1" font-weight="bold" font-family="'Liberation Sans','Noto Sans CJK SC',sans-serif">10:06:36</text><text x="28.4" y="103.35" font-size="2.45" fill="#c22a1c" text-anchor="end" opacity="1" font-weight="bold" font-family="'Liberation Sans','Noto Sans CJK SC',sans-serif">1807手</text><text x="42.2" y="103.35" font-size="2.45" fill="#c22a1c" text-anchor="end" opacity="1" font-weight="bold" font-family="'Liberation Sans','Noto Sans CJK SC',sans-serif">178万</text><text x="56" y="103.35" font-size="2.45" fill="#c22a1c" text-anchor="end" opacity="1" font-weight="bold" font-family="'Liberation Sans','Noto Sans CJK SC',sans-serif">9.90</text><text x="60.1" y="103.35" font-size="2.45" fill="#d8d8d8" text-anchor="start" opacity="1" font-weight="bold" font-family="'Liberation Sans','Noto Sans CJK SC',sans-serif">10:06:38</text><text x="76.4" y="103.40" font-size="2.35" fill="#c22a1c" text-anchor="start" opacity="1" font-weight="bold" font-family="'Liberation Sans','Noto Sans CJK SC',sans-serif">被动买</text><rect x="89.2" y="100.40" width="16.8" height="1.35" rx="0.4" fill="#c83220"/><text x="97.5" y="103.60" font-size="1.95" fill="#dcdcdc" text-anchor="middle" opacity="1" font-weight="bold" font-family="'Liberation Sans','Noto Sans CJK SC',sans-serif">14笔</text><g opacity=".42"><rect x="6" y="108.67" width="7.6" height="1.5" fill="#d6d6d6"/><rect x="22.15" y="108.67" width="6.25" height="1.5" fill="#c22a1c"/><rect x="37.00" y="108.67" width="5.20" height="1.5" fill="#c22a1c"/><rect x="51.4" y="108.67" width="4.6" height="1.5" fill="#c0281c"/><rect x="60.1" y="108.67" width="7.6" height="1.5" fill="#d0d0d0"/><rect x="76.4" y="108.52" width="7" height="1.8" fill="#c22a1c"/><rect x="95.6" y="109.22" width="3.8" height="1.3" fill="#e4e4e4"/></g><text x="6" y="110.27" font-size="2.45" fill="#d8d8d8" text-anchor="start" opacity="1" font-weight="bold" font-family="'Liberation Sans','Noto Sans CJK SC',sans-serif">10:06:11</text><text x="28.4" y="110.27" font-size="2.45" fill="#c22a1c" text-anchor="end" opacity="1" font-weight="bold" font-family="'Liberation Sans','Noto Sans CJK SC',sans-serif">8830手</text><text x="42.2" y="110.27" font-size="2.45" fill="#c22a1c" text-anchor="end" opacity="1" font-weight="bold" font-family="'Liberation Sans','Noto Sans CJK SC',sans-serif">874万</text><text x="56" y="110.27" font-size="2.45" fill="#c22a1c" text-anchor="end" opacity="1" font-weight="bold" font-family="'Liberation Sans','Noto Sans CJK SC',sans-serif">9.89</text><text x="60.1" y="110.27" font-size="2.45" fill="#d8d8d8" text-anchor="start" opacity="1" font-weight="bold" font-family="'Liberation Sans','Noto Sans CJK SC',sans-serif">10:06:12</text><text x="76.4" y="110.32" font-size="2.35" fill="#c22a1c" text-anchor="start" opacity="1" font-weight="bold" font-family="'Liberation Sans','Noto Sans CJK SC',sans-serif">被动买</text><rect x="89.2" y="107.32" width="16.8" height="1.35" rx="0.4" fill="#c83220"/><text x="97.5" y="110.52" font-size="1.95" fill="#dcdcdc" text-anchor="middle" opacity="1" font-weight="bold" font-family="'Liberation Sans','Noto Sans CJK SC',sans-serif">85笔</text><g opacity=".42"><rect x="6" y="115.59" width="7.6" height="1.5" fill="#d6d6d6"/><rect x="22.15" y="115.59" width="6.25" height="1.5" fill="#1fb52a"/><rect x="37.00" y="115.59" width="5.20" height="1.5" fill="#1fb52a"/><rect x="51.4" y="115.59" width="4.6" height="1.5" fill="#c0281c"/><rect x="60.1" y="115.59" width="7.6" height="1.5" fill="#d0d0d0"/><rect x="76.4" y="115.44" width="7" height="1.8" fill="#1fb52a"/><rect x="95.6" y="116.14" width="3.8" height="1.3" fill="#e4e4e4"/></g><text x="6" y="117.19" font-size="2.45" fill="#d8d8d8" text-anchor="start" opacity="1" font-weight="bold" font-family="'Liberation Sans','Noto Sans CJK SC',sans-serif">10:06:11</text><text x="28.4" y="117.19" font-size="2.45" fill="#1fb52a" text-anchor="end" opacity="1" font-weight="bold" font-family="'Liberation Sans','Noto Sans CJK SC',sans-serif">1842手</text><text x="42.2" y="117.19" font-size="2.45" fill="#1fb52a" text-anchor="end" opacity="1" font-weight="bold" font-family="'Liberation Sans','Noto Sans CJK SC',sans-serif">182万</text><text x="56" y="117.19" font-size="2.45" fill="#c22a1c" text-anchor="end" opacity="1" font-weight="bold" font-family="'Liberation Sans','Noto Sans CJK SC',sans-serif">9.90</text><text x="60.1" y="117.19" font-size="2.45" fill="#d8d8d8" text-anchor="start" opacity="1" font-weight="bold" font-family="'Liberation Sans','Noto Sans CJK SC',sans-serif">10:06:11</text><text x="76.4" y="117.24" font-size="2.35" fill="#1fb52a" text-anchor="start" opacity="1" font-weight="bold" font-family="'Liberation Sans','Noto Sans CJK SC',sans-serif">主动卖</text><rect x="89.2" y="114.24" width="16.8" height="1.35" rx="0.4" fill="#29c234"/><text x="97.5" y="117.44" font-size="1.95" fill="#dcdcdc" text-anchor="middle" opacity="1" font-weight="bold" font-family="'Liberation Sans','Noto Sans CJK SC',sans-serif">12笔</text><g opacity=".42"><rect x="6" y="122.51" width="7.6" height="1.5" fill="#d6d6d6"/><rect x="22.15" y="122.51" width="6.25" height="1.5" fill="#1fb52a"/><rect x="37.00" y="122.51" width="5.20" height="1.5" fill="#1fb52a"/><rect x="51.4" y="122.51" width="4.6" height="1.5" fill="#c0281c"/><rect x="60.1" y="122.51" width="7.6" height="1.5" fill="#d0d0d0"/><rect x="76.4" y="122.36" width="7" height="1.8" fill="#1fb52a"/><rect x="95.6" y="123.06" width="3.8" height="1.3" fill="#e4e4e4"/></g><text x="6" y="124.11" font-size="2.45" fill="#d8d8d8" text-anchor="start" opacity="1" font-weight="bold" font-family="'Liberation Sans','Noto Sans CJK SC',sans-serif">10:05:44</text><text x="28.4" y="124.11" font-size="2.45" fill="#1fb52a" text-anchor="end" opacity="1" font-weight="bold" font-family="'Liberation Sans','Noto Sans CJK SC',sans-serif">4004手</text><text x="42.2" y="124.11" font-size="2.45" fill="#1fb52a" text-anchor="end" opacity="1" font-weight="bold" font-family="'Liberation Sans','Noto Sans CJK SC',sans-serif">396万</text><text x="56" y="124.11" font-size="2.45" fill="#c22a1c" text-anchor="end" opacity="1" font-weight="bold" font-family="'Liberation Sans','Noto Sans CJK SC',sans-serif">9.88</text><text x="60.1" y="124.11" font-size="2.45" fill="#d8d8d8" text-anchor="start" opacity="1" font-weight="bold" font-family="'Liberation Sans','Noto Sans CJK SC',sans-serif">10:05:46</text><text x="76.4" y="124.16" font-size="2.35" fill="#1fb52a" text-anchor="start" opacity="1" font-weight="bold" font-family="'Liberation Sans','Noto Sans CJK SC',sans-serif">主动卖</text><rect x="89.2" y="121.16" width="16.8" height="1.35" rx="0.4" fill="#29c234"/><text x="97.5" y="124.36" font-size="1.95" fill="#dcdcdc" text-anchor="middle" opacity="1" font-weight="bold" font-family="'Liberation Sans','Noto Sans CJK SC',sans-serif">33笔</text><g opacity=".42"><rect x="6" y="129.43" width="7.6" height="1.5" fill="#d6d6d6"/><rect x="22.15" y="129.43" width="6.25" height="1.5" fill="#1fb52a"/><rect x="37.00" y="129.43" width="5.20" height="1.5" fill="#1fb52a"/><rect x="51.4" y="129.43" width="4.6" height="1.5" fill="#c0281c"/><rect x="60.1" y="129.43" width="7.6" height="1.5" fill="#d0d0d0"/><rect x="76.4" y="129.28" width="7" height="1.8" fill="#1fb52a"/><rect x="95.6" y="129.98" width="3.8" height="1.3" fill="#e4e4e4"/></g><text x="6" y="131.03" font-size="2.45" fill="#d8d8d8" text-anchor="start" opacity="1" font-weight="bold" font-family="'Liberation Sans','Noto Sans CJK SC',sans-serif">10:04:56</text><text x="28.4" y="131.03" font-size="2.45" fill="#1fb52a" text-anchor="end" opacity="1" font-weight="bold" font-family="'Liberation Sans','Noto Sans CJK SC',sans-serif">2019手</text><text x="42.2" y="131.03" font-size="2.45" fill="#1fb52a" text-anchor="end" opacity="1" font-weight="bold" font-family="'Liberation Sans','Noto Sans CJK SC',sans-serif">199万</text><text x="56" y="131.03" font-size="2.45" fill="#c22a1c" text-anchor="end" opacity="1" font-weight="bold" font-family="'Liberation Sans','Noto Sans CJK SC',sans-serif">9.86</text><text x="60.1" y="131.03" font-size="2.45" fill="#d8d8d8" text-anchor="start" opacity="1" font-weight="bold" font-family="'Liberation Sans','Noto Sans CJK SC',sans-serif">10:04:58</text><text x="76.4" y="131.08" font-size="2.35" fill="#1fb52a" text-anchor="start" opacity="1" font-weight="bold" font-family="'Liberation Sans','Noto Sans CJK SC',sans-serif">主动卖</text><rect x="89.2" y="128.08" width="16.8" height="1.35" rx="0.4" fill="#29c234"/><text x="97.5" y="131.28" font-size="1.95" fill="#dcdcdc" text-anchor="middle" opacity="1" font-weight="bold" font-family="'Liberation Sans','Noto Sans CJK SC',sans-serif">21笔</text><g opacity=".42"><rect x="6" y="136.35" width="7.6" height="1.5" fill="#d6d6d6"/><rect x="22.15" y="136.35" width="6.25" height="1.5" fill="#c22a1c"/><rect x="37.00" y="136.35" width="5.20" height="1.5" fill="#c22a1c"/><rect x="51.4" y="136.35" width="4.6" height="1.5" fill="#c0281c"/><rect x="60.1" y="136.35" width="7.6" height="1.5" fill="#d0d0d0"/><rect x="76.4" y="136.20" width="7" height="1.8" fill="#c22a1c"/><rect x="95.6" y="136.90" width="3.8" height="1.3" fill="#e4e4e4"/></g><text x="6" y="137.95" font-size="2.45" fill="#d8d8d8" text-anchor="start" opacity="1" font-weight="bold" font-family="'Liberation Sans','Noto Sans CJK SC',sans-serif">10:04:48</text><text x="28.4" y="137.95" font-size="2.45" fill="#c22a1c" text-anchor="end" opacity="1" font-weight="bold" font-family="'Liberation Sans','Noto Sans CJK SC',sans-serif">1977手</text><text x="42.2" y="137.95" font-size="2.45" fill="#c22a1c" text-anchor="end" opacity="1" font-weight="bold" font-family="'Liberation Sans','Noto Sans CJK SC',sans-serif">195万</text><text x="56" y="137.95" font-size="2.45" fill="#c22a1c" text-anchor="end" opacity="1" font-weight="bold" font-family="'Liberation Sans','Noto Sans CJK SC',sans-serif">9.85</text><text x="60.1" y="137.95" font-size="2.45" fill="#d8d8d8" text-anchor="start" opacity="1" font-weight="bold" font-family="'Liberation Sans','Noto Sans CJK SC',sans-serif">10:04:49</text><text x="76.4" y="138.00" font-size="2.35" fill="#c22a1c" text-anchor="start" opacity="1" font-weight="bold" font-family="'Liberation Sans','Noto Sans CJK SC',sans-serif">被动买</text><rect x="89.2" y="135.00" width="16.8" height="1.35" rx="0.4" fill="#c83220"/><text x="97.5" y="138.20" font-size="1.95" fill="#dcdcdc" text-anchor="middle" opacity="1" font-weight="bold" font-family="'Liberation Sans','Noto Sans CJK SC',sans-serif">17笔</text><rect x="3.4" y="70.8" width="104.6" height="14.5" fill="none" stroke="#a83228" stroke-width="0.55"/><rect x="108" y="89" width="0.7" height="23" fill="#5a5a5a"/><rect x="5" y="142.79999999999998" width="14.8" height="3.8" rx="0.5" fill="#3a3a3a"/><rect x="6.4" y="144.1" width="9" height="1.2" fill="#bbb"/><rect x="96" y="10.6" width="12" height="1.3" fill="#2a7ad0"/><rect x="110" y="10.4" width="9" height="1.6" fill="#eee"/><rect x="120.4" y="10.6" width="7" height="1.3" fill="#aaa"/><rect x="129" y="10.6" width="12" height="1.3" fill="#c0281c"/><rect x="144" y="10.6" width="10" height="1.3" fill="#aaa"/><rect x="247" y="10.6" width="8" height="1.3" fill="#bbb"/><rect x="257" y="10.6" width="11" height="1.2" fill="#777"/><path d="M122.7 17 V65.2 H256.2 V17" fill="none" stroke="#2c2c2c" stroke-width="0.4"/><path d="M122.7 20 H256.2" stroke="#242424" stroke-width="0.35"/><path d="M122.7 29.5 H256.2" stroke="#242424" stroke-width="0.35"/><path d="M122.7 38.5 H256.2" stroke="#242424" stroke-width="0.35"/><path d="M122.7 47.5 H256.2" stroke="#242424" stroke-width="0.35"/><path d="M122.7 56.5 H256.2" stroke="#242424" stroke-width="0.35"/><path d="M139.4 18 V65.2" stroke="#202020" stroke-width="0.3"/><path d="M156.1 18 V65.2" stroke="#202020" stroke-width="0.3"/><path d="M172.8 18 V65.2" stroke="#202020" stroke-width="0.3"/><path d="M189.4 18 V65.2" stroke="#202020" stroke-width="0.3"/><path d="M206.1 18 V65.2" stroke="#202020" stroke-width="0.3"/><path d="M222.8 18 V65.2" stroke="#202020" stroke-width="0.3"/><path d="M239.5 18 V65.2" stroke="#202020" stroke-width="0.3"/><rect x="115.6" y="19.6" width="4.6" height="1.2" fill="#c0281c"/><rect x="115.6" y="28.6" width="4.6" height="1.2" fill="#c0281c"/><rect x="115.6" y="37.8" width="4.6" height="1.2" fill="#aaa"/><rect x="115.6" y="46.8" width="4.6" height="1.2" fill="#1fb52a"/><rect x="115.6" y="56" width="4.6" height="1.2" fill="#1fb52a"/><rect x="257.4" y="17.6" width="8" height="1.2" fill="#c0281c"/><rect x="257.4" y="27.2" width="6" height="1.2" fill="#c0281c"/><rect x="257.4" y="36" width="5" height="1.2" fill="#999"/><rect x="257.4" y="46" width="6.4" height="1.2" fill="#1fb52a"/><rect x="257.4" y="55.6" width="7.6" height="1.2" fill="#1fb52a"/><path d="M122.7 39 L124 34 L124.8 31 L126 29.6 L134 29 L136 28.6 L136.6 20.4 L144 20.2 L145 23 L146 24.6 L152 24.4 L158 24.8 L160 23 L161 20.4 L256.2 20.6" fill="none" stroke="#bdbdbd" stroke-width="0.55"/><path d="M122.7 39 L125 33 L128 30 L136 28.6 L140 25.6 L150 24.8 L162 24.4 L256.2 24.2" fill="none" stroke="#c89a20" stroke-width="0.5"/><circle cx="124.2" cy="35.4" r="0.95" fill="#30c040"/><circle cx="125.4" cy="30.6" r="0.95" fill="#e8462a"/><circle cx="128" cy="29.6" r="0.95" fill="#30c040"/><circle cx="131" cy="29.2" r="0.95" fill="#30c040"/><circle cx="134" cy="29" r="0.95" fill="#e8462a"/><circle cx="136.4" cy="28.4" r="0.95" fill="#e8462a"/><circle cx="137.0" cy="20.3" r="0.95" fill="#e8462a"/><circle cx="138.2" cy="20.3" r="0.95" fill="#e8462a"/><circle cx="139.4" cy="20.3" r="0.95" fill="#e8462a"/><circle cx="140.6" cy="20.3" r="0.95" fill="#e8462a"/><circle cx="141.8" cy="20.3" r="0.95" fill="#e8462a"/><circle cx="143.0" cy="20.3" r="0.95" fill="#e8462a"/><circle cx="146" cy="24.4" r="0.95" fill="#30c040"/><circle cx="149" cy="24.4" r="0.95" fill="#e0b030"/><circle cx="155" cy="24.7" r="0.95" fill="#e8462a"/><circle cx="159.4" cy="23.4" r="0.95" fill="#e8462a"/><circle cx="160.8" cy="21" r="0.95" fill="#e8462a"/><circle cx="163" cy="20.5" r="0.95" fill="#e8462a"/><circle cx="165" cy="20.5" r="0.95" fill="#e8462a"/><circle cx="167" cy="20.5" r="0.95" fill="#e8462a"/><circle cx="170" cy="20.5" r="0.95" fill="#e8462a"/><circle cx="176" cy="20.5" r="0.95" fill="#e8462a"/><circle cx="181" cy="20.5" r="0.95" fill="#e8462a"/><circle cx="186" cy="20.5" r="0.95" fill="#e8462a"/><circle cx="190" cy="20.5" r="0.95" fill="#e8462a"/><circle cx="195" cy="20.5" r="0.95" fill="#e8462a"/><circle cx="201" cy="20.5" r="0.95" fill="#e8462a"/><circle cx="207" cy="20.5" r="0.95" fill="#e8462a"/><circle cx="212" cy="20.5" r="0.95" fill="#e8462a"/><circle cx="224" cy="20.5" r="0.95" fill="#e8462a"/><circle cx="236" cy="20.5" r="0.95" fill="#e8462a"/><circle cx="243" cy="20.5" r="0.95" fill="#e8462a"/><circle cx="250" cy="20.5" r="0.95" fill="#e8462a"/><circle cx="253" cy="20.5" r="0.95" fill="#e8462a"/><circle cx="255.4" cy="20.5" r="0.95" fill="#e8462a"/><circle cx="172" cy="20.5" r="0.95" fill="#30c040"/><circle cx="178" cy="20.5" r="0.95" fill="#30c040"/><circle cx="188" cy="20.5" r="0.95" fill="#30c040"/><circle cx="198" cy="20.5" r="0.95" fill="#e0b030"/><circle cx="214" cy="20.5" r="0.95" fill="#30c040"/><circle cx="246" cy="20.5" r="0.95" fill="#e0b030"/><path d="M122.7 64.60000000000001 H256.2" stroke="#7a2018" stroke-width="0.45"/><path d="M124 65 V62.6 M125 65 V63.4 M136.4 65 V58 M137.4 65 V61 M139 65 V63 M144 65 V61.6 M146 65 V63.4 M160.8 65 V57.4 M162 65 V63" stroke="#707070" stroke-width="0.45"/><path d="M126 65 V63.8 M141 65 V63.6 M150 65 V64 M170 65 V64.2 M190 65 V64.2" stroke="#a03020" stroke-width="0.4"/><rect x="120.7" y="66.6" width="4" height="1" fill="#666"/><rect x="137.4" y="66.6" width="4" height="1" fill="#666"/><rect x="154.1" y="66.6" width="4" height="1" fill="#666"/><rect x="170.8" y="66.6" width="4" height="1" fill="#666"/><rect x="187.4" y="66.6" width="4" height="1" fill="#666"/><rect x="204.1" y="66.6" width="4" height="1" fill="#666"/><rect x="220.8" y="66.6" width="4" height="1" fill="#666"/><rect x="237.5" y="66.6" width="4" height="1" fill="#666"/><rect x="254.2" y="66.6" width="4" height="1" fill="#666"/><rect x="113.6" y="55" width="4" height="1.2" fill="#bbb"/><rect x="113.6" y="58.6" width="3" height="1.1" fill="#888"/><rect x="113.6" y="63" width="2" height="1.1" fill="#888"/><rect x="113.6" y="69.6" width="13" height="1.3" fill="#b4b4b4"/><rect x="244.2" y="70" width="11.6" height="3.8" rx="0.4" fill="#474747"/><rect x="245.6" y="71.3" width="8.8" height="1.2" fill="#ddd"/><path d="M122.7 75.6 V99.6 H256.2 V75.6 Z" fill="none" stroke="#2a2a2a" stroke-width="0.4"/><path d="M122.7 87 H256.2" stroke="#5a1c16" stroke-width="0.45"/><path d="M122.7 81.3 H256.2 M122.7 93.4 H256.2" stroke="#222" stroke-width="0.3"/><path d="M136.2 87 V77 M137.4 87 V82 M138.6 87 V84.6 M144.4 87 V83 M146 87 V85.6 M160.6 87 V79.4" stroke="#d03020" stroke-width="0.55"/><path d="M140 87 V89 M148 87 V88.2" stroke="#1fb52a" stroke-width="0.45"/><rect x="115.4" y="80.6" width="5" height="1.2" fill="#c0281c"/><rect x="119" y="86.4" width="1.4" height="1.2" fill="#999"/><rect x="114.6" y="92.8" width="5.8" height="1.2" fill="#1fb52a"/><rect x="111.2" y="105.6" width="50.8" height="39" fill="#181818" stroke="#222" stroke-width="0.3"/><rect x="163.8" y="105.6" width="50.19999999999999" height="39" fill="#181818" stroke="#222" stroke-width="0.3"/><rect x="216" y="105.6" width="50.39999999999998" height="39" fill="#181818" stroke="#222" stroke-width="0.3"/><rect x="113" y="107.6" width="16" height="1.4" fill="#d8d8d8"/><circle cx="131.6" cy="108.3" r="0.9" fill="none" stroke="#888" stroke-width="0.3"/><rect x="113" y="111.2" width="14" height="1.2" fill="#aaa"/><rect x="129" y="111.2" width="5" height="1.2" fill="#aaa"/><rect x="136" y="111.2" width="10" height="1.2" fill="#aaa"/><rect x="147" y="111.2" width="5" height="1.2" fill="#c0281c"/><rect x="153.4" y="111.2" width="3.6" height="1.2" fill="#aaa"/><rect x="114" y="114.50" width="5" height="1.1" fill="#888"/><rect x="121.6" y="114.60" width="37" height="0.9" fill="#8a8a8a"/><rect x="159.6" y="114.50" width="4.4" height="1.1" fill="#8a8a8a"/><rect x="114" y="117.25" width="5" height="1.1" fill="#888"/><rect x="121.6" y="117.35" width="31" height="0.9" fill="#d03a22"/><rect x="153.6" y="117.25" width="4.4" height="1.1" fill="#8a8a8a"/><rect x="114" y="120.00" width="5" height="1.1" fill="#888"/><rect x="121.6" y="120.10" width="22" height="0.9" fill="#8a8a8a"/><rect x="144.6" y="120.00" width="4.4" height="1.1" fill="#8a8a8a"/><rect x="114" y="122.75" width="5" height="1.1" fill="#888"/><rect x="121.6" y="122.85" width="16" height="0.9" fill="#8a8a8a"/><rect x="138.6" y="122.75" width="4.4" height="1.1" fill="#8a8a8a"/><rect x="114" y="125.50" width="5" height="1.1" fill="#888"/><rect x="121.6" y="125.60" width="11" height="0.9" fill="#8a8a8a"/><rect x="133.6" y="125.50" width="4.4" height="1.1" fill="#8a8a8a"/><rect x="114" y="128.25" width="5" height="1.1" fill="#888"/><rect x="121.6" y="128.35" width="9" height="0.9" fill="#30b83a"/><rect x="131.6" y="128.25" width="4.4" height="1.1" fill="#8a8a8a"/><rect x="114" y="131.00" width="5" height="1.1" fill="#888"/><rect x="121.6" y="131.10" width="8" height="0.9" fill="#8a8a8a"/><rect x="130.6" y="131.00" width="4.4" height="1.1" fill="#8a8a8a"/><rect x="114" y="133.75" width="5" height="1.1" fill="#888"/><rect x="121.6" y="133.85" width="8" height="0.9" fill="#8a8a8a"/><rect x="130.6" y="133.75" width="4.4" height="1.1" fill="#8a8a8a"/><rect x="114" y="136.50" width="5" height="1.1" fill="#888"/><rect x="121.6" y="136.60" width="7" height="0.9" fill="#8a8a8a"/><rect x="129.6" y="136.50" width="4.4" height="1.1" fill="#8a8a8a"/><rect x="118" y="139" width="38" height="0.9" fill="#666"/><rect x="114" y="141.6" width="1.2" height="1.2" fill="#c0281c"/><rect x="116" y="141.6" width="15" height="1.2" fill="#aaa"/><rect x="134" y="141.6" width="1.2" height="1.2" fill="#1fb52a"/><rect x="136" y="141.6" width="15" height="1.2" fill="#aaa"/><rect x="165.6" y="107.6" width="11" height="1.4" fill="#d8d8d8"/><circle cx="179" cy="108.3" r="0.9" fill="none" stroke="#888" stroke-width="0.3"/><rect x="188" y="106.8" width="6.2" height="3.8" fill="#2a80e8"/><rect x="189.4" y="108.1" width="3.4" height="1.2" fill="#dfeaff"/><rect x="196.4" y="108.1" width="2.6" height="1.2" fill="#aaa"/><rect x="202.4" y="108.1" width="2.6" height="1.2" fill="#aaa"/><rect x="208" y="108.1" width="3.6" height="1.2" fill="#aaa"/><circle cx="175.4" cy="125.8" r="7.3" fill="none" stroke="#d83a24" stroke-width="3.4"/><path d="M169.08 122.15 A7.3 7.3 0 0 1 176.67 118.61" fill="none" stroke="#25b838" stroke-width="3.4"/><circle cx="175.4" cy="125.8" r="4.6" fill="#2a2a2a"/><rect x="172.4" y="124.0" width="6" height="1.2" fill="#ddd"/><rect x="172.0" y="126.2" width="6.8" height="1.2" fill="#ddd"/><rect x="192" y="116" width="3" height="1.1" fill="#999"/><rect x="198.6" y="116" width="3" height="1.1" fill="#999"/><rect x="204.4" y="116" width="5" height="1.1" fill="#999"/><rect x="186.6" y="119.6" width="1.8" height="1.8" fill="#d83a24"/><rect x="189.6" y="119.89999999999999" width="5.4" height="1.2" fill="#bbb"/><rect x="197.4" y="119.89999999999999" width="3.6" height="1.2" fill="#aaa"/><rect x="203.6" y="119.89999999999999" width="5.6" height="1.2" fill="#c0281c"/><rect x="186.6" y="123.5" width="1.8" height="1.8" fill="#25b838"/><rect x="189.6" y="123.8" width="5.4" height="1.2" fill="#bbb"/><rect x="197.4" y="123.8" width="3.6" height="1.2" fill="#aaa"/><rect x="203.6" y="123.8" width="5.6" height="1.2" fill="#1fb52a"/><rect x="186.6" y="127.39999999999999" width="1.8" height="1.8" fill="#b8503a"/><rect x="189.6" y="127.69999999999999" width="5.4" height="1.2" fill="#bbb"/><rect x="197.4" y="127.69999999999999" width="3.6" height="1.2" fill="#aaa"/><rect x="203.6" y="127.69999999999999" width="5.6" height="1.2" fill="#c0281c"/><rect x="186.6" y="131.29999999999998" width="1.8" height="1.8" fill="#3a9a4a"/><rect x="189.6" y="131.6" width="5.4" height="1.2" fill="#bbb"/><rect x="197.4" y="131.6" width="3.6" height="1.2" fill="#aaa"/><rect x="203.6" y="131.6" width="5.6" height="1.2" fill="#1fb52a"/><rect x="172" y="139.8" width="9" height="1.2" fill="#aaa"/><rect x="182" y="139.8" width="5" height="1.2" fill="#c0281c"/><rect x="190" y="139.8" width="9" height="1.2" fill="#aaa"/><rect x="200" y="139.8" width="5" height="1.2" fill="#1fb52a"/><rect x="217.6" y="107.6" width="15" height="1.4" fill="#d8d8d8"/><circle cx="235" cy="108.3" r="0.9" fill="none" stroke="#888" stroke-width="0.3"/><rect x="217.4" y="112" width="3.6" height="1.2" fill="#c0281c"/><rect x="217.4" y="130.6" width="3.4" height="1.2" fill="#1fb52a"/><rect x="219.6" y="121.4" width="1.4" height="1.2" fill="#999"/><path d="M222 113 V134 H256" fill="none" stroke="#333" stroke-width="0.35"/><path d="M222 122 H256" stroke="#2a2a2a" stroke-width="0.3"/><path d="M222 131.6 L224 130.6 L225.4 132.4 L227 131 L228 124 L229 120.6 L230.4 121.6 L231.6 120 L233 121.4 L233.6 131 L235 130.6 L236.6 129.6 L238 126 L239.6 122 L241 120.6 L243 119.4 L244.4 118 L245.6 120.4 L247 122.6 L248.6 123 L250 124.4 L251.4 121 L252.6 117 L254 112.6 L255.4 113" fill="none" stroke="#e8a818" stroke-width="0.75"/><path d="M222 132 L224 131 L225.4 132.6 L227 131.6 L228 125.6 L229.4 122 L231 122.6 L233 122.4 L233.8 131.4 L236.6 130.4 L238 127 L240 123 L243 120.4 L244.4 119.4 L246 121.6 L248.6 124 L250 125 L251.6 122 L253 118 L254.4 113.6" fill="none" stroke="#d8602a" stroke-width="0.55"/><path d="M255.6 112 V134" stroke="#c0281c" stroke-width="0.4"/><rect x="257.4" y="111.4" width="3.6" height="1.2" fill="#aaa"/><rect x="257.4" y="131" width="3.6" height="1.2" fill="#aaa"/><rect x="223.0" y="135.6" width="5" height="1.1" fill="#888"/><rect x="231.4" y="135.6" width="5" height="1.1" fill="#888"/><rect x="239.8" y="135.6" width="5" height="1.1" fill="#888"/><rect x="248.2" y="135.6" width="5" height="1.1" fill="#888"/><rect x="225" y="140.4" width="2.4" height="0.8" fill="#d8602a"/><rect x="228.4" y="140" width="8" height="1.2" fill="#c0281c"/><rect x="241" y="140.4" width="2.4" height="0.8" fill="#e8a818"/><rect x="244.4" y="140" width="8" height="1.2" fill="#e8a818"/><path d="M267.4 14 V146.6" stroke="#242424" stroke-width="0.4"/><rect x="269" y="20.0" width="0.9" height="0.9" fill="#c0281c"/><rect x="269" y="26.4" width="0.9" height="0.9" fill="#1fb52a"/><rect x="269" y="32.8" width="0.9" height="0.9" fill="#1fb52a"/><rect x="269" y="39.2" width="0.9" height="0.9" fill="#c0281c"/><rect x="269" y="45.6" width="0.9" height="0.9" fill="#1fb52a"/><rect x="269" y="52.0" width="0.9" height="0.9" fill="#1fb52a"/><rect x="269" y="58.400000000000006" width="0.9" height="0.9" fill="#c0281c"/><rect x="269" y="64.80000000000001" width="0.9" height="0.9" fill="#1fb52a"/><rect x="269" y="71.2" width="0.9" height="0.9" fill="#1fb52a"/><rect x="269" y="77.6" width="0.9" height="0.9" fill="#c0281c"/><rect x="269" y="84.0" width="0.9" height="0.9" fill="#1fb52a"/><rect x="269" y="90.4" width="0.9" height="0.9" fill="#1fb52a"/><rect x="269" y="96.80000000000001" width="0.9" height="0.9" fill="#c0281c"/><rect x="269" y="103.2" width="0.9" height="0.9" fill="#1fb52a"/><rect x="121.4" y="30.6" width="136.4" height="38.2" fill="#242424" opacity=".8"/><path d="M107.8 75.4 L136.4 53.8" stroke="#d8402a" stroke-width="0.7"/><path d="M137 53.2 L135.6 56 L134 54.2 Z" fill="#d8402a"/><text x="4.4" y="3.8" font-size="2.7" fill="#1a1a1a" font-weight="bold" font-family="'Liberation Sans','Noto Sans CJK SC',sans-serif">大单棱镜</text><text x="128.6" y="42.9" font-size="5.05" fill="#e0301e" font-weight="500" font-family="'Liberation Sans','Noto Sans CJK SC',sans-serif">这里能看到，这两万手单被多个比他小的单子吃掉了。</text><text x="128.6" y="49.6" font-size="5.05" fill="#e0301e" font-weight="500" textLength="122" lengthAdjust="spacingAndGlyphs" font-family="'Liberation Sans','Noto Sans CJK SC',sans-serif">开始时间分别是10:06:34-10:07:12和10:07:32-10:08:12</text></svg>
<div style="left:952px;top:102px;width:27px;height:421.4px;background:#e8e8e8;"></div>
<div style="left:951.6px;top:102px;width:0.6px;height:421.4px;background:#dcdcdc;"></div>
<div style="left:925px;top:116.8px;width:17px;height:13.6px;background:#fdfdfd;"></div>
<div style="left:925px;top:116.8px;width:0.9px;height:13.6px;background:#3878cc;"></div>
<svg style="left:930.09px;top:118.81px;" width="7.02" height="9.18" viewBox="0 0 5.2 6.8"><path d="M2.6 0.3 A2.3 2.3 0 0 1 4.9 2.6 C4.9 4.2 2.6 6.6 2.6 6.6 C2.6 6.6 0.3 4.2 0.3 2.6 A2.3 2.3 0 0 1 2.6 0.3 Z" fill="#3878cc"/><circle cx="2.6" cy="2.6" r="0.9" fill="#fff"/></svg>
<div style="left:945px;top:121.5px;width:3.6px;height:64.5px;background:#c8c8c8;border-radius:1.8px"></div>
<svg style="left:944.10px;top:104.60px;" width="3" height="3.6" viewBox="0 0 3 3.6"><path d="M0.2 1.6 L1.5 0.3 L2.8 1.6 M0.2 3.4 L1.5 2.1 L2.8 3.4" fill="none" stroke="#555" stroke-width="0.5"/></svg>
<svg style="left:944.40px;top:114.20px;" width="2.4" height="1.6" viewBox="0 0 2.4 1.6"><path d="M0 1.6 L1.2 0 L2.4 1.6 Z" fill="#555"/></svg>
<svg style="left:944.40px;top:492.20px;" width="2.4" height="1.6" viewBox="0 0 2.4 1.6"><path d="M0 0 L1.2 1.6 L2.4 0 Z" fill="#555"/></svg>
<svg style="left:944.10px;top:498.80px;" width="3" height="3.6" viewBox="0 0 3 3.6"><path d="M0.2 1.6 L1.5 0.3 L2.8 1.6 M0.2 3.4 L1.5 2.1 L2.8 3.4" fill="none" stroke="#555" stroke-width="0.5"/></svg>
<svg style="left:944.30px;top:507.40px;" width="2.6" height="2.6" viewBox="0 0 2.6 2.6"><circle cx="1.3" cy="1.3" r="1" fill="none" stroke="#555" stroke-width="0.5"/></svg>
<svg style="left:944.10px;top:514.50px;" width="3" height="3.6" viewBox="0 0 3 3.6"><path d="M0.2 0.3 L1.5 1.6 L2.8 0.3 M0.2 2.1 L1.5 3.4 L2.8 2.1" fill="none" stroke="#555" stroke-width="0.5"/></svg>
<div style="left:961.6px;top:112.4px;width:6.4px;height:0.6px;background:#777;"></div>
<svg style="left:960.66px;top:124.92px;" width="8.28" height="8.97" viewBox="0 0 7.2 7.8"><path d="M0.6 6.6 L1 4.8 L5.2 0.6 L6.6 2 L2.4 6.2 Z M0.3 7.4 H7" fill="none" stroke="#3a3a3a" stroke-width="0.7" stroke-linejoin="round"/></svg>
<svg style="left:960.66px;top:143.88px;" width="8.28" height="9.43" viewBox="0 0 7.2 8.2"><path d="M0.6 0.5 L6.8 3 L4.2 4 L6.2 7.2 L5.2 7.8 L3.4 4.6 L1.6 6.4 Z" fill="none" stroke="#3a3a3a" stroke-width="0.7" stroke-linejoin="round"/></svg>
<svg style="left:960.66px;top:163.66px;" width="8.28" height="8.28" viewBox="0 0 7.2 7.2"><path d="M0 1.6 H7.2 M0 5.6 H7.2" stroke="#3a3a3a" stroke-width="0.7"/><circle cx="2.2" cy="1.6" r="1.1" fill="#ebebeb" stroke="#3a3a3a" stroke-width="0.6"/><circle cx="5" cy="5.6" r="1.1" fill="#ebebeb" stroke="#3a3a3a" stroke-width="0.6"/></svg>
<svg style="left:960.54px;top:183.34px;" width="8.51" height="8.51" viewBox="0 0 7.4 7.4"><path d="M0.6 6.8 L6.4 1 M1 1 L3 1.4 L3.4 3.4 M6.8 6.8 L3.8 3.8 M5.2 0.6 A1.6 1.6 0 0 0 6.8 2.6" fill="none" stroke="#3a3a3a" stroke-width="0.8"/></svg>
<svg style="left:960.54px;top:203.05px;" width="8.51" height="8.51" viewBox="0 0 7.4 7.4"><path d="M0.5 0.8 H7 V5.4 H4 L2.6 7 V5.4 H0.5 Z M1.4 4.4 L3 2.6 L4.2 3.8 L5 3.2 L6.2 4.4" fill="none" stroke="#3a3a3a" stroke-width="0.7" stroke-linejoin="round"/></svg>
<svg style="left:960.43px;top:222.63px;" width="8.74" height="8.74" viewBox="0 0 7.6 7.6"><path d="M3.2 0.4 L4 2.4 L6.2 2.6 L4.6 4 L5.2 6.2 L3.2 5 L1.2 6.2 L1.8 4 L0.3 2.6 L2.4 2.4 Z M5.6 5.4 L7.2 7.2" fill="none" stroke="#3a3a3a" stroke-width="0.7" stroke-linejoin="round"/></svg>
<svg style="left:960.54px;top:242.55px;" width="8.51" height="8.51" viewBox="0 0 7.4 7.4"><circle cx="3.7" cy="3.7" r="3.2" fill="none" stroke="#3a3a3a" stroke-width="0.7"/><path d="M2.6 3 A1.1 1.1 0 1 1 3.7 4.1 V4.8" fill="none" stroke="#3a3a3a" stroke-width="0.7"/><rect x="3.3" y="5.3" width="0.8" height="0.8" fill="#444"/></svg>
<svg style="left:961.20px;top:265.20px;" width="7.2" height="1.6" viewBox="0 0 7.2 1.6"><circle cx="0.8" cy="0.8" r="0.75" fill="#555"/><circle cx="3.6" cy="0.8" r="0.75" fill="#555"/><circle cx="6.4" cy="0.8" r="0.75" fill="#555"/></svg>
<div style="left:37px;top:523.3px;width:942px;height:11.2px;background:#e6e6e6;"></div>
<div style="left:37px;top:523.3px;width:942px;height:0.5px;background:#d4d4d4;"></div>
<div class="t" style="left:44.9px;top:524.76px;font-size:6.1px;line-height:7px;color:#444;">页面: <span style="font-size:1.12em;">1</span>/<span style="font-size:1.12em;">8</span></div>
<div class="t" style="left:81px;top:524.76px;font-size:6.1px;line-height:7px;color:#444;">字数: <span style="font-size:1.12em;">372</span></div>
<div class="t" style="left:119.6px;top:524.76px;font-size:6.1px;line-height:7px;color:#444;">拼写检查: 打开</div>
<svg style="left:161.30px;top:527.82px;" width="2.6" height="1.56" viewBox="0 0 2.6 1.56"><path d="M0 0 L2.6 0 L1.3 1.56 Z" fill="#555"/></svg>
<div class="t" style="left:178.5px;top:524.76px;font-size:6.1px;line-height:7px;color:#444;">校对</div>
<div style="left:75px;top:525.4px;width:0.5px;height:6px;background:#cacaca;"></div>
<div style="left:113.6px;top:525.4px;width:0.5px;height:6px;background:#cacaca;"></div>
<div style="left:171.6px;top:525.4px;width:0.5px;height:6px;background:#cacaca;"></div>
<svg style="left:723.40px;top:525.80px;" width="6.8" height="4.8" viewBox="0 0 6.8 4.8"><path d="M0.3 2.4 C1.8 0.2 5 0.2 6.5 2.4 C5 4.6 1.8 4.6 0.3 2.4 Z" fill="none" stroke="#555" stroke-width="0.6"/><circle cx="3.4" cy="2.4" r="0.9" fill="none" stroke="#555" stroke-width="0.6"/></svg>
<div style="left:737.5px;top:525.4px;width:0.5px;height:6px;background:#cacaca;"></div>
<div style="left:742.2px;top:524.2px;width:8.8px;height:8.4px;background:#dcdcdc;border-radius:1.2px;border:0.6px solid #b4b4b4"></div>
<svg style="left:743.70px;top:525.00px;" width="5.8" height="6.6" viewBox="0 0 5.8 6.6"><rect x="0.4" y="0.4" width="5" height="5.8" fill="none" stroke="#444" stroke-width="0.7"/><path d="M1.6 2.2 H4.2 M1.6 3.8 H4.2" stroke="#444" stroke-width="0.5"/></svg>
<svg style="left:759.30px;top:525.00px;" width="6" height="6.6" viewBox="0 0 6 6.6"><path d="M0 0.5 H6 M1.6 2.4 H6 M1.6 4.2 H6 M0 6 H6" stroke="#555" stroke-width="0.6"/></svg>
<svg style="left:775.70px;top:525.00px;" width="5.6" height="6.6" viewBox="0 0 5.6 6.6"><path d="M0.5 0.5 L5 3.2 L0.5 6 Z" fill="none" stroke="#555" stroke-width="0.7" stroke-linejoin="round"/></svg>
<svg style="left:791.00px;top:525.10px;" width="6.4" height="6.4" viewBox="0 0 6.4 6.4"><circle cx="3.2" cy="3.2" r="2.8" fill="none" stroke="#555" stroke-width="0.6"/><ellipse cx="3.2" cy="3.2" rx="1.2" ry="2.8" fill="none" stroke="#555" stroke-width="0.5"/><path d="M0.4 3.2 H6" stroke="#555" stroke-width="0.5"/></svg>
<svg style="left:806.80px;top:525.10px;" width="6.4" height="6.4" viewBox="0 0 6.4 6.4"><path d="M0.6 5.8 L1 4.2 L4.6 0.6 L5.8 1.8 L2.2 5.4 Z" fill="none" stroke="#555" stroke-width="0.6" stroke-linejoin="round"/></svg>
<div style="left:818.4px;top:525.4px;width:0.5px;height:6px;background:#cacaca;"></div>
<svg style="left:826.80px;top:525.10px;" width="6.4" height="6.4" viewBox="0 0 6.4 6.4"><path d="M0.4 1.8 V0.4 H1.8 M4.6 0.4 H6 V1.8 M6 4.6 V6 H4.6 M1.8 6 H0.4 V4.6" fill="none" stroke="#555" stroke-width="0.6"/><rect x="2" y="2" width="2.4" height="2.4" fill="none" stroke="#555" stroke-width="0.6"/></svg>
<div class="t" style="left:843.3px;top:524.63px;font-size:6.3px;line-height:7px;color:#2a5aa8;">100%</div>
<svg style="left:864.70px;top:527.82px;" width="2.6" height="1.56" viewBox="0 0 2.6 1.56"><path d="M0 0 L2.6 0 L1.3 1.56 Z" fill="#555"/></svg>
<div style="left:876.6px;top:528px;width:6.2px;height:0.9px;background:#444;"></div>
<div style="left:888.9px;top:528.1px;width:51.6px;height:0.7px;background:#c4c4c4;"></div>
<div style="left:888.9px;top:527.9px;width:27px;height:1px;background:#2a6ae0;"></div>
<div style="left:914.8px;top:526.9px;width:2.8px;height:2.8px;background:#fff;border-radius:50%;border:0.5px solid #999"></div>
<svg style="left:947.60px;top:525.30px;" width="6" height="6" viewBox="0 0 6 6"><path d="M3 0 V6 M0 3 H6" stroke="#444" stroke-width="0.9"/></svg>
<svg style="left:963.60px;top:525.10px;" width="6.4" height="6.4" viewBox="0 0 6.4 6.4"><path d="M0.4 2 V0.4 H2 M4.4 0.4 H6 V2 M6 4.4 V6 H4.4 M2 6 H0.4 V4.4 M0.6 0.6 L2.4 2.4 M5.8 0.6 L4 2.4 M5.8 5.8 L4 4 M0.6 5.8 L2.4 4" fill="none" stroke="#555" stroke-width="0.55"/></svg>
<div style="left:37px;top:534.4px;width:942px;height:23.6px;background:linear-gradient(90deg,#e1e9f4 0%,#e6edf7 20%,#edf2f9 45%,#eaf0f8 70%,#e7eef8 100%);"></div>
<svg style="left:46.40px;top:540.20px;" width="12" height="12" viewBox="0 0 12 12"><path d="M1.2 5.4 A5 5 0 1 0 8.4 1.8 A4.6 4.6 0 0 1 1.2 5.4 Z" fill="#f59a1c"/><path d="M0.4 4.6 A1.9 1.9 0 0 1 3.4 3 A1.6 1.6 0 0 1 5.6 5.2 H1.2 A1 1 0 0 1 0.4 4.6 Z" fill="#c4d6ee"/></svg>
<div style="left:52.2px;top:538.1px;width:6.6px;height:6.6px;background:#dc3a20;border-radius:50%"></div>
<div class="t" style="left:54.2px;top:539.20px;font-size:4.6px;line-height:5px;color:#fff;font-weight:bold">6</div>
<div class="t" style="left:62.5px;top:539.88px;font-size:4.8px;line-height:5px;color:#222;font-weight:bold">19°C</div>
<div class="t" style="left:62.5px;top:547.35px;font-size:5.8px;line-height:6px;color:#555;">大部晴朗</div>
<div style="left:338.2px;top:539.8px;width:6px;height:6px;background:#0f78dc;border-radius:0.5px"></div>
<div style="left:345.0px;top:539.8px;width:6px;height:6px;background:#1c8cf0;border-radius:0.5px"></div>
<div style="left:338.2px;top:546.5999999999999px;width:6px;height:6px;background:#0f78dc;border-radius:0.5px"></div>
<div style="left:345.0px;top:546.5999999999999px;width:6px;height:6px;background:#1c8cf0;border-radius:0.5px"></div>
<div style="left:357.4px;top:539px;width:107px;height:14.6px;background:#f5f7fb;border-radius:7.3px;border:0.5px solid #dde3ec"></div>
<svg style="left:362.60px;top:542.80px;" width="7.8" height="7.8" viewBox="0 0 6 6"><circle cx="2.4" cy="2.4" r="1.9" fill="none" stroke="#333" stroke-width="0.8"/><path d="M3.8 3.8 L5.8 5.8" stroke="#333" stroke-width="0.9"/></svg>
<div class="t" style="left:374.6px;top:543.15px;font-size:6.9px;line-height:7px;color:#777;">搜索</div>
<svg style="left:440.90px;top:539.75px;" width="21.0" height="13.5" viewBox="0 0 14 9"><ellipse cx="2.4" cy="5.6" rx="2.2" ry="3" fill="#caa46a"/><circle cx="2.4" cy="2.2" r="1.7" fill="#e8cfa0"/><ellipse cx="7" cy="5.4" rx="2.6" ry="3.4" fill="#b8863e"/><circle cx="7" cy="1.9" r="1.9" fill="#f0d8a8"/><ellipse cx="11.6" cy="5.6" rx="2.2" ry="3" fill="#caa46a"/><circle cx="11.6" cy="2.2" r="1.7" fill="#e8cfa0"/><path d="M5.4 0.8 L7 -0.6 L8.6 0.8 Z" fill="#d8a020"/></svg>
<svg style="left:471.62px;top:541.83px;" width="10.35" height="10.35" viewBox="0 0 9 9"><rect x="0" y="0.6" width="6" height="7" rx="0.8" fill="#fff" stroke="#222" stroke-width="0.5"/><rect x="2" y="2" width="6.8" height="6.4" rx="0.8" fill="#222"/></svg>
<svg style="left:491.74px;top:540.55px;" width="13.52" height="11.7" viewBox="0 0 10.4 9"><path d="M0.4 1.6 A0.8 0.8 0 0 1 1.2 0.8 H3.8 L4.8 2 H9.2 A0.8 0.8 0 0 1 10 2.8 V7.8 H0.4 Z" fill="#e8a818"/><rect x="0.4" y="3.2" width="9.6" height="5" rx="0.6" fill="#f8cf3a"/><rect x="3" y="6.6" width="4.4" height="1.6" fill="#2a7ad8"/></svg>
<div style="left:497.2px;top:554.9px;width:2.6px;height:1px;background:#8a8f98;border-radius:0.5px"></div>
<svg style="left:513.70px;top:539.90px;" width="12.8" height="12.8" viewBox="0 0 10 10"><circle cx="5" cy="5" r="4.8" fill="#1a78d0"/><path d="M0.4 5.6 A4.8 4.8 0 0 1 9.6 3.8 C8 2.4 4.8 2.4 3.6 4.6 C2.6 6.6 4 9 6.6 9.4 A4.8 4.8 0 0 1 0.4 5.6 Z" fill="#30c0a0"/><path d="M3.6 4.8 C4.6 3 8 3 9.7 4.6 C9.9 6.4 8 7.2 6.4 6.6 C5.8 5.2 4.6 4.6 3.6 4.8 Z" fill="#e8f4fc"/></svg>
<div style="left:518.8000000000001px;top:554.9px;width:2.6px;height:1px;background:#8a8f98;border-radius:0.5px"></div>
<svg style="left:534.78px;top:541.65px;" width="11.44" height="9.9" viewBox="0 0 10.4 9"><ellipse cx="4" cy="3.8" rx="3.8" ry="3.2" fill="#2ac04a"/><path d="M1.6 6 L1.2 7.8 L3.2 6.8 Z" fill="#2ac04a"/><ellipse cx="7.2" cy="6" rx="3" ry="2.5" fill="#eef8ee" stroke="#2ac04a" stroke-width="0.4"/></svg>
<div style="left:539.2px;top:554.9px;width:2.6px;height:1px;background:#8a8f98;border-radius:0.5px"></div>
<svg style="left:557.00px;top:540.52px;" width="13.0" height="11.96" viewBox="0 0 10 9.2"><path d="M0.6 1.2 L2.8 8 L5 3 L7.2 8 L9.4 1.2" fill="none" stroke="#e0301c" stroke-width="1.8" stroke-linejoin="round"/></svg>
<div style="left:562.2px;top:554.9px;width:2.6px;height:1px;background:#8a8f98;border-radius:0.5px"></div>
<svg style="left:578.75px;top:540.55px;" width="11.5" height="11.5" viewBox="0 0 10 10"><circle cx="5" cy="5" r="4.8" fill="#f4f8ff" stroke="#c8d4ec" stroke-width="0.4"/><circle cx="3.6" cy="5.6" r="1.7" fill="none" stroke="#2a7af0" stroke-width="0.9"/><circle cx="6.4" cy="5.6" r="1.7" fill="none" stroke="#e8483a" stroke-width="0.9"/><circle cx="5" cy="3.4" r="1.5" fill="none" stroke="#2a7af0" stroke-width="0.9"/></svg>
<div style="left:582.3px;top:554.9px;width:4.4px;height:1px;background:#2a6ae0;border-radius:0.5px"></div>
<svg style="left:600.30px;top:540.40px;" width="11.8" height="11.8" viewBox="0 0 10 10"><rect x="0" y="0" width="10" height="10" rx="1.6" fill="#1a6ee8"/><path d="M1.8 7 V4.6 A1.6 1.6 0 0 1 5 4.6 A1.6 1.6 0 0 1 8.2 4.6 V7" fill="none" stroke="#fff" stroke-width="1.3"/></svg>
<div style="left:604.9000000000001px;top:554.9px;width:2.6px;height:1px;background:#8a8f98;border-radius:0.5px"></div>
<svg style="left:621.00px;top:539.80px;" width="13.0" height="13.0" viewBox="0 0 10.4 10.4"><rect x="0" y="0" width="10.4" height="10.4" rx="2.4" fill="#0c0c0c"/><path d="M2.2 3.4 H6.8 L8.4 4.4 M2.2 7 H6.8 L8.4 6 M2.2 3.4 V7 M6.8 3.4 L3.4 7 M6.8 7 L3.4 3.4" fill="none" stroke="#fff" stroke-width="0.8"/></svg>
<div style="left:626.2px;top:554.9px;width:2.6px;height:1px;background:#8a8f98;border-radius:0.5px"></div>
<svg style="left:644.00px;top:540.30px;" width="12.0" height="12.0" viewBox="0 0 10 10"><circle cx="5" cy="5" r="4.9" fill="#f4d020"/><path d="M5.8 1.2 V6.6" stroke="#1aa050" stroke-width="1"/><circle cx="4.6" cy="6.8" r="1.6" fill="#1aa050"/><path d="M5.8 1.2 C7 1.4 7.6 2.4 7.4 3.4" fill="none" stroke="#1aa050" stroke-width="0.9"/></svg>
<div style="left:648.7px;top:554.9px;width:2.6px;height:1px;background:#8a8f98;border-radius:0.5px"></div>
<svg style="left:665.22px;top:540.78px;" width="11.96" height="11.04" viewBox="0 0 10.4 9.6"><path d="M1 9 L2.2 2.6 L5 0.6 L8 2.4 L9.4 8.8 Z" fill="#d8483a"/><path d="M3 4.4 L5 2.6 L7 4.4 L6.4 7.4 H3.6 Z" fill="#f8e0d0"/><circle cx="7.6" cy="7.6" r="1.6" fill="#c02a20"/></svg>
<div style="left:669.9000000000001px;top:554.9px;width:2.6px;height:1px;background:#8a8f98;border-radius:0.5px"></div>
<svg style="left:816.00px;top:545.00px;" width="6" height="3.8" viewBox="0 0 6 3.8"><path d="M0.4 3.2 L3 0.6 L5.6 3.2" fill="none" stroke="#333" stroke-width="0.9"/></svg>
<svg style="left:829.90px;top:542.20px;" width="8.6" height="9" viewBox="0 0 8.6 9"><path d="M1.4 4.8 A3.2 3.2 0 0 1 7.2 2.8 M7.4 0.8 V3 H5.2 M7 5.4 A3.2 3.2 0 0 1 1.4 6.8 M1 8.6 V6.6 H3" fill="none" stroke="#333" stroke-width="0.8"/><circle cx="6.6" cy="7" r="1.8" fill="#f08a1a"/></svg>
<svg style="left:845.70px;top:543.00px;" width="9.4" height="7.4" viewBox="0 0 9.4 7.4"><path d="M2 6.4 A2 2 0 0 1 2.2 2.6 A2.8 2.8 0 0 1 7.4 3.2 A1.7 1.7 0 0 1 7.4 6.4 Z" fill="#eef0f4" stroke="#333" stroke-width="0.8"/></svg>
<svg style="left:862.50px;top:542.60px;" width="6.2" height="8.2" viewBox="0 0 6.2 8.2"><rect x="1.6" y="0.3" width="3" height="5.2" rx="1.5" fill="#2a7ae0"/><path d="M0.5 3.8 A2.6 2.6 0 0 0 5.7 3.8 M3.1 6.4 V8" fill="none" stroke="#2a7ae0" stroke-width="0.7"/></svg>
<svg style="left:878.50px;top:542.60px;" width="7.6" height="8.2" viewBox="0 0 7.6 8.2"><rect x="0.6" y="1.4" width="6.4" height="3.6" rx="0.6" fill="#8a8a8a"/><path d="M3.8 0 V1.4 M3.8 5 V8 M2.4 8 H5.2" stroke="#777" stroke-width="0.8"/></svg>
<svg style="left:895.80px;top:542.40px;" width="8.4" height="8.6" viewBox="0 0 8.4 8.6"><rect x="0" y="0.6" width="8.4" height="7.4" rx="2" fill="#f26a2a"/><path d="M5.8 2.6 H3.2 A1 1 0 0 0 3.2 4.4 H5.2 A1 1 0 0 1 5.2 6.2 H2.4" fill="none" stroke="#fff" stroke-width="0.9"/></svg>
<svg style="left:914.50px;top:543.20px;" width="8.4" height="7" viewBox="0 0 8.4 7"><path d="M0.4 2.4 A5.4 5.4 0 0 1 8 2.4 M1.8 3.9 A3.4 3.4 0 0 1 6.6 3.9" fill="none" stroke="#333" stroke-width="0.8"/><path d="M3 5 L4.2 6.6 L5.4 5 Z" fill="#333"/></svg>
<svg style="left:925.60px;top:543.10px;" width="7.6" height="7.2" viewBox="0 0 7.6 7.2"><path d="M0.4 2.4 H1.8 L3.8 0.6 V6.6 L1.8 4.8 H0.4 Z" fill="#555"/><path d="M5 2 A2.4 2.4 0 0 1 5 5.2 M6.2 1 A4 4 0 0 1 6.2 6.2" fill="none" stroke="#999" stroke-width="0.6"/></svg>
<div class="t" style="left:955.7px;top:538.62px;font-size:5.2px;line-height:6px;color:#222;width:12.8px;text-align:right">20:29</div>
<div class="t" style="left:943px;top:546.81px;font-size:5.7px;line-height:6px;color:#222;width:25.5px;text-align:right">2025/5/18</div>
</div></div>
<div style="left:0px;top:0px;width:1013px;height:27px;background:#1b1b1b;"></div>
<div style="left:0px;top:0px;width:82px;height:27px;background:#222;"></div>
<div style="left:82px;top:0px;width:1px;height:27px;background:#0e0e0e;"></div>
<div class="t" style="left:5px;top:4.98px;font-size:12.1px;line-height:14px;color:#d2d2d2;">PotPlayer</div>
<svg style="left:64.00px;top:9.00px;" width="9" height="6" viewBox="0 0 9 6"><path d="M1 1 L4.5 4.6 L8 1" fill="none" stroke="#c4c4c4" stroke-width="1.1"/></svg>
<div class="t" style="left:89px;top:6.31px;font-size:13px;line-height:15px;color:#6c6c6c;">MP4</div>
<div style="left:124px;top:8px;width:1px;height:9px;background:#484848;"></div>
<div class="t" style="left:134px;top:4.42px;font-size:16px;line-height:17px;color:#fff;"><span>全网最易上手<span style="margin-right:-2px">,</span>盘口实操教学</span><span style="font-size:12.4px">.2025.5.18_ev.mp4</span></div>
<div style="left:891px;top:0px;width:1px;height:27px;background:#0c0c0c;"></div>
<div style="left:892px;top:0px;width:121px;height:27px;background:#212121;"></div>
<svg style="left:903.00px;top:6.00px;" width="12" height="12" viewBox="0 0 12 12"><path d="M4.2 1 L11 7.8 L9.3 8.2 L7.6 6.6 L5.4 8.8 L5.2 11 L3.2 9 L0.8 11.4 L0.5 11.5 L0.6 11.2 L3 8.8 L1 6.8 L3.2 6.6 L5.4 4.4 L3.8 2.7 Z" fill="#8a8a8a"/></svg>
<div style="left:928px;top:15px;width:9px;height:2px;background:#9a9a9a;"></div>
<svg style="left:951.30px;top:7.00px;" width="10" height="10" viewBox="0 0 10 10"><rect x="0.6" y="0.6" width="8.8" height="8.8" fill="none" stroke="#a8a8a8" stroke-width="1.2"/><rect x="0.6" y="0.6" width="8.8" height="2.4" fill="#a8a8a8"/></svg>
<svg style="left:975.70px;top:7.00px;" width="10" height="10" viewBox="0 0 10 10"><path d="M0.5 3 V0.5 H3 M7 0.5 H9.5 V3 M9.5 7 V9.5 H7 M3 9.5 H0.5 V7 M0.8 0.8 L3.6 3.6 M9.2 0.8 L6.4 3.6 M9.2 9.2 L6.4 6.4 M0.8 9.2 L3.6 6.4" fill="none" stroke="#a0a0a0" stroke-width="1"/></svg>
<svg style="left:999.00px;top:7.00px;" width="10" height="10" viewBox="0 0 10 10"><path d="M1 1 L9 9 M9 1 L1 9" stroke="#c8c8c8" stroke-width="1.2"/></svg>
<div style="left:0px;top:558px;width:1013px;height:22px;background:#1b1b1b;"></div>
<div style="left:0px;top:568px;width:915px;height:2px;background:#3b3b3b;"></div>
<div style="left:0px;top:568px;width:18px;height:2px;background:#f2da00;"></div>
<div style="left:14.4px;top:564.5px;width:9px;height:9px;background:#eaeaea;border-radius:50%"></div>
<svg style="left:924.00px;top:563.50px;" width="13" height="11" viewBox="0 0 13 11"><path d="M0.5 3.5 H3 L7 0.5 V10.5 L3 7.5 H0.5 Z" fill="#8a8a8a"/><path d="M9 3 V8 M11.2 3.8 V7.2" stroke="#8a8a8a" stroke-width="1"/></svg>
<div style="left:942px;top:568px;width:64px;height:2px;background:#f2da00;"></div>
<div style="left:1001.5px;top:564.5px;width:9px;height:9px;background:#f4f4f4;border-radius:50%"></div>
<div style="left:0px;top:580px;width:1013px;height:37px;background:#1c1c1c;"></div>
<div style="left:0px;top:579px;width:1013px;height:1px;background:#0c0c0c;"></div>
<div style="left:34px;top:580px;width:1px;height:37px;background:#0c0c0c;"></div>
<div style="left:75px;top:580px;width:1px;height:37px;background:#0c0c0c;"></div>
<div style="left:116px;top:580px;width:1px;height:37px;background:#0c0c0c;"></div>
<div style="left:157px;top:580px;width:1px;height:37px;background:#0c0c0c;"></div>
<div style="left:198px;top:580px;width:1px;height:37px;background:#0c0c0c;"></div>
<div style="left:981px;top:580px;width:1px;height:37px;background:#0c0c0c;"></div>
<svg style="left:10.50px;top:595.00px;" width="8" height="10" viewBox="0 0 8 10"><path d="M0.5 0 L8 5 L0.5 10 Z" fill="#f0f0f0"/></svg>
<div style="left:51px;top:596px;width:8px;height:8px;background:#f0f0f0;"></div>
<svg style="left:91.00px;top:595.50px;" width="9" height="9" viewBox="0 0 9 9"><path d="M0 0 H2 V9 H0 Z M9 0 L2.5 4.5 L9 9 Z" fill="#f0f0f0"/></svg>
<svg style="left:132.00px;top:595.50px;" width="9" height="9" viewBox="0 0 9 9"><path d="M9 0 H7 V9 H9 Z M0 0 L6.5 4.5 L0 9 Z" fill="#f0f0f0"/></svg>
<svg style="left:173.00px;top:596.50px;" width="9" height="8" viewBox="0 0 9 8"><path d="M4.5 0 L9 5 H0 Z M0 6.4 H9 V8 H0 Z" fill="#f0f0f0"/></svg>
<div class="t" style="left:208.5px;top:594.44px;font-size:12px;line-height:14px;color:#fff;letter-spacing:-0.35px">00:00:33</div>
<div class="t" style="left:257.5px;top:594.44px;font-size:12px;line-height:14px;color:#777;">/</div>
<div class="t" style="left:266.5px;top:594.44px;font-size:12px;line-height:14px;color:#777;letter-spacing:-0.35px">00:33:24</div>
<div style="left:316px;top:594px;width:29px;height:14px;background:#2b2b2b;border-radius:2px"></div>
<div class="t" style="left:316px;top:595.52px;font-size:11.4px;line-height:12px;color:#e8c81a;width:29px;text-align:center;">H/W</div>
<div style="left:352px;top:594px;width:35px;height:14px;background:#2b2b2b;border-radius:2px"></div>
<div class="t" style="left:352px;top:595.52px;font-size:11.4px;line-height:12px;color:#777;width:35px;text-align:center;">AVC1</div>
<div style="left:393px;top:594px;width:29px;height:14px;background:#2b2b2b;border-radius:2px"></div>
<div class="t" style="left:393px;top:595.52px;font-size:11.4px;line-height:12px;color:#777;width:29px;text-align:center;">AAC</div>
<div style="left:428px;top:594px;width:27px;height:14px;background:#2b2b2b;border-radius:2px"></div>
<div class="t" style="left:428px;top:595.52px;font-size:11.4px;line-height:12px;color:#777;width:27px;text-align:center;">2.0</div>
<svg style="left:888.00px;top:593.50px;" width="17" height="14" viewBox="0 0 17 14"><path d="M0 1 H11 M0 4.5 H6 M0 8 H5" stroke="#f2da00" stroke-width="1.3"/><circle cx="10.5" cy="7.5" r="3" fill="none" stroke="#f2da00" stroke-width="1.6"/><path d="M12.8 9.8 L16 13" stroke="#f2da00" stroke-width="2"/></svg>
<svg style="left:921.80px;top:594.00px;" width="12" height="13" viewBox="0 0 12 13"><rect x="0" y="0" width="12" height="13" rx="2" fill="#8c8c8c"/><path d="M3 4 H9 M3 6.5 H9 M3 9 H9" stroke="#1c1c1c" stroke-width="1"/></svg>
<svg style="left:951.80px;top:593.50px;" width="14" height="14" viewBox="0 0 14 14"><g transform="translate(7 7)"><rect x="-1.5" y="-7" width="3" height="4" fill="#8c8c8c" transform="rotate(0)"/><rect x="-1.5" y="-7" width="3" height="4" fill="#8c8c8c" transform="rotate(45)"/><rect x="-1.5" y="-7" width="3" height="4" fill="#8c8c8c" transform="rotate(90)"/><rect x="-1.5" y="-7" width="3" height="4" fill="#8c8c8c" transform="rotate(135)"/><rect x="-1.5" y="-7" width="3" height="4" fill="#8c8c8c" transform="rotate(180)"/><rect x="-1.5" y="-7" width="3" height="4" fill="#8c8c8c" transform="rotate(225)"/><rect x="-1.5" y="-7" width="3" height="4" fill="#8c8c8c" transform="rotate(270)"/><rect x="-1.5" y="-7" width="3" height="4" fill="#8c8c8c" transform="rotate(315)"/><circle r="4.8" fill="#8c8c8c"/><circle r="2" fill="#1c1c1c"/></g></svg>
<svg style="left:995.20px;top:595.50px;" width="13" height="10" viewBox="0 0 13 10"><path d="M0 1 H13 M0 5 H13 M0 9 H13" stroke="#f0f0f0" stroke-width="1.2"/></svg>
</div>
</body>
</html>
